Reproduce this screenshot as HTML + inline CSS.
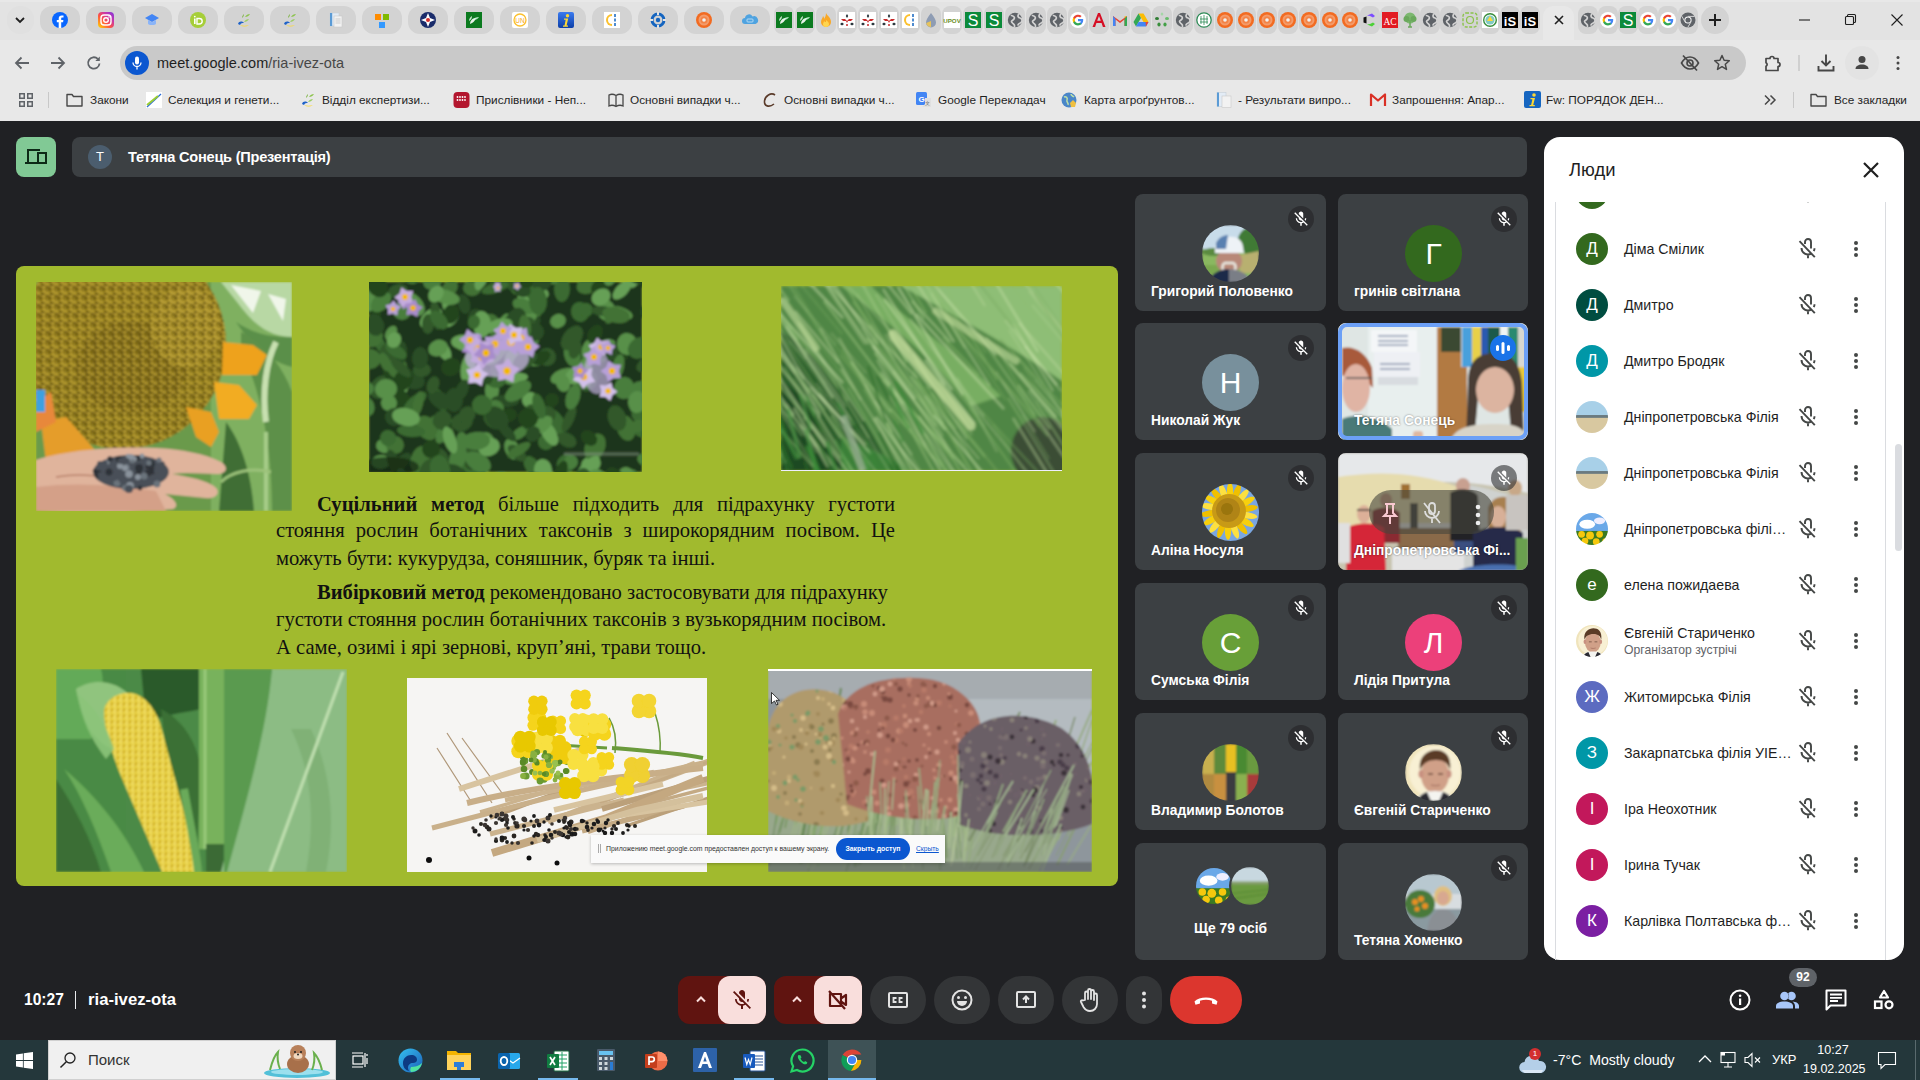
<!DOCTYPE html><html><head><meta charset="utf-8"><title>Meet</title><style>
*{margin:0;padding:0;box-sizing:border-box}
html,body{width:1920px;height:1080px;overflow:hidden;background:#202124;font-family:"Liberation Sans",sans-serif;position:relative}
.a{position:absolute}
svg{position:absolute;overflow:visible}
.pill{position:absolute;top:6px;height:28px;width:40px;border-radius:12px;background:#d3d3d3}
.np{position:absolute;top:6px;height:28px;width:20px;border-radius:8px;background:#d3d3d3}
.bm{position:absolute;top:90px;font-size:11.8px;color:#1f1f1f;white-space:nowrap;line-height:20px}
.tile{position:absolute;width:191px;height:117px;border-radius:8px;background:#3c4043;overflow:hidden}
.tname{position:absolute;left:16px;top:89.8px;font-size:13.8px;font-weight:bold;color:#fff;white-space:nowrap}
.av{position:absolute;left:67px;top:31px;width:57px;height:57px;border-radius:50%;color:#fff;font-size:30px;text-align:center;line-height:57px;overflow:hidden}
.mute{position:absolute;left:153px;top:12px;width:26px;height:26px;border-radius:50%;background:#2d2e31}
.row{position:absolute;left:1576px;width:320px;height:40px}
.pav{position:absolute;left:0;top:4px;width:32px;height:32px;border-radius:50%;color:#fff;font-size:16px;text-align:center;line-height:32px;overflow:hidden}
.pname{position:absolute;left:48px;top:11px;font-size:14.5px;color:#1f1f1f;white-space:nowrap;line-height:18px}
.cbtn{position:absolute;top:976px;height:48px;width:56px;border-radius:24px;background:#333537}
</style></head><body>
<div class="a" style="left:0;top:0;width:1920px;height:40px;background:#e3e3e3"></div>
<div class="a" style="left:0;top:0;width:1920px;height:2px;background:#e8e8e8"></div>
<div class="a" style="left:0;top:40px;width:1920px;height:81px;background:#e8e8e8"></div>
<div class="a" style="left:7px;top:6px;width:27px;height:28px;border-radius:13px;background:#e0e0e0"></div>
<svg style="left:14px;top:15px" width="12" height="10" viewBox="0 0 12 10"><path d="M2 3l4 4 4-4" stroke="#1f1f1f" stroke-width="1.8" fill="none"/></svg>
<div class="pill" style="left:40px"></div>
<svg style="left:52.0px;top:12.0px" width="16" height="16" viewBox="0 0 16 16"><circle cx="8" cy="8" r="8" fill="#0866ff"/><path d="M9.2 16V10.2h1.9l.3-2.3H9.2V6.6c0-.6.2-1.1 1.1-1.1h1.2V3.5c-.3 0-1-.1-1.8-.1-1.8 0-3 1.1-3 3.1v1.5H4.8v2.3h1.9V16z" fill="#fff"/></svg>
<div class="pill" style="left:86px"></div>
<svg style="left:98.0px;top:12.0px" width="16" height="16" viewBox="0 0 16 16"><defs><linearGradient id="igg" x1="0" y1="1" x2="1" y2="0"><stop offset="0" stop-color="#fd0"/><stop offset=".4" stop-color="#ff543e"/><stop offset=".7" stop-color="#c837ab"/><stop offset="1" stop-color="#7a34e0"/></linearGradient></defs><rect width="16" height="16" rx="4" fill="url(#igg)"/><rect x="3" y="3" width="10" height="10" rx="3" fill="none" stroke="#fff" stroke-width="1.4"/><circle cx="8" cy="8" r="2.3" fill="none" stroke="#fff" stroke-width="1.4"/><circle cx="11" cy="5" r=".8" fill="#fff"/></svg>
<div class="pill" style="left:132px"></div>
<svg style="left:144.0px;top:12.0px" width="16" height="16" viewBox="0 0 16 16"><path d="M8 2l7 4-7 4-7-4z" fill="#4285f4"/><path d="M4 8v3.5c0 2 8 2 8 0V8l-4 2.3z" fill="#8ab4f8"/></svg>
<div class="pill" style="left:178px"></div>
<svg style="left:190.0px;top:12.0px" width="16" height="16" viewBox="0 0 16 16"><circle cx="8" cy="8" r="8" fill="#a6ce39"/><rect x="4" y="6.5" width="1.6" height="5.5" fill="#fff"/><circle cx="4.8" cy="4.6" r=".9" fill="#fff"/><path d="M7 6.5h2.2c2 0 3 1.2 3 2.75S11.2 12 9.2 12H7z" fill="none" stroke="#fff" stroke-width="1.4"/></svg>
<div class="pill" style="left:224px"></div>
<svg style="left:236.0px;top:12.0px" width="16" height="16" viewBox="0 0 16 16"><path d="M9 5c1-2 3-3 5-3-1 2-3 3-5 3z" fill="#8bc34a"/><path d="M8 10c1-2 3-3 5-3-1 2-3 3-5 3z" fill="#9ccc65"/><path d="M6 6c0-2 1-3 2-4 0 2-1 3-2 4z" fill="#7cb342"/><path d="M2 12c1-3 4-3 6-1-2 0-3 0-4 2z" fill="#1e62c8"/><path d="M4 13c3 1 6 1 9 0-3 2-6 2-9 0z" fill="#fdd835"/></svg>
<div class="pill" style="left:270px"></div>
<svg style="left:282.0px;top:12.0px" width="16" height="16" viewBox="0 0 16 16"><path d="M9 5c1-2 3-3 5-3-1 2-3 3-5 3z" fill="#8bc34a"/><path d="M8 10c1-2 3-3 5-3-1 2-3 3-5 3z" fill="#9ccc65"/><path d="M6 6c0-2 1-3 2-4 0 2-1 3-2 4z" fill="#7cb342"/><path d="M2 12c1-3 4-3 6-1-2 0-3 0-4 2z" fill="#1e62c8"/><path d="M4 13c3 1 6 1 9 0-3 2-6 2-9 0z" fill="#fdd835"/></svg>
<div class="pill" style="left:316px"></div>
<svg style="left:328.0px;top:12.0px" width="16" height="16" viewBox="0 0 16 16"><rect x="2" y="1" width="9" height="13" fill="#e3ecf6" stroke="#c5cfd8" stroke-width=".6"/><rect x="2" y="1" width="2.2" height="13" fill="#5b9bd5"/><rect x="6" y="4" width="8" height="11" fill="#f2f2f2" stroke="#c8c8c8" stroke-width=".6"/><path d="M7.5 7h5M7.5 9h5M7.5 11h5" stroke="#bbb" stroke-width=".7"/></svg>
<div class="pill" style="left:362px"></div>
<svg style="left:374.0px;top:12.0px" width="16" height="16" viewBox="0 0 16 16"><rect x="1" y="2" width="6" height="6" fill="#ff8c00"/><rect x="9" y="2" width="6" height="6" fill="#7fba00"/><rect x="5" y="10" width="6" height="6" fill="#3399ff"/></svg>
<div class="pill" style="left:408px"></div>
<svg style="left:420.0px;top:12.0px" width="16" height="16" viewBox="0 0 16 16"><circle cx="8" cy="8" r="8" fill="#1a2c6b"/><path d="M8 1l2 5 5 2-5 2-2 5-2-5-5-2 5-2z" fill="#fff"/><circle cx="8" cy="8" r="2" fill="#d32f2f"/></svg>
<div class="pill" style="left:454px"></div>
<svg style="left:466.0px;top:12.0px" width="16" height="16" viewBox="0 0 16 16"><rect width="16" height="16" fill="#0b7a1f"/><path d="M4 12c0-3 2-6 6-6-1 3-3 5-6 6z" fill="#fff" opacity=".9"/><path d="M7 8c1-2 3-3 6-3-1 2-3 3-6 3z" fill="#dfe" opacity=".8"/><path d="M3 9c0-2 1-4 3-5 0 2-1 4-3 5z" fill="#fff" opacity=".8"/></svg>
<div class="pill" style="left:500px"></div>
<svg style="left:512.0px;top:12.0px" width="16" height="16" viewBox="0 0 16 16"><rect width="16" height="16" rx="2" fill="#fff"/><circle cx="8" cy="8" r="6" fill="none" stroke="#fbc02d" stroke-width="1.3"/><text x="8" y="10.5" font-size="6.5" text-anchor="middle" fill="#f9a825" font-family="Liberation Sans">UN</text></svg>
<div class="pill" style="left:546px"></div>
<svg style="left:558.0px;top:12.0px" width="16" height="16" viewBox="0 0 16 16"><defs><linearGradient id="ifg" x1="0" y1="0" x2="0" y2="1"><stop offset="0" stop-color="#3b7bf0"/><stop offset="1" stop-color="#0d3fa8"/></linearGradient></defs><rect width="16" height="16" rx="2" fill="url(#ifg)"/><circle cx="9.5" cy="3.8" r="1.7" fill="#fdd835"/><path d="M6 6.5h4.2l-1.6 7H10v1.2H5v-1.2h1.5l1.2-5.8H6z" fill="#fdd835"/></svg>
<div class="pill" style="left:592px"></div>
<svg style="left:604.0px;top:12.0px" width="16" height="16" viewBox="0 0 16 16"><rect width="16" height="16" fill="#fff"/><path d="M8 2a6 6 0 0 0 0 12z" fill="#fbc02d"/><path d="M8 4a4 4 0 0 0 0 8" fill="#fff"/><path d="M11 2v3M11 6.5v3M11 11v3" stroke="#1565c0" stroke-width="1.5"/></svg>
<div class="pill" style="left:638px"></div>
<svg style="left:650.0px;top:12.0px" width="16" height="16" viewBox="0 0 16 16"><circle cx="8" cy="8" r="6" fill="none" stroke="#1565c0" stroke-width="3"/><circle cx="8" cy="8" r="2.2" fill="#1565c0"/><path d="M8 0v3M8 13v3M0 8h3M13 8h3" stroke="#e3e3e3" stroke-width="2"/></svg>
<div class="pill" style="left:684px"></div>
<svg style="left:696.0px;top:12.0px" width="16" height="16" viewBox="0 0 16 16"><circle cx="8" cy="8" r="8" fill="#f26b21"/><circle cx="8" cy="8" r="5.5" fill="#f49b6a"/><circle cx="8" cy="8" r="3.5" fill="#f26b21" opacity=".5"/><circle cx="8" cy="8" r="1.8" fill="#f1f1f1"/></svg>
<div class="pill" style="left:730px"></div>
<svg style="left:742.0px;top:12.0px" width="16" height="16" viewBox="0 0 16 16"><path d="M3 12a3 3 0 0 1 0-6 4 4 0 0 1 7.5-1.5A3.2 3.2 0 0 1 13.5 12z" fill="#4fa3e0"/><rect x="5" y="7" width="6" height="3" rx=".8" fill="none" stroke="#cfe8fa" stroke-width=".8"/></svg>
<div class="np" style="left:774px;width:20px"></div>
<div class="np" style="left:795px;width:20px"></div>
<div class="np" style="left:816px;width:20px"></div>
<div class="np" style="left:837px;width:20px"></div>
<div class="np" style="left:858px;width:20px"></div>
<div class="np" style="left:879px;width:20px"></div>
<div class="np" style="left:900px;width:20px"></div>
<div class="np" style="left:921px;width:20px"></div>
<div class="np" style="left:942px;width:20px"></div>
<div class="np" style="left:963px;width:20px"></div>
<div class="np" style="left:984px;width:20px"></div>
<div class="np" style="left:1005px;width:20px"></div>
<div class="np" style="left:1026px;width:20px"></div>
<div class="np" style="left:1047px;width:20px"></div>
<div class="np" style="left:1068px;width:20px"></div>
<div class="np" style="left:1089px;width:20px"></div>
<div class="np" style="left:1110px;width:20px"></div>
<div class="np" style="left:1131px;width:20px"></div>
<div class="np" style="left:1152px;width:20px"></div>
<div class="np" style="left:1173px;width:20px"></div>
<div class="np" style="left:1194px;width:20px"></div>
<div class="np" style="left:1215px;width:20px"></div>
<div class="np" style="left:1236px;width:20px"></div>
<div class="np" style="left:1257px;width:20px"></div>
<div class="np" style="left:1278px;width:20px"></div>
<div class="np" style="left:1299px;width:20px"></div>
<div class="np" style="left:1320px;width:20px"></div>
<div class="np" style="left:1340px;width:20px"></div>
<div class="np" style="left:1360px;width:20px"></div>
<div class="np" style="left:1380px;width:20px"></div>
<div class="np" style="left:1400px;width:20px"></div>
<div class="np" style="left:1420px;width:20px"></div>
<div class="np" style="left:1440px;width:20px"></div>
<div class="np" style="left:1460px;width:20px"></div>
<div class="np" style="left:1480px;width:20px"></div>
<div class="np" style="left:1500px;width:20px"></div>
<div class="np" style="left:1520px;width:20px"></div>
<svg style="left:776.0px;top:12.0px" width="16" height="16" viewBox="0 0 16 16"><rect width="16" height="16" fill="#0b7a1f"/><path d="M4 12c0-3 2-6 6-6-1 3-3 5-6 6z" fill="#fff" opacity=".9"/><path d="M7 8c1-2 3-3 6-3-1 2-3 3-6 3z" fill="#dfe" opacity=".8"/><path d="M3 9c0-2 1-4 3-5 0 2-1 4-3 5z" fill="#fff" opacity=".8"/></svg>
<svg style="left:797.0px;top:12.0px" width="16" height="16" viewBox="0 0 16 16"><rect width="16" height="16" fill="#0b7a1f"/><path d="M4 12c0-3 2-6 6-6-1 3-3 5-6 6z" fill="#fff" opacity=".9"/><path d="M7 8c1-2 3-3 6-3-1 2-3 3-6 3z" fill="#dfe" opacity=".8"/><path d="M3 9c0-2 1-4 3-5 0 2-1 4-3 5z" fill="#fff" opacity=".8"/></svg>
<svg style="left:818.0px;top:12.0px" width="16" height="16" viewBox="0 0 16 16"><path d="M8 1c1 3 5 4 5 9a5 5 0 0 1-10 0c0-3 2-4 2-6 1 1 1 2 1 3 1-2 2-3 2-6z" fill="#f9a825"/><path d="M8 8c1 1 3 2 3 4a3 3 0 0 1-6 0c0-1 1-2 1-3 1 1 1 1 2 1z" fill="#ffd54f"/></svg>
<svg style="left:839.0px;top:12.0px" width="16" height="16" viewBox="0 0 16 16"><rect width="16" height="16" fill="#fff"/><path d="M8 2l1.2 2L8 6 6.8 4z" fill="#263238"/><path d="M2 7h4l2 2 2-2h4l-2 2h-3l-1 2-1-2H4z" fill="#c62828"/><path d="M1 12l2-1.5 2 1.5-2 1.5zM11 12l2-1.5 2 1.5-2 1.5z" fill="#263238"/><circle cx="8" cy="13" r="1" fill="#c62828"/></svg>
<svg style="left:860.0px;top:12.0px" width="16" height="16" viewBox="0 0 16 16"><rect width="16" height="16" fill="#fff"/><path d="M8 2l1.2 2L8 6 6.8 4z" fill="#263238"/><path d="M2 7h4l2 2 2-2h4l-2 2h-3l-1 2-1-2H4z" fill="#c62828"/><path d="M1 12l2-1.5 2 1.5-2 1.5zM11 12l2-1.5 2 1.5-2 1.5z" fill="#263238"/><circle cx="8" cy="13" r="1" fill="#c62828"/></svg>
<svg style="left:881.0px;top:12.0px" width="16" height="16" viewBox="0 0 16 16"><rect width="16" height="16" fill="#fff"/><path d="M8 2l1.2 2L8 6 6.8 4z" fill="#263238"/><path d="M2 7h4l2 2 2-2h4l-2 2h-3l-1 2-1-2H4z" fill="#c62828"/><path d="M1 12l2-1.5 2 1.5-2 1.5zM11 12l2-1.5 2 1.5-2 1.5z" fill="#263238"/><circle cx="8" cy="13" r="1" fill="#c62828"/></svg>
<svg style="left:902.0px;top:12.0px" width="16" height="16" viewBox="0 0 16 16"><rect width="16" height="16" fill="#fff"/><path d="M8 2a6 6 0 0 0 0 12z" fill="#fbc02d"/><path d="M8 4a4 4 0 0 0 0 8" fill="#fff"/><path d="M11 2v3M11 6.5v3M11 11v3" stroke="#1565c0" stroke-width="1.5"/></svg>
<svg style="left:923.0px;top:12.0px" width="16" height="16" viewBox="0 0 16 16"><path d="M8 1c3 4 5 7 5 9.5A5 5 0 0 1 3 10.5C3 8 5 5 8 1z" fill="#8e9cb3"/><path d="M3.2 11a5 5 0 0 0 4.8 4V9z" fill="#e6c35c"/></svg>
<svg style="left:944.0px;top:12.0px" width="16" height="16" viewBox="0 0 16 16"><rect width="16" height="16" fill="#fff"/><text x="8" y="10.5" font-size="6.2" font-weight="bold" text-anchor="middle" fill="#6b8e23" font-family="Liberation Sans">UPOV</text></svg>
<svg style="left:965.0px;top:12.0px" width="16" height="16" viewBox="0 0 16 16"><rect width="16" height="16" fill="#0b8a3a"/><text x="8" y="14.2" font-size="16" text-anchor="middle" fill="#fff" font-family="Liberation Sans">S</text></svg>
<svg style="left:986.0px;top:12.0px" width="16" height="16" viewBox="0 0 16 16"><rect width="16" height="16" fill="#0b8a3a"/><text x="8" y="14.2" font-size="16" text-anchor="middle" fill="#fff" font-family="Liberation Sans">S</text></svg>
<svg style="left:1007.0px;top:12.0px" width="16" height="16" viewBox="0 0 16 16"><circle cx="8" cy="8" r="7.2" fill="#5f6368"/><path d="M4.5 3.5c2.5.5 3.5 2 2.5 3.5S3.5 8.5 5 10.5s3 1.5 2.5 4M11.5 2.5c-1 1.5-.5 3 1.5 3.5s2.5 2.5 1.5 4-3 1-3.5 3" stroke="#d3d3d3" stroke-width="1.7" fill="none" stroke-linecap="round"/></svg>
<svg style="left:1028.0px;top:12.0px" width="16" height="16" viewBox="0 0 16 16"><circle cx="8" cy="8" r="7.2" fill="#5f6368"/><path d="M4.5 3.5c2.5.5 3.5 2 2.5 3.5S3.5 8.5 5 10.5s3 1.5 2.5 4M11.5 2.5c-1 1.5-.5 3 1.5 3.5s2.5 2.5 1.5 4-3 1-3.5 3" stroke="#d3d3d3" stroke-width="1.7" fill="none" stroke-linecap="round"/></svg>
<svg style="left:1049.0px;top:12.0px" width="16" height="16" viewBox="0 0 16 16"><circle cx="8" cy="8" r="7.2" fill="#5f6368"/><path d="M4.5 3.5c2.5.5 3.5 2 2.5 3.5S3.5 8.5 5 10.5s3 1.5 2.5 4M11.5 2.5c-1 1.5-.5 3 1.5 3.5s2.5 2.5 1.5 4-3 1-3.5 3" stroke="#d3d3d3" stroke-width="1.7" fill="none" stroke-linecap="round"/></svg>
<svg style="left:1070.0px;top:12.0px" width="16" height="16" viewBox="0 0 16 16"><circle cx="8" cy="8" r="8" fill="#fff"/><path d="M13.2 8.2c0-.4 0-.8-.1-1.2H8v2.2h2.9a2.6 2.6 0 0 1-1.1 1.7v1.4h1.8a5.3 5.3 0 0 0 1.6-4.1z" fill="#4285f4"/><path d="M8 13.4c1.5 0 2.7-.5 3.6-1.3l-1.8-1.4c-.5.3-1.1.5-1.8.5-1.4 0-2.6-.9-3-2.2H3.2v1.4A5.4 5.4 0 0 0 8 13.4z" fill="#34a853"/><path d="M5 9a3.2 3.2 0 0 1 0-2V5.6H3.2a5.4 5.4 0 0 0 0 4.8z" fill="#fbbc05"/><path d="M8 4.7c.8 0 1.5.3 2.1.8l1.5-1.5A5.4 5.4 0 0 0 3.2 5.6L5 7c.4-1.3 1.6-2.3 3-2.3z" fill="#ea4335"/></svg>
<svg style="left:1091.0px;top:12.0px" width="16" height="16" viewBox="0 0 16 16"><path d="M1.5 15L7 1h2l5.5 14h-2.6L10.6 11H5.4l-1.3 4zM6.2 8.8h3.6L8 4z" fill="#d50f25"/></svg>
<svg style="left:1112.0px;top:12.0px" width="16" height="16" viewBox="0 0 16 16"><path d="M1 4v10h2.5V7.5L8 11l4.5-3.5V14H15V4l-7 5z" fill="#ea4335"/><path d="M1 4v10h2.5V7z" fill="#4285f4"/><path d="M12.5 7v7H15V4z" fill="#34a853"/><path d="M15 4l-2.5 2V4.5z" fill="#fbbc04"/></svg>
<svg style="left:1133.0px;top:12.0px" width="16" height="16" viewBox="0 0 16 16"><path d="M5.5 1.5h5L15.5 10h-5z" fill="#fbbc04"/><path d="M5.5 1.5L.5 10 3 14.5 8 6z" fill="#34a853"/><path d="M3 14.5h10l2.5-4.5H5.5z" fill="#4285f4"/><path d="M13 14.5l2.5-4.5h-3z" fill="#ea4335"/></svg>
<svg style="left:1154.0px;top:12.0px" width="16" height="16" viewBox="0 0 16 16"><ellipse cx="3" cy="6.5" rx="2" ry="1.6" fill="#2e7d32"/><ellipse cx="13" cy="6.5" rx="2" ry="1.6" fill="#66bb6a"/><ellipse cx="5" cy="12.5" rx="1.6" ry="2" fill="#388e3c"/><ellipse cx="11" cy="12.5" rx="1.6" ry="2" fill="#43a047"/><ellipse cx="8" cy="2" rx="1.3" ry="1.6" fill="#a5d6a7"/></svg>
<svg style="left:1175.0px;top:12.0px" width="16" height="16" viewBox="0 0 16 16"><circle cx="8" cy="8" r="7.2" fill="#5f6368"/><path d="M4.5 3.5c2.5.5 3.5 2 2.5 3.5S3.5 8.5 5 10.5s3 1.5 2.5 4M11.5 2.5c-1 1.5-.5 3 1.5 3.5s2.5 2.5 1.5 4-3 1-3.5 3" stroke="#d3d3d3" stroke-width="1.7" fill="none" stroke-linecap="round"/></svg>
<svg style="left:1196.0px;top:12.0px" width="16" height="16" viewBox="0 0 16 16"><circle cx="8" cy="8" r="7.2" fill="#fff" stroke="#2e8b57" stroke-width="1.3"/><path d="M5 4v8M8 3v10M11 4v8M4 7h8M4 10h8" stroke="#2e8b57" stroke-width=".8"/></svg>
<svg style="left:1217.0px;top:12.0px" width="16" height="16" viewBox="0 0 16 16"><circle cx="8" cy="8" r="8" fill="#f26b21"/><circle cx="8" cy="8" r="5.5" fill="#f49b6a"/><circle cx="8" cy="8" r="3.5" fill="#f26b21" opacity=".5"/><circle cx="8" cy="8" r="1.8" fill="#f1f1f1"/></svg>
<svg style="left:1238.0px;top:12.0px" width="16" height="16" viewBox="0 0 16 16"><circle cx="8" cy="8" r="8" fill="#f26b21"/><circle cx="8" cy="8" r="5.5" fill="#f49b6a"/><circle cx="8" cy="8" r="3.5" fill="#f26b21" opacity=".5"/><circle cx="8" cy="8" r="1.8" fill="#f1f1f1"/></svg>
<svg style="left:1259.0px;top:12.0px" width="16" height="16" viewBox="0 0 16 16"><circle cx="8" cy="8" r="8" fill="#f26b21"/><circle cx="8" cy="8" r="5.5" fill="#f49b6a"/><circle cx="8" cy="8" r="3.5" fill="#f26b21" opacity=".5"/><circle cx="8" cy="8" r="1.8" fill="#f1f1f1"/></svg>
<svg style="left:1280.0px;top:12.0px" width="16" height="16" viewBox="0 0 16 16"><circle cx="8" cy="8" r="8" fill="#f26b21"/><circle cx="8" cy="8" r="5.5" fill="#f49b6a"/><circle cx="8" cy="8" r="3.5" fill="#f26b21" opacity=".5"/><circle cx="8" cy="8" r="1.8" fill="#f1f1f1"/></svg>
<svg style="left:1301.0px;top:12.0px" width="16" height="16" viewBox="0 0 16 16"><circle cx="8" cy="8" r="8" fill="#f26b21"/><circle cx="8" cy="8" r="5.5" fill="#f49b6a"/><circle cx="8" cy="8" r="3.5" fill="#f26b21" opacity=".5"/><circle cx="8" cy="8" r="1.8" fill="#f1f1f1"/></svg>
<svg style="left:1322.0px;top:12.0px" width="16" height="16" viewBox="0 0 16 16"><circle cx="8" cy="8" r="8" fill="#f26b21"/><circle cx="8" cy="8" r="5.5" fill="#f49b6a"/><circle cx="8" cy="8" r="3.5" fill="#f26b21" opacity=".5"/><circle cx="8" cy="8" r="1.8" fill="#f1f1f1"/></svg>
<svg style="left:1342.0px;top:12.0px" width="16" height="16" viewBox="0 0 16 16"><circle cx="8" cy="8" r="8" fill="#f26b21"/><circle cx="8" cy="8" r="5.5" fill="#f49b6a"/><circle cx="8" cy="8" r="3.5" fill="#f26b21" opacity=".5"/><circle cx="8" cy="8" r="1.8" fill="#f1f1f1"/></svg>
<svg style="left:1362.0px;top:12.0px" width="16" height="16" viewBox="0 0 16 16"><path d="M5 3.5L10 1.5l3 2.5-2 1.5L8 4z" fill="#7c4dff"/><path d="M1.5 5.5L4.5 4.5 4.5 11.5 1.5 10.5z" fill="#111"/><path d="M5 12.5L10 14.5l3-2.5-2-1.5L8 12z" fill="#4cd137"/></svg>
<svg style="left:1382.0px;top:12.0px" width="16" height="16" viewBox="0 0 16 16"><rect width="16" height="16" fill="#e21b22"/><text x="8" y="13" font-size="9.5" text-anchor="middle" fill="#fff" font-family="Liberation Serif">AC</text></svg>
<svg style="left:1402.0px;top:12.0px" width="16" height="16" viewBox="0 0 16 16"><circle cx="8" cy="6" r="5.5" fill="#7cb86f"/><circle cx="4.5" cy="7" r="3" fill="#6aa85c"/><circle cx="11.5" cy="7" r="3" fill="#6aa85c"/><path d="M8 8v7M6 15h4" stroke="#6aa85c" stroke-width="1.5"/></svg>
<svg style="left:1422.0px;top:12.0px" width="16" height="16" viewBox="0 0 16 16"><circle cx="8" cy="8" r="7.2" fill="#5f6368"/><path d="M4.5 3.5c2.5.5 3.5 2 2.5 3.5S3.5 8.5 5 10.5s3 1.5 2.5 4M11.5 2.5c-1 1.5-.5 3 1.5 3.5s2.5 2.5 1.5 4-3 1-3.5 3" stroke="#d3d3d3" stroke-width="1.7" fill="none" stroke-linecap="round"/></svg>
<svg style="left:1442.0px;top:12.0px" width="16" height="16" viewBox="0 0 16 16"><circle cx="8" cy="8" r="7.2" fill="#5f6368"/><path d="M4.5 3.5c2.5.5 3.5 2 2.5 3.5S3.5 8.5 5 10.5s3 1.5 2.5 4M11.5 2.5c-1 1.5-.5 3 1.5 3.5s2.5 2.5 1.5 4-3 1-3.5 3" stroke="#d3d3d3" stroke-width="1.7" fill="none" stroke-linecap="round"/></svg>
<svg style="left:1462.0px;top:12.0px" width="16" height="16" viewBox="0 0 16 16"><rect x="1" y="1" width="14" height="14" rx="3" fill="none" stroke="#8bc34a" stroke-width="1.4" stroke-dasharray="3 1.5"/><circle cx="8" cy="8" r="3.5" fill="none" stroke="#8bc34a" stroke-width="1.2"/></svg>
<svg style="left:1482.0px;top:12.0px" width="16" height="16" viewBox="0 0 16 16"><rect width="16" height="16" fill="#fff"/><circle cx="8" cy="8" r="7" fill="#388e3c"/><circle cx="8" cy="8" r="5.6" fill="#fff"/><circle cx="8" cy="8" r="4.6" fill="#80cbc4"/><path d="M8 4l3 5H5z" fill="#fdd835"/></svg>
<svg style="left:1502.0px;top:12.0px" width="16" height="16" viewBox="0 0 16 16"><rect width="16" height="16" fill="#000"/><text x="8" y="13.5" font-size="13" font-weight="bold" text-anchor="middle" fill="#fff" font-family="Liberation Sans">iS</text></svg>
<svg style="left:1522.0px;top:12.0px" width="16" height="16" viewBox="0 0 16 16"><rect width="16" height="16" fill="#000"/><text x="8" y="13.5" font-size="13" font-weight="bold" text-anchor="middle" fill="#fff" font-family="Liberation Sans">iS</text></svg>
<div class="a" style="left:1543px;top:6px;width:31px;height:34px;border-radius:10px 10px 0 0;background:#e8e8e8"></div>
<svg style="left:1553px;top:14px" width="12" height="12" viewBox="0 0 12 12"><path d="M2 2l8 8M10 2l-8 8" stroke="#1f1f1f" stroke-width="1.6"/></svg>
<div class="np" style="left:1578px"></div>
<div class="np" style="left:1598px"></div>
<div class="np" style="left:1618px"></div>
<div class="np" style="left:1638px"></div>
<div class="np" style="left:1658px"></div>
<div class="np" style="left:1678px"></div>
<svg style="left:1580.0px;top:12.0px" width="16" height="16" viewBox="0 0 16 16"><circle cx="8" cy="8" r="7.2" fill="#5f6368"/><path d="M4.5 3.5c2.5.5 3.5 2 2.5 3.5S3.5 8.5 5 10.5s3 1.5 2.5 4M11.5 2.5c-1 1.5-.5 3 1.5 3.5s2.5 2.5 1.5 4-3 1-3.5 3" stroke="#d3d3d3" stroke-width="1.7" fill="none" stroke-linecap="round"/></svg>
<svg style="left:1600.0px;top:12.0px" width="16" height="16" viewBox="0 0 16 16"><circle cx="8" cy="8" r="8" fill="#fff"/><path d="M13.2 8.2c0-.4 0-.8-.1-1.2H8v2.2h2.9a2.6 2.6 0 0 1-1.1 1.7v1.4h1.8a5.3 5.3 0 0 0 1.6-4.1z" fill="#4285f4"/><path d="M8 13.4c1.5 0 2.7-.5 3.6-1.3l-1.8-1.4c-.5.3-1.1.5-1.8.5-1.4 0-2.6-.9-3-2.2H3.2v1.4A5.4 5.4 0 0 0 8 13.4z" fill="#34a853"/><path d="M5 9a3.2 3.2 0 0 1 0-2V5.6H3.2a5.4 5.4 0 0 0 0 4.8z" fill="#fbbc05"/><path d="M8 4.7c.8 0 1.5.3 2.1.8l1.5-1.5A5.4 5.4 0 0 0 3.2 5.6L5 7c.4-1.3 1.6-2.3 3-2.3z" fill="#ea4335"/></svg>
<svg style="left:1620.0px;top:12.0px" width="16" height="16" viewBox="0 0 16 16"><rect width="16" height="16" fill="#0b8a3a"/><text x="8" y="14.2" font-size="16" text-anchor="middle" fill="#fff" font-family="Liberation Sans">S</text></svg>
<svg style="left:1640.0px;top:12.0px" width="16" height="16" viewBox="0 0 16 16"><circle cx="8" cy="8" r="8" fill="#fff"/><path d="M13.2 8.2c0-.4 0-.8-.1-1.2H8v2.2h2.9a2.6 2.6 0 0 1-1.1 1.7v1.4h1.8a5.3 5.3 0 0 0 1.6-4.1z" fill="#4285f4"/><path d="M8 13.4c1.5 0 2.7-.5 3.6-1.3l-1.8-1.4c-.5.3-1.1.5-1.8.5-1.4 0-2.6-.9-3-2.2H3.2v1.4A5.4 5.4 0 0 0 8 13.4z" fill="#34a853"/><path d="M5 9a3.2 3.2 0 0 1 0-2V5.6H3.2a5.4 5.4 0 0 0 0 4.8z" fill="#fbbc05"/><path d="M8 4.7c.8 0 1.5.3 2.1.8l1.5-1.5A5.4 5.4 0 0 0 3.2 5.6L5 7c.4-1.3 1.6-2.3 3-2.3z" fill="#ea4335"/></svg>
<svg style="left:1660.0px;top:12.0px" width="16" height="16" viewBox="0 0 16 16"><circle cx="8" cy="8" r="8" fill="#fff"/><path d="M13.2 8.2c0-.4 0-.8-.1-1.2H8v2.2h2.9a2.6 2.6 0 0 1-1.1 1.7v1.4h1.8a5.3 5.3 0 0 0 1.6-4.1z" fill="#4285f4"/><path d="M8 13.4c1.5 0 2.7-.5 3.6-1.3l-1.8-1.4c-.5.3-1.1.5-1.8.5-1.4 0-2.6-.9-3-2.2H3.2v1.4A5.4 5.4 0 0 0 8 13.4z" fill="#34a853"/><path d="M5 9a3.2 3.2 0 0 1 0-2V5.6H3.2a5.4 5.4 0 0 0 0 4.8z" fill="#fbbc05"/><path d="M8 4.7c.8 0 1.5.3 2.1.8l1.5-1.5A5.4 5.4 0 0 0 3.2 5.6L5 7c.4-1.3 1.6-2.3 3-2.3z" fill="#ea4335"/></svg>
<svg style="left:1680.0px;top:12.0px" width="16" height="16" viewBox="0 0 16 16"><circle cx="8" cy="8" r="7.5" fill="#5f6368"/><circle cx="8" cy="8" r="3.6" fill="#fff"/><circle cx="8" cy="8" r="2.6" fill="#5f6368"/><path d="M8 4.4h6.6M5 9.8L1.8 4.2M11 9.8l-3.3 5.7" stroke="#d3d3d3" stroke-width="1"/></svg>
<div class="a" style="left:1701px;top:6px;width:28px;height:28px;border-radius:14px;background:#d3d3d3"></div>
<svg style="left:1707px;top:12px" width="16" height="16" viewBox="0 0 16 16"><path d="M8 2v12M2 8h12" stroke="#1f1f1f" stroke-width="2"/></svg>
<svg style="left:1799px;top:14px" width="12" height="12" viewBox="0 0 12 12"><path d="M0 6h11" stroke="#1f1f1f" stroke-width="1.1"/></svg>
<svg style="left:1845px;top:14px" width="12" height="12" viewBox="0 0 12 12"><rect x=".5" y="2.5" width="8" height="8" rx="1" fill="none" stroke="#1f1f1f" stroke-width="1.1"/><path d="M2.5 2.5V1.5c0-.6.4-1 1-1h6c.6 0 1 .4 1 1v6c0 .6-.4 1-1 1h-1" fill="none" stroke="#1f1f1f" stroke-width="1.1"/></svg>
<svg style="left:1891px;top:14px" width="12" height="12" viewBox="0 0 12 12"><path d="M.5 .5l11 11M11.5 .5l-11 11" stroke="#1f1f1f" stroke-width="1.1"/></svg>
<svg style="left:13px;top:54px" width="18" height="18" viewBox="0 0 18 18"><path d="M16 9H3M8.5 3.5L3 9l5.5 5.5" stroke="#5f6368" stroke-width="1.8" fill="none"/></svg>
<svg style="left:49px;top:54px" width="18" height="18" viewBox="0 0 18 18"><path d="M2 9h13M9.5 3.5L15 9l-5.5 5.5" stroke="#5f6368" stroke-width="1.8" fill="none"/></svg>
<svg style="left:85px;top:54px" width="18" height="18" viewBox="0 0 18 18"><path d="M14.5 9.5a5.7 5.7 0 1 1-1.7-4.6" stroke="#5f6368" stroke-width="1.8" fill="none"/><path d="M14.8 2.5v4.5h-4.5z" fill="#5f6368"/></svg>
<div class="a" style="left:120px;top:46px;width:1626px;height:34px;border-radius:17px;background:#c9c9c9"></div>
<div class="a" style="left:125px;top:51px;width:24px;height:24px;border-radius:12px;background:#0b57d0"></div>
<svg style="left:131px;top:56px" width="12" height="14" viewBox="0 0 12 14"><rect x="4" y="0.5" width="4" height="8" rx="2" fill="#fff"/><path d="M2 6.5a4 4 0 0 0 8 0M6 10.5v3" stroke="#fff" stroke-width="1.3" fill="none"/></svg>
<div class="a" style="left:157px;top:53px;font-size:14.5px;line-height:20px;color:#1f1f1f;white-space:nowrap">meet.google.com<span style="color:#474747">/ria-ivez-ota</span></div>
<svg style="left:1680px;top:54px" width="20" height="18" viewBox="0 0 20 18"><path d="M1.5 9C4 4.5 7 3 10 3s6 1.5 8.5 6C16 13.5 13 15 10 15S4 13.5 1.5 9z" fill="none" stroke="#474747" stroke-width="1.6"/><circle cx="10" cy="9" r="3" fill="none" stroke="#474747" stroke-width="1.6"/><path d="M3 1.5l14 15" stroke="#474747" stroke-width="1.7"/></svg>
<svg style="left:1712px;top:53px" width="20" height="20" viewBox="0 0 20 20"><path d="M10 2.5l2.1 4.8 5.2.5-4 3.5 1.2 5.1L10 13.7l-4.5 2.7 1.2-5.1-4-3.5 5.2-.5z" fill="none" stroke="#474747" stroke-width="1.5" stroke-linejoin="round"/></svg>
<svg style="left:1763px;top:53px" width="20" height="20" viewBox="0 0 20 20"><path d="M3 5.5h4a2 2 0 0 1 4 0h4v4a2 2 0 0 1 0 4v4H3v-4.2a2 2 0 0 0 0-3.6z" fill="none" stroke="#474747" stroke-width="1.7" stroke-linejoin="round"/></svg>
<div class="a" style="left:1798px;top:55px;width:2px;height:16px;background:#d0d0d0"></div>
<svg style="left:1816px;top:53px" width="20" height="20" viewBox="0 0 20 20"><path d="M10 1.5v11M5.5 8L10 12.5 14.5 8M2.5 13v4.5h15V13" stroke="#474747" stroke-width="1.9" fill="none"/></svg>
<div class="a" style="left:1845px;top:46px;width:34px;height:34px;border-radius:17px;background:#e3e3e3"></div>
<svg style="left:1852px;top:53px" width="20" height="20" viewBox="0 0 20 20"><circle cx="10" cy="6.5" r="3.5" fill="#474747"/><path d="M3.5 16c0-3 3-4.5 6.5-4.5s6.5 1.5 6.5 4.5z" fill="#474747"/></svg>
<svg style="left:1892px;top:55px" width="12" height="18" viewBox="0 0 12 18"><circle cx="6" cy="2.5" r="1.5" fill="#474747"/><circle cx="6" cy="8" r="1.5" fill="#474747"/><circle cx="6" cy="13.5" r="1.5" fill="#474747"/></svg>
<svg style="left:19px;top:93px" width="14" height="14" viewBox="0 0 14 14"><g fill="none" stroke="#5f6368" stroke-width="1.5"><rect x=".75" y=".75" width="4.5" height="4.5"/><rect x="8.75" y=".75" width="4.5" height="4.5"/><rect x=".75" y="8.75" width="4.5" height="4.5"/><rect x="8.75" y="8.75" width="4.5" height="4.5"/></g></svg>
<div class="a" style="left:48px;top:92px;width:1px;height:16px;background:#c8c8c8"></div>
<svg style="left:66px;top:93px" width="17" height="14" viewBox="0 0 17 14"><path d="M1 1.5h5l1.5 2H16v9.5H1z" fill="none" stroke="#474747" stroke-width="1.4" stroke-linejoin="round"/></svg>
<div class="bm" style="left:90px">Закони</div>
<svg style="left:146px;top:92px" width="16" height="16" viewBox="0 0 16 16"><rect width="16" height="16" fill="#fff"/><path d="M1 15L15 2" stroke="#2b6cd8" stroke-width="1.2"/><path d="M1 13L12 4" stroke="#9acd32" stroke-width="2"/></svg>
<div class="bm" style="left:168px">Селекция и генети...</div>
<svg style="left:300.0px;top:92.0px" width="16" height="16" viewBox="0 0 16 16"><path d="M9 5c1-2 3-3 5-3-1 2-3 3-5 3z" fill="#8bc34a"/><path d="M8 10c1-2 3-3 5-3-1 2-3 3-5 3z" fill="#9ccc65"/><path d="M6 6c0-2 1-3 2-4 0 2-1 3-2 4z" fill="#7cb342"/><path d="M2 12c1-3 4-3 6-1-2 0-3 0-4 2z" fill="#1e62c8"/><path d="M4 13c3 1 6 1 9 0-3 2-6 2-9 0z" fill="#fdd835"/></svg>
<div class="bm" style="left:322px">Відділ експертизи...</div>
<svg style="left:453px;top:92px" width="17" height="16" viewBox="0 0 17 16"><rect x=".5" width="16" height="16" rx="4" fill="#b3162e"/><g fill="#fff"><circle cx="4.5" cy="5" r=".9"/><circle cx="7" cy="5" r=".9"/><circle cx="9.5" cy="5" r=".9"/><circle cx="12" cy="5" r=".9"/><circle cx="4.5" cy="8" r=".9"/><circle cx="7" cy="8" r=".9"/><circle cx="9.5" cy="8" r=".9"/><circle cx="12" cy="8" r=".9"/></g></svg>
<div class="bm" style="left:476px">Прислівники - Неп...</div>
<svg style="left:608px;top:93px" width="16" height="14" viewBox="0 0 16 14"><path d="M1 2c2-1 4.5-1 7 .5C10.5 1 13 1 15 2v11c-2-1-4.5-1-7 .5C5.5 12 3 12 1 13z M8 2.5v11" fill="none" stroke="#474747" stroke-width="1.3"/></svg>
<div class="bm" style="left:630px">Основні випадки ч...</div>
<svg style="left:762px;top:92px" width="16" height="16" viewBox="0 0 16 16"><path d="M13 3C9 0 3 4 2.5 9S7 16 12 12" fill="none" stroke="#5a3b2a" stroke-width="1.6"/></svg>
<div class="bm" style="left:784px">Основні випадки ч...</div>
<svg style="left:916px;top:92px" width="16" height="16" viewBox="0 0 16 16"><rect x="0" y="0" width="11" height="13" rx="1.5" fill="#4285f4"/><text x="5.5" y="10" font-size="8" font-weight="bold" text-anchor="middle" fill="#fff" font-family="Liberation Sans">G</text><path d="M9 6h6v9H6l3-3z" fill="#e0e0e0"/><text x="11.5" y="13" font-size="5" text-anchor="middle" fill="#555" font-family="Liberation Sans">文</text></svg>
<div class="bm" style="left:938px">Google Перекладач</div>
<svg style="left:1061px;top:92px" width="17" height="17" viewBox="0 0 17 17"><circle cx="8" cy="8" r="7.5" fill="#4a86c8"/><path d="M3 5c2-1 4 1 3 3s2 3 1 5M10 2c0 2 2 2 3 3" stroke="#bde0a8" stroke-width="1.5" fill="none"/><path d="M9 11l3-3 3 3-1 4h-4z" fill="#f0c040"/></svg>
<div class="bm" style="left:1084px">Карта агроґрунтов...</div>
<svg style="left:1216px;top:92px" width="16" height="16" viewBox="0 0 16 16"><rect x="1" y="0.5" width="9" height="14" fill="#e3ecf6" stroke="#c5cfd8" stroke-width=".6"/><rect x="1" y=".5" width="2" height="14" fill="#5b9bd5"/><rect x="6" y="4" width="9" height="11.5" fill="#f2f2f2" stroke="#c8c8c8" stroke-width=".6"/></svg>
<div class="bm" style="left:1238px">- Результати випро...</div>
<svg style="left:1370px;top:93px" width="16" height="14" viewBox="0 0 16 14"><path d="M1 13V1.5l7 6 7-6V13" fill="none" stroke="#d93025" stroke-width="2.2" stroke-linejoin="round"/></svg>
<div class="bm" style="left:1392px">Запрошення: Апар...</div>
<svg style="left:1524px;top:91px" width="17" height="17" viewBox="0 0 17 17"><rect width="17" height="17" rx="2" fill="#1565c0"/><circle cx="10" cy="4" r="1.8" fill="#fdd835"/><path d="M6.5 7h4.5l-1.8 7h1.6v1.3H5.5V14h1.6l1.3-5.7H6.5z" fill="#fdd835"/></svg>
<div class="bm" style="left:1546px">Fw: ПОРЯДОК ДЕН...</div>
<svg style="left:1763px;top:94px" width="14" height="12" viewBox="0 0 14 12"><path d="M2 1.5L6.5 6 2 10.5M7.5 1.5L12 6l-4.5 4.5" stroke="#474747" stroke-width="1.5" fill="none"/></svg>
<div class="a" style="left:1793px;top:92px;width:1px;height:16px;background:#c8c8c8"></div>
<svg style="left:1810px;top:93px" width="17" height="14" viewBox="0 0 17 14"><path d="M1 1.5h5l1.5 2H16v9.5H1z" fill="none" stroke="#474747" stroke-width="1.4" stroke-linejoin="round"/></svg>
<div class="bm" style="left:1834px">Все закладки</div>
<div class="a" style="left:16px;top:137px;width:40px;height:40px;border-radius:8px;background:#81c995"></div>
<svg style="left:24px;top:147px" width="24" height="20" viewBox="0 0 24 20"><path d="M3 3h13" stroke="#0d2a17" stroke-width="2"/><path d="M4 3v12M1 16h14" stroke="#0d2a17" stroke-width="2"/><rect x="14" y="6" width="8" height="10" fill="none" stroke="#0d2a17" stroke-width="2"/></svg>
<div class="a" style="left:72px;top:137px;width:1455px;height:40px;border-radius:8px;background:#3c4043"></div>
<div class="a" style="left:88px;top:145px;width:24px;height:24px;border-radius:12px;background:#4b5d6e;color:#fff;font-size:13px;line-height:24px;text-align:center">T</div>
<div class="a" style="left:128px;top:147px;font-size:14.6px;letter-spacing:-0.25px;line-height:20px;color:#fff;font-weight:bold;white-space:nowrap">Тетяна Сонець (Презентація)</div>
<div class="a" style="left:16px;top:266px;width:1102px;height:620px;background:#a1ba2e;border-radius:8px"></div>
<svg style="left:36px;top:282px" width="256" height="229" viewBox="0 0 256 229"><defs><filter id="b36" x="-10%" y="-10%" width="120%" height="120%"><feGaussianBlur stdDeviation="1.0"/></filter><clipPath id="c36"><rect width="256" height="229"/></clipPath></defs><g clip-path="url(#c36)"><g filter="url(#b36)"><defs><pattern id="sfd" width="9" height="9" patternUnits="userSpaceOnUse"><circle cx="2.1" cy="4.9" r="1.1" fill="#5a4a10" opacity="1.0"/><circle cx="4.3" cy="5.2" r="1.2" fill="#c8ac40" opacity="1.0"/><circle cx="2.3" cy="2.1" r="1.5" fill="#c8ac40" opacity="1.0"/><circle cx="4.9" cy="4.9" r="1.1" fill="#b89a30" opacity="1.0"/><circle cx="2.1" cy="1.4" r="1.4" fill="#c8ac40" opacity="1.0"/><circle cx="6.7" cy="6.0" r="0.8" fill="#5a4a10" opacity="1.0"/><circle cx="0.4" cy="7.0" r="1.4" fill="#7e6a18" opacity="1.0"/><circle cx="4.3" cy="6.5" r="1.4" fill="#9c8424" opacity="1.0"/><circle cx="7.1" cy="3.8" r="1.3" fill="#5a4a10" opacity="1.0"/><circle cx="4.0" cy="8.4" r="1.4" fill="#6a5812" opacity="1.0"/><circle cx="0.3" cy="4.5" r="1.0" fill="#9c8424" opacity="1.0"/><circle cx="3.9" cy="5.6" r="1.0" fill="#5a4a10" opacity="1.0"/><circle cx="7.5" cy="5.2" r="1.2" fill="#c8ac40" opacity="1.0"/><circle cx="5.3" cy="8.1" r="1.3" fill="#6a5812" opacity="1.0"/><circle cx="7.7" cy="8.9" r="1.3" fill="#b89a30" opacity="1.0"/><circle cx="6.3" cy="2.9" r="1.2" fill="#5a4a10" opacity="1.0"/><circle cx="5.1" cy="6.4" r="0.9" fill="#5a4a10" opacity="1.0"/><circle cx="2.4" cy="1.1" r="1.1" fill="#9c8424" opacity="1.0"/><circle cx="8.9" cy="0.8" r="1.4" fill="#c8ac40" opacity="1.0"/><circle cx="8.1" cy="0.2" r="1.1" fill="#c8ac40" opacity="1.0"/></pattern></defs><rect width="256" height="229" fill="#6a9a4c"/><rect x="175" y="0" width="81" height="229" fill="#7fb060"/><path d="M185 0h71v55c-25 0-40-15-55-35z" fill="#b8d8a4"/><path d="M195 3l30 6-8 22zM232 12l18 5-3 22z" fill="#f0f6ea"/><path d="M200 40c15 10 30 15 56 15v30c-20-5-40-20-56-45z" fill="#5a8f48"/><path d="M205 50c20 10 40 30 51 60V229h-20c0-60-10-120-31-160z" fill="#5d9048"/><path d="M240 60c-10 20-14 50-10 80" stroke="#c8e0b0" stroke-width="6" fill="none"/><path d="M190 140c15 20 25 50 28 89h-35z" fill="#3f6e35"/><path d="M230 150l0 79" stroke="#a6cc88" stroke-width="4"/><path d="M185 200c10-10 30-15 50-10" stroke="#9cc27a" stroke-width="3" fill="none"/><ellipse cx="86" cy="62" rx="104" ry="105" fill="#94801e"/><ellipse cx="60" cy="40" rx="60" ry="55" fill="#98821e"/><ellipse cx="95" cy="85" rx="55" ry="45" fill="#7e6a16"/><ellipse cx="150" cy="45" rx="35" ry="40" fill="#ac942c"/><ellipse cx="86" cy="62" rx="104" ry="105" fill="url(#sfd)" opacity=".85"/><path d="M187 60l30 3 14 10-10 20-35 0z" fill="#eea21c"/><path d="M178 100l25 3 18 20-8 14-30 0z" fill="#f2ac22"/><path d="M150 125l25 5 8 20-8 15-15-10z" fill="#e9a020"/><path d="M5 140l25-5 35 40-55 5z" fill="#e59d2c"/><path d="M0 120l15-10 5 30-20 10z" fill="#e8883a"/><path d="M0 178c30-10 80-14 120-12 25 1 50 6 65 14 8 5 6 12-4 12-15 0-30-2-45 0 20 3 40 8 45 15 3 6-3 10-12 9l-40-4c10 5 15 12 8 15-40 4-90 4-137 2z" fill="#e0b49c"/><path d="M0 205c40-5 80-2 120 4l10 20H0z" fill="#d4a088"/><path d="M20 195c30-5 60 0 90 10" stroke="#b8806a" stroke-width="1.5" fill="none"/><ellipse cx="95" cy="190" rx="38" ry="17" fill="#4a5058"/><circle cx="83" cy="177" r="3.3" fill="#2e3338"/><circle cx="104" cy="206" r="2.4" fill="#2e3338"/><circle cx="92" cy="174" r="2.2" fill="#8a939c"/><circle cx="62" cy="192" r="3.9" fill="#2e3338"/><circle cx="103" cy="186" r="4.0" fill="#2e3338"/><circle cx="102" cy="176" r="2.8" fill="#2e3338"/><circle cx="103" cy="192" r="3.4" fill="#2e3338"/><circle cx="104" cy="195" r="2.7" fill="#2e3338"/><circle cx="102" cy="195" r="3.0" fill="#8a939c"/><circle cx="119" cy="189" r="3.8" fill="#4a5058"/><circle cx="81" cy="201" r="3.4" fill="#6a737c"/><circle cx="64" cy="182" r="3.0" fill="#4a5058"/><circle cx="115" cy="182" r="4.0" fill="#2e3338"/><circle cx="98" cy="177" r="2.7" fill="#8a939c"/><circle cx="91" cy="208" r="2.2" fill="#4a5058"/><circle cx="84" cy="184" r="3.0" fill="#8a939c"/><circle cx="79" cy="197" r="2.1" fill="#4a5058"/><circle cx="123" cy="182" r="2.8" fill="#4a5058"/><circle cx="59" cy="189" r="2.3" fill="#2e3338"/><circle cx="96" cy="179" r="2.6" fill="#6a737c"/><circle cx="89" cy="206" r="3.0" fill="#6a737c"/><circle cx="93" cy="192" r="3.8" fill="#8a939c"/><circle cx="126" cy="182" r="2.8" fill="#4a5058"/><circle cx="112" cy="185" r="2.5" fill="#2e3338"/><circle cx="71" cy="180" r="2.5" fill="#8a939c"/><circle cx="123" cy="178" r="2.6" fill="#6a737c"/><circle cx="91" cy="185" r="3.1" fill="#6a737c"/><circle cx="112" cy="191" r="3.2" fill="#2e3338"/><circle cx="94" cy="204" r="3.9" fill="#8a939c"/><circle cx="89" cy="186" r="3.0" fill="#8a939c"/><circle cx="74" cy="177" r="2.7" fill="#2e3338"/><circle cx="65" cy="193" r="3.1" fill="#4a5058"/><circle cx="106" cy="174" r="2.4" fill="#8a939c"/><circle cx="69" cy="181" r="2.7" fill="#4a5058"/><circle cx="95" cy="175" r="3.0" fill="#8a939c"/><circle cx="95" cy="183" r="2.3" fill="#4a5058"/><circle cx="116" cy="189" r="3.4" fill="#2e3338"/><circle cx="86" cy="197" r="3.8" fill="#4a5058"/><circle cx="113" cy="181" r="2.7" fill="#6a737c"/><circle cx="85" cy="179" r="3.1" fill="#4a5058"/><circle cx="108" cy="194" r="3.6" fill="#6a737c"/><circle cx="121" cy="202" r="3.5" fill="#6a737c"/><circle cx="73" cy="190" r="3.5" fill="#2e3338"/><circle cx="120" cy="189" r="2.4" fill="#4a5058"/><circle cx="93" cy="207" r="4.0" fill="#4a5058"/><rect x="0" y="108" width="9" height="22" fill="#3da0e0"/></g></g></svg>
<svg style="left:369px;top:282px" width="273" height="190" viewBox="0 0 273 190"><defs><filter id="b369" x="-10%" y="-10%" width="120%" height="120%"><feGaussianBlur stdDeviation="1.0"/></filter><clipPath id="c369"><rect width="273" height="190"/></clipPath></defs><g clip-path="url(#c369)"><g filter="url(#b369)"><rect width="273" height="190" fill="#1f361c"/><ellipse cx="123" cy="108" rx="14" ry="7" transform="rotate(91 123 108)" fill="#58904a"/><ellipse cx="44" cy="98" rx="12" ry="9" transform="rotate(17 44 98)" fill="#2a4e25"/><ellipse cx="32" cy="103" rx="14" ry="8" transform="rotate(107 32 103)" fill="#66a056"/><ellipse cx="273" cy="127" rx="12" ry="6" transform="rotate(3 273 127)" fill="#4a7e3e"/><ellipse cx="7" cy="30" rx="9" ry="5" transform="rotate(84 7 30)" fill="#24441f"/><ellipse cx="163" cy="31" rx="9" ry="6" transform="rotate(1 163 31)" fill="#4a7e3e"/><ellipse cx="124" cy="48" rx="15" ry="10" transform="rotate(151 124 48)" fill="#2a4e25"/><ellipse cx="82" cy="38" rx="9" ry="5" transform="rotate(138 82 38)" fill="#66a056"/><ellipse cx="22" cy="51" rx="8" ry="5" transform="rotate(123 22 51)" fill="#58904a"/><ellipse cx="51" cy="181" rx="11" ry="10" transform="rotate(72 51 181)" fill="#4a7e3e"/><ellipse cx="156" cy="32" rx="12" ry="7" transform="rotate(56 156 32)" fill="#3a6a30"/><ellipse cx="272" cy="149" rx="8" ry="6" transform="rotate(18 272 149)" fill="#3a6a30"/><ellipse cx="126" cy="92" rx="12" ry="6" transform="rotate(92 126 92)" fill="#30582b"/><ellipse cx="113" cy="71" rx="10" ry="10" transform="rotate(0 113 71)" fill="#2a4e25"/><ellipse cx="282" cy="-6" rx="8" ry="10" transform="rotate(108 282 -6)" fill="#4a7e3e"/><ellipse cx="2" cy="21" rx="11" ry="5" transform="rotate(110 2 21)" fill="#2a4e25"/><ellipse cx="103" cy="6" rx="9" ry="8" transform="rotate(3 103 6)" fill="#427236"/><ellipse cx="99" cy="85" rx="15" ry="7" transform="rotate(103 99 85)" fill="#66a056"/><ellipse cx="44" cy="22" rx="14" ry="9" transform="rotate(45 44 22)" fill="#58904a"/><ellipse cx="36" cy="122" rx="11" ry="8" transform="rotate(70 36 122)" fill="#24441f"/><ellipse cx="167" cy="79" rx="8" ry="5" transform="rotate(173 167 79)" fill="#58904a"/><ellipse cx="207" cy="72" rx="10" ry="10" transform="rotate(88 207 72)" fill="#30582b"/><ellipse cx="262" cy="195" rx="8" ry="7" transform="rotate(118 262 195)" fill="#4a7e3e"/><ellipse cx="72" cy="183" rx="9" ry="5" transform="rotate(48 72 183)" fill="#24441f"/><ellipse cx="63" cy="-0" rx="9" ry="8" transform="rotate(175 63 -0)" fill="#4a7e3e"/><ellipse cx="96" cy="177" rx="15" ry="8" transform="rotate(124 96 177)" fill="#30582b"/><ellipse cx="163" cy="184" rx="11" ry="7" transform="rotate(56 163 184)" fill="#3a6a30"/><ellipse cx="-4" cy="124" rx="11" ry="9" transform="rotate(57 -4 124)" fill="#4a7e3e"/><ellipse cx="12" cy="105" rx="13" ry="10" transform="rotate(133 12 105)" fill="#30582b"/><ellipse cx="222" cy="182" rx="10" ry="8" transform="rotate(162 222 182)" fill="#66a056"/><ellipse cx="267" cy="-4" rx="11" ry="5" transform="rotate(119 267 -4)" fill="#66a056"/><ellipse cx="161" cy="118" rx="8" ry="8" transform="rotate(179 161 118)" fill="#66a056"/><ellipse cx="203" cy="72" rx="13" ry="8" transform="rotate(79 203 72)" fill="#4a7e3e"/><ellipse cx="142" cy="98" rx="9" ry="5" transform="rotate(4 142 98)" fill="#4a7e3e"/><ellipse cx="136" cy="119" rx="14" ry="6" transform="rotate(2 136 119)" fill="#2a4e25"/><ellipse cx="32" cy="118" rx="11" ry="9" transform="rotate(62 32 118)" fill="#24441f"/><ellipse cx="136" cy="41" rx="10" ry="6" transform="rotate(114 136 41)" fill="#58904a"/><ellipse cx="248" cy="71" rx="12" ry="7" transform="rotate(25 248 71)" fill="#24441f"/><ellipse cx="93" cy="178" rx="7" ry="5" transform="rotate(176 93 178)" fill="#30582b"/><ellipse cx="23" cy="89" rx="14" ry="9" transform="rotate(69 23 89)" fill="#24441f"/><ellipse cx="187" cy="140" rx="14" ry="8" transform="rotate(58 187 140)" fill="#3a6a30"/><ellipse cx="71" cy="118" rx="12" ry="6" transform="rotate(64 71 118)" fill="#3a6a30"/><ellipse cx="178" cy="75" rx="9" ry="9" transform="rotate(48 178 75)" fill="#30582b"/><ellipse cx="223" cy="197" rx="8" ry="6" transform="rotate(96 223 197)" fill="#427236"/><ellipse cx="271" cy="134" rx="9" ry="7" transform="rotate(32 271 134)" fill="#3a6a30"/><ellipse cx="211" cy="102" rx="7" ry="6" transform="rotate(140 211 102)" fill="#30582b"/><ellipse cx="105" cy="156" rx="14" ry="5" transform="rotate(168 105 156)" fill="#66a056"/><ellipse cx="28" cy="85" rx="12" ry="10" transform="rotate(68 28 85)" fill="#427236"/><ellipse cx="126" cy="127" rx="9" ry="9" transform="rotate(147 126 127)" fill="#4a7e3e"/><ellipse cx="52" cy="179" rx="15" ry="10" transform="rotate(97 52 179)" fill="#427236"/><ellipse cx="67" cy="141" rx="7" ry="8" transform="rotate(7 67 141)" fill="#427236"/><ellipse cx="151" cy="151" rx="11" ry="5" transform="rotate(146 151 151)" fill="#4a7e3e"/><ellipse cx="116" cy="-3" rx="11" ry="8" transform="rotate(165 116 -3)" fill="#24441f"/><ellipse cx="34" cy="98" rx="13" ry="9" transform="rotate(124 34 98)" fill="#24441f"/><ellipse cx="160" cy="135" rx="13" ry="7" transform="rotate(101 160 135)" fill="#30582b"/><ellipse cx="143" cy="167" rx="11" ry="7" transform="rotate(69 143 167)" fill="#58904a"/><ellipse cx="79" cy="20" rx="11" ry="6" transform="rotate(90 79 20)" fill="#66a056"/><ellipse cx="147" cy="96" rx="12" ry="5" transform="rotate(174 147 96)" fill="#66a056"/><ellipse cx="149" cy="198" rx="8" ry="5" transform="rotate(30 149 198)" fill="#24441f"/><ellipse cx="111" cy="191" rx="14" ry="6" transform="rotate(85 111 191)" fill="#30582b"/><ellipse cx="90" cy="179" rx="14" ry="10" transform="rotate(94 90 179)" fill="#4a7e3e"/><ellipse cx="46" cy="120" rx="14" ry="6" transform="rotate(140 46 120)" fill="#3a6a30"/><ellipse cx="0" cy="23" rx="7" ry="6" transform="rotate(130 0 23)" fill="#58904a"/><ellipse cx="172" cy="12" rx="13" ry="6" transform="rotate(92 172 12)" fill="#2a4e25"/><ellipse cx="200" cy="137" rx="14" ry="5" transform="rotate(114 200 137)" fill="#30582b"/><ellipse cx="148" cy="171" rx="11" ry="6" transform="rotate(39 148 171)" fill="#30582b"/><ellipse cx="58" cy="146" rx="13" ry="10" transform="rotate(57 58 146)" fill="#427236"/><ellipse cx="251" cy="31" rx="13" ry="6" transform="rotate(17 251 31)" fill="#58904a"/><ellipse cx="29" cy="9" rx="10" ry="7" transform="rotate(169 29 9)" fill="#30582b"/><ellipse cx="49" cy="122" rx="13" ry="5" transform="rotate(103 49 122)" fill="#427236"/><ellipse cx="257" cy="193" rx="8" ry="8" transform="rotate(136 257 193)" fill="#58904a"/><ellipse cx="225" cy="91" rx="7" ry="9" transform="rotate(110 225 91)" fill="#24441f"/><ellipse cx="33" cy="29" rx="9" ry="9" transform="rotate(178 33 29)" fill="#4a7e3e"/><ellipse cx="160" cy="18" rx="12" ry="5" transform="rotate(17 160 18)" fill="#66a056"/><ellipse cx="127" cy="98" rx="10" ry="8" transform="rotate(2 127 98)" fill="#3a6a30"/><ellipse cx="237" cy="28" rx="11" ry="9" transform="rotate(73 237 28)" fill="#58904a"/><ellipse cx="167" cy="10" rx="13" ry="7" transform="rotate(15 167 10)" fill="#66a056"/><ellipse cx="157" cy="30" rx="12" ry="7" transform="rotate(137 157 30)" fill="#2a4e25"/><ellipse cx="257" cy="146" rx="13" ry="9" transform="rotate(73 257 146)" fill="#427236"/><ellipse cx="248" cy="136" rx="13" ry="9" transform="rotate(73 248 136)" fill="#30582b"/><ellipse cx="11" cy="62" rx="11" ry="5" transform="rotate(64 11 62)" fill="#3a6a30"/><ellipse cx="58" cy="188" rx="12" ry="7" transform="rotate(119 58 188)" fill="#30582b"/><ellipse cx="146" cy="72" rx="15" ry="8" transform="rotate(126 146 72)" fill="#66a056"/><ellipse cx="277" cy="-5" rx="12" ry="9" transform="rotate(46 277 -5)" fill="#66a056"/><ellipse cx="138" cy="150" rx="12" ry="5" transform="rotate(47 138 150)" fill="#2a4e25"/><ellipse cx="255" cy="106" rx="11" ry="10" transform="rotate(102 255 106)" fill="#4a7e3e"/><ellipse cx="177" cy="160" rx="8" ry="8" transform="rotate(137 177 160)" fill="#3a6a30"/><ellipse cx="103" cy="187" rx="10" ry="10" transform="rotate(154 103 187)" fill="#3a6a30"/><ellipse cx="116" cy="94" rx="9" ry="7" transform="rotate(56 116 94)" fill="#2a4e25"/><ellipse cx="132" cy="47" rx="14" ry="8" transform="rotate(135 132 47)" fill="#3a6a30"/><ellipse cx="-6" cy="41" rx="7" ry="6" transform="rotate(136 -6 41)" fill="#66a056"/><ellipse cx="5" cy="56" rx="10" ry="8" transform="rotate(130 5 56)" fill="#427236"/><ellipse cx="12" cy="180" rx="10" ry="7" transform="rotate(175 12 180)" fill="#58904a"/><ellipse cx="3" cy="11" rx="13" ry="10" transform="rotate(26 3 11)" fill="#58904a"/><ellipse cx="167" cy="14" rx="12" ry="7" transform="rotate(37 167 14)" fill="#3a6a30"/><ellipse cx="95" cy="22" rx="10" ry="6" transform="rotate(75 95 22)" fill="#2a4e25"/><ellipse cx="177" cy="133" rx="10" ry="9" transform="rotate(147 177 133)" fill="#30582b"/><ellipse cx="269" cy="144" rx="9" ry="6" transform="rotate(161 269 144)" fill="#427236"/><ellipse cx="71" cy="118" rx="13" ry="8" transform="rotate(34 71 118)" fill="#2a4e25"/><ellipse cx="211" cy="30" rx="9" ry="10" transform="rotate(165 211 30)" fill="#3a6a30"/><ellipse cx="174" cy="-8" rx="9" ry="5" transform="rotate(7 174 -8)" fill="#58904a"/><ellipse cx="149" cy="5" rx="8" ry="8" transform="rotate(99 149 5)" fill="#427236"/><ellipse cx="132" cy="64" rx="10" ry="7" transform="rotate(24 132 64)" fill="#4a7e3e"/><ellipse cx="225" cy="84" rx="14" ry="9" transform="rotate(138 225 84)" fill="#24441f"/><ellipse cx="114" cy="44" rx="13" ry="7" transform="rotate(118 114 44)" fill="#427236"/><ellipse cx="75" cy="149" rx="14" ry="6" transform="rotate(118 75 149)" fill="#4a7e3e"/><ellipse cx="125" cy="58" rx="11" ry="7" transform="rotate(102 125 58)" fill="#24441f"/><ellipse cx="78" cy="153" rx="8" ry="6" transform="rotate(119 78 153)" fill="#4a7e3e"/><ellipse cx="194" cy="94" rx="13" ry="7" transform="rotate(159 194 94)" fill="#58904a"/><ellipse cx="95" cy="142" rx="10" ry="6" transform="rotate(128 95 142)" fill="#2a4e25"/><ellipse cx="118" cy="159" rx="9" ry="7" transform="rotate(72 118 159)" fill="#58904a"/><ellipse cx="15" cy="164" rx="7" ry="8" transform="rotate(105 15 164)" fill="#58904a"/><ellipse cx="206" cy="67" rx="10" ry="6" transform="rotate(106 206 67)" fill="#30582b"/><ellipse cx="42" cy="149" rx="14" ry="6" transform="rotate(4 42 149)" fill="#3a6a30"/><ellipse cx="149" cy="109" rx="15" ry="8" transform="rotate(145 149 109)" fill="#4a7e3e"/><ellipse cx="161" cy="54" rx="11" ry="7" transform="rotate(49 161 54)" fill="#4a7e3e"/><ellipse cx="253" cy="8" rx="12" ry="6" transform="rotate(134 253 8)" fill="#66a056"/><ellipse cx="62" cy="36" rx="13" ry="8" transform="rotate(138 62 36)" fill="#66a056"/><ellipse cx="93" cy="160" rx="10" ry="6" transform="rotate(88 93 160)" fill="#4a7e3e"/><ellipse cx="197" cy="182" rx="10" ry="9" transform="rotate(120 197 182)" fill="#3a6a30"/><ellipse cx="226" cy="165" rx="14" ry="10" transform="rotate(115 226 165)" fill="#427236"/><ellipse cx="198" cy="158" rx="10" ry="7" transform="rotate(26 198 158)" fill="#30582b"/><ellipse cx="280" cy="69" rx="8" ry="6" transform="rotate(76 280 69)" fill="#2a4e25"/><ellipse cx="70" cy="176" rx="11" ry="9" transform="rotate(55 70 176)" fill="#30582b"/><ellipse cx="217" cy="28" rx="7" ry="7" transform="rotate(105 217 28)" fill="#3a6a30"/><ellipse cx="82" cy="32" rx="10" ry="8" transform="rotate(108 82 32)" fill="#24441f"/><ellipse cx="164" cy="37" rx="8" ry="6" transform="rotate(31 164 37)" fill="#2a4e25"/><ellipse cx="174" cy="188" rx="11" ry="9" transform="rotate(87 174 188)" fill="#66a056"/><ellipse cx="258" cy="62" rx="11" ry="10" transform="rotate(87 258 62)" fill="#58904a"/><ellipse cx="107" cy="36" rx="8" ry="9" transform="rotate(176 107 36)" fill="#2a4e25"/><ellipse cx="221" cy="2" rx="14" ry="9" transform="rotate(157 221 2)" fill="#427236"/><ellipse cx="122" cy="42" rx="10" ry="9" transform="rotate(75 122 42)" fill="#427236"/><ellipse cx="32" cy="181" rx="13" ry="6" transform="rotate(134 32 181)" fill="#2a4e25"/><ellipse cx="141" cy="1" rx="12" ry="6" transform="rotate(37 141 1)" fill="#30582b"/><ellipse cx="231" cy="7" rx="9" ry="9" transform="rotate(17 231 7)" fill="#24441f"/><ellipse cx="193" cy="7" rx="13" ry="8" transform="rotate(91 193 7)" fill="#3a6a30"/><ellipse cx="221" cy="78" rx="14" ry="5" transform="rotate(149 221 78)" fill="#58904a"/><ellipse cx="1" cy="77" rx="11" ry="10" transform="rotate(174 1 77)" fill="#427236"/><ellipse cx="81" cy="6" rx="9" ry="7" transform="rotate(129 81 6)" fill="#427236"/><ellipse cx="12" cy="20" rx="12" ry="8" transform="rotate(134 12 20)" fill="#4a7e3e"/><ellipse cx="182" cy="-7" rx="10" ry="9" transform="rotate(43 182 -7)" fill="#4a7e3e"/><ellipse cx="124" cy="-8" rx="15" ry="9" transform="rotate(37 124 -8)" fill="#30582b"/><ellipse cx="75" cy="69" rx="11" ry="6" transform="rotate(61 75 69)" fill="#66a056"/><ellipse cx="153" cy="8" rx="9" ry="7" transform="rotate(20 153 8)" fill="#2a4e25"/><ellipse cx="267" cy="108" rx="13" ry="7" transform="rotate(149 267 108)" fill="#4a7e3e"/><ellipse cx="20" cy="121" rx="8" ry="8" transform="rotate(32 20 121)" fill="#58904a"/><ellipse cx="108" cy="166" rx="12" ry="5" transform="rotate(41 108 166)" fill="#30582b"/><ellipse cx="279" cy="81" rx="13" ry="7" transform="rotate(148 279 81)" fill="#30582b"/><ellipse cx="180" cy="151" rx="14" ry="7" transform="rotate(60 180 151)" fill="#66a056"/><ellipse cx="173" cy="143" rx="12" ry="7" transform="rotate(142 173 143)" fill="#58904a"/><ellipse cx="183" cy="118" rx="7" ry="7" transform="rotate(62 183 118)" fill="#24441f"/><ellipse cx="21" cy="69" rx="11" ry="9" transform="rotate(149 21 69)" fill="#30582b"/><ellipse cx="64" cy="103" rx="9" ry="6" transform="rotate(110 64 103)" fill="#30582b"/><ellipse cx="158" cy="32" rx="14" ry="10" transform="rotate(127 158 32)" fill="#58904a"/><ellipse cx="156" cy="-4" rx="12" ry="9" transform="rotate(25 156 -4)" fill="#24441f"/><ellipse cx="159" cy="136" rx="10" ry="10" transform="rotate(65 159 136)" fill="#24441f"/><ellipse cx="249" cy="85" rx="13" ry="6" transform="rotate(102 249 85)" fill="#4a7e3e"/><ellipse cx="154" cy="46" rx="14" ry="10" transform="rotate(147 154 46)" fill="#30582b"/><ellipse cx="26" cy="163" rx="9" ry="9" transform="rotate(43 26 163)" fill="#427236"/><ellipse cx="233" cy="29" rx="11" ry="5" transform="rotate(6 233 29)" fill="#30582b"/><ellipse cx="219" cy="185" rx="15" ry="6" transform="rotate(136 219 185)" fill="#66a056"/><ellipse cx="170" cy="124" rx="13" ry="6" transform="rotate(74 170 124)" fill="#3a6a30"/><ellipse cx="32" cy="71" rx="12" ry="6" transform="rotate(94 32 71)" fill="#2a4e25"/><ellipse cx="62" cy="186" rx="7" ry="9" transform="rotate(130 62 186)" fill="#30582b"/><ellipse cx="108" cy="94" rx="8" ry="7" transform="rotate(161 108 94)" fill="#66a056"/><ellipse cx="210" cy="92" rx="15" ry="9" transform="rotate(154 210 92)" fill="#66a056"/><ellipse cx="232" cy="15" rx="8" ry="10" transform="rotate(59 232 15)" fill="#66a056"/><ellipse cx="113" cy="-5" rx="14" ry="6" transform="rotate(111 113 -5)" fill="#66a056"/><ellipse cx="204" cy="115" rx="13" ry="7" transform="rotate(107 204 115)" fill="#4a7e3e"/><ellipse cx="62" cy="167" rx="9" ry="9" transform="rotate(175 62 167)" fill="#24441f"/><ellipse cx="194" cy="101" rx="9" ry="7" transform="rotate(71 194 101)" fill="#58904a"/><ellipse cx="248" cy="200" rx="13" ry="9" transform="rotate(66 248 200)" fill="#66a056"/><ellipse cx="155" cy="24" rx="12" ry="7" transform="rotate(22 155 24)" fill="#4a7e3e"/><ellipse cx="19" cy="156" rx="8" ry="8" transform="rotate(171 19 156)" fill="#3a6a30"/><ellipse cx="77" cy="143" rx="7" ry="6" transform="rotate(79 77 143)" fill="#24441f"/><ellipse cx="229" cy="73" rx="10" ry="8" transform="rotate(8 229 73)" fill="#3a6a30"/><ellipse cx="123" cy="56" rx="10" ry="6" transform="rotate(140 123 56)" fill="#24441f"/><ellipse cx="247" cy="33" rx="14" ry="8" transform="rotate(11 247 33)" fill="#427236"/><ellipse cx="236" cy="64" rx="11" ry="6" transform="rotate(158 236 64)" fill="#58904a"/><ellipse cx="146" cy="40" rx="15" ry="10" transform="rotate(117 146 40)" fill="#2a4e25"/><ellipse cx="203" cy="56" rx="14" ry="9" transform="rotate(128 203 56)" fill="#30582b"/><ellipse cx="88" cy="191" rx="13" ry="7" transform="rotate(30 88 191)" fill="#2a4e25"/><ellipse cx="25" cy="135" rx="9" ry="9" transform="rotate(90 25 135)" fill="#2a4e25"/><ellipse cx="222" cy="68" rx="12" ry="9" transform="rotate(106 222 68)" fill="#58904a"/><ellipse cx="276" cy="178" rx="8" ry="6" transform="rotate(24 276 178)" fill="#4a7e3e"/><ellipse cx="126" cy="6" rx="14" ry="5" transform="rotate(163 126 6)" fill="#3a6a30"/><ellipse cx="166" cy="50" rx="9" ry="9" transform="rotate(16 166 50)" fill="#2a4e25"/><ellipse cx="280" cy="30" rx="8" ry="9" transform="rotate(5 280 30)" fill="#30582b"/><ellipse cx="279" cy="-3" rx="11" ry="9" transform="rotate(69 279 -3)" fill="#24441f"/><ellipse cx="8" cy="3" rx="13" ry="10" transform="rotate(58 8 3)" fill="#24441f"/><ellipse cx="219" cy="99" rx="11" ry="9" transform="rotate(123 219 99)" fill="#30582b"/><ellipse cx="164" cy="152" rx="8" ry="7" transform="rotate(120 164 152)" fill="#2a4e25"/><ellipse cx="220" cy="156" rx="9" ry="7" transform="rotate(40 220 156)" fill="#24441f"/><ellipse cx="67" cy="33" rx="15" ry="5" transform="rotate(81 67 33)" fill="#30582b"/><ellipse cx="85" cy="118" rx="12" ry="9" transform="rotate(91 85 118)" fill="#2a4e25"/><ellipse cx="241" cy="-4" rx="8" ry="6" transform="rotate(115 241 -4)" fill="#58904a"/><ellipse cx="173" cy="1" rx="10" ry="8" transform="rotate(148 173 1)" fill="#2a4e25"/><ellipse cx="214" cy="95" rx="12" ry="8" transform="rotate(68 214 95)" fill="#58904a"/><ellipse cx="37" cy="135" rx="14" ry="9" transform="rotate(11 37 135)" fill="#66a056"/><ellipse cx="127" cy="137" rx="13" ry="10" transform="rotate(23 127 137)" fill="#30582b"/><ellipse cx="32" cy="86" rx="13" ry="5" transform="rotate(43 32 86)" fill="#30582b"/><ellipse cx="17" cy="107" rx="11" ry="10" transform="rotate(175 17 107)" fill="#58904a"/><ellipse cx="77" cy="15" rx="14" ry="7" transform="rotate(15 77 15)" fill="#58904a"/><ellipse cx="97" cy="61" rx="15" ry="8" transform="rotate(7 97 61)" fill="#66a056"/><ellipse cx="161" cy="199" rx="13" ry="8" transform="rotate(164 161 199)" fill="#30582b"/><ellipse cx="126" cy="73" rx="14" ry="7" transform="rotate(141 126 73)" fill="#58904a"/><ellipse cx="113" cy="42" rx="13" ry="9" transform="rotate(86 113 42)" fill="#66a056"/><ellipse cx="53" cy="88" rx="9" ry="7" transform="rotate(179 53 88)" fill="#30582b"/><ellipse cx="243" cy="33" rx="10" ry="5" transform="rotate(124 243 33)" fill="#427236"/><ellipse cx="268" cy="120" rx="11" ry="9" transform="rotate(92 268 120)" fill="#58904a"/><ellipse cx="69" cy="66" rx="8" ry="10" transform="rotate(65 69 66)" fill="#58904a"/><ellipse cx="202" cy="180" rx="7" ry="7" transform="rotate(69 202 180)" fill="#4a7e3e"/><ellipse cx="240" cy="70" rx="9" ry="9" transform="rotate(120 240 70)" fill="#2a4e25"/><ellipse cx="105" cy="40" rx="7" ry="6" transform="rotate(107 105 40)" fill="#3a6a30"/><ellipse cx="51" cy="76" rx="11" ry="8" transform="rotate(93 51 76)" fill="#2a4e25"/><ellipse cx="82" cy="85" rx="10" ry="9" transform="rotate(150 82 85)" fill="#24441f"/><ellipse cx="109" cy="71" rx="14" ry="6" transform="rotate(53 109 71)" fill="#427236"/><ellipse cx="169" cy="19" rx="14" ry="9" transform="rotate(87 169 19)" fill="#3a6a30"/><ellipse cx="227" cy="195" rx="9" ry="8" transform="rotate(165 227 195)" fill="#58904a"/><ellipse cx="154" cy="64" rx="8" ry="9" transform="rotate(67 154 64)" fill="#2a4e25"/><ellipse cx="16" cy="80" rx="10" ry="5" transform="rotate(69 16 80)" fill="#427236"/><ellipse cx="73" cy="138" rx="9" ry="10" transform="rotate(36 73 138)" fill="#30582b"/><ellipse cx="93" cy="140" rx="11" ry="9" transform="rotate(163 93 140)" fill="#30582b"/><ellipse cx="130" cy="44" rx="14" ry="7" transform="rotate(165 130 44)" fill="#66a056"/><ellipse cx="25" cy="181" rx="14" ry="6" transform="rotate(68 25 181)" fill="#2a4e25"/><ellipse cx="127" cy="58" rx="9" ry="5" transform="rotate(62 127 58)" fill="#427236"/><ellipse cx="156" cy="45" rx="12" ry="6" transform="rotate(84 156 45)" fill="#427236"/><ellipse cx="270" cy="66" rx="12" ry="10" transform="rotate(139 270 66)" fill="#3a6a30"/><ellipse cx="172" cy="76" rx="10" ry="6" transform="rotate(149 172 76)" fill="#24441f"/><ellipse cx="102" cy="181" rx="7" ry="6" transform="rotate(91 102 181)" fill="#2a4e25"/><ellipse cx="135" cy="89" rx="7" ry="8" transform="rotate(49 135 89)" fill="#2a4e25"/><ellipse cx="189" cy="39" rx="7" ry="8" transform="rotate(71 189 39)" fill="#58904a"/><ellipse cx="150" cy="168" rx="13" ry="5" transform="rotate(148 150 168)" fill="#427236"/><ellipse cx="67" cy="12" rx="7" ry="9" transform="rotate(37 67 12)" fill="#66a056"/><ellipse cx="191" cy="192" rx="14" ry="6" transform="rotate(112 191 192)" fill="#24441f"/><ellipse cx="226" cy="52" rx="10" ry="7" transform="rotate(120 226 52)" fill="#24441f"/><ellipse cx="59" cy="42" rx="10" ry="6" transform="rotate(92 59 42)" fill="#30582b"/><ellipse cx="247" cy="198" rx="14" ry="9" transform="rotate(56 247 198)" fill="#24441f"/><ellipse cx="140" cy="133" rx="7" ry="8" transform="rotate(74 140 133)" fill="#24441f"/><ellipse cx="6" cy="43" rx="11" ry="9" transform="rotate(71 6 43)" fill="#2a4e25"/><ellipse cx="98" cy="133" rx="8" ry="9" transform="rotate(37 98 133)" fill="#30582b"/><ellipse cx="156" cy="78" rx="13" ry="8" transform="rotate(150 156 78)" fill="#30582b"/><ellipse cx="27" cy="69" rx="12" ry="6" transform="rotate(33 27 69)" fill="#3a6a30"/><ellipse cx="128" cy="136" rx="13" ry="10" transform="rotate(48 128 136)" fill="#2a4e25"/><ellipse cx="113" cy="123" rx="10" ry="10" transform="rotate(178 113 123)" fill="#3a6a30"/><ellipse cx="36" cy="199" rx="14" ry="6" transform="rotate(64 36 199)" fill="#4a7e3e"/><ellipse cx="109" cy="180" rx="14" ry="9" transform="rotate(31 109 180)" fill="#4a7e3e"/><ellipse cx="81" cy="158" rx="14" ry="6" transform="rotate(71 81 158)" fill="#66a056"/><ellipse cx="214" cy="196" rx="10" ry="8" transform="rotate(98 214 196)" fill="#30582b"/><ellipse cx="120" cy="165" rx="11" ry="9" transform="rotate(158 120 165)" fill="#66a056"/><ellipse cx="25" cy="58" rx="7" ry="8" transform="rotate(26 25 58)" fill="#66a056"/><ellipse cx="70" cy="38" rx="11" ry="7" transform="rotate(47 70 38)" fill="#3a6a30"/><ellipse cx="34" cy="-9" rx="13" ry="8" transform="rotate(1 34 -9)" fill="#427236"/><ellipse cx="132" cy="199" rx="9" ry="9" transform="rotate(87 132 199)" fill="#66a056"/><ellipse cx="93" cy="108" rx="11" ry="6" transform="rotate(111 93 108)" fill="#2a4e25"/><ellipse cx="71" cy="187" rx="14" ry="10" transform="rotate(80 71 187)" fill="#3a6a30"/><ellipse cx="42" cy="-4" rx="8" ry="6" transform="rotate(13 42 -4)" fill="#427236"/><ellipse cx="-3" cy="107" rx="8" ry="7" transform="rotate(160 -3 107)" fill="#4a7e3e"/><ellipse cx="271" cy="-8" rx="11" ry="9" transform="rotate(143 271 -8)" fill="#24441f"/><ellipse cx="107" cy="159" rx="14" ry="9" transform="rotate(177 107 159)" fill="#4a7e3e"/><ellipse cx="20" cy="185" rx="30" ry="10" fill="#142814" opacity=".7"/><ellipse cx="128" cy="76" rx="32" ry="19" fill="#c4b0e0" opacity=".75"/><polygon points="144.3,100.5 136.9,97.2 128.9,98.8 129.8,90.7 125.8,83.6 133.8,81.9 139.3,76.0 143.4,83.0 150.7,86.4 145.3,92.4" fill="#c4acde"/><circle cx="138" cy="89" r="3.7" fill="#f4b800"/><polygon points="160.2,63.9 154.6,66.9 151.8,72.5 147.3,68.1 141.1,67.2 143.8,61.6 142.8,55.3 149.0,56.2 154.6,53.3 155.7,59.5" fill="#b8a0d8"/><circle cx="150" cy="62" r="2.9" fill="#f4b800"/><polygon points="137.7,62.5 131.6,66.9 129.1,74.0 123.1,69.5 115.6,69.3 118.0,62.2 115.8,55.0 123.3,55.1 129.5,50.8 131.7,58.0" fill="#b8a0d8"/><circle cx="126" cy="62" r="3.4" fill="#f4b800"/><polygon points="118.7,66.8 111.1,70.3 106.9,77.7 101.2,71.5 92.9,69.8 97.0,62.4 96.1,54.0 104.4,55.7 112.1,52.2 113.0,60.6" fill="#a88ccc"/><circle cx="105" cy="64" r="3.8" fill="#f4b800"/><polygon points="164.1,58.6 157.2,62.0 153.6,68.8 148.2,63.3 140.6,62.1 144.1,55.2 143.0,47.6 150.6,48.8 157.5,45.4 158.7,53.0" fill="#b8a0d8"/><circle cx="152" cy="56" r="3.5" fill="#f4b800"/><polygon points="110.0,65.0 103.1,64.7 97.3,68.5 95.4,61.8 90.0,57.4 95.8,53.6 98.3,47.1 103.7,51.5 110.7,51.8 108.2,58.3" fill="#b8a0d8"/><circle cx="101" cy="58" r="3.2" fill="#f4b800"/><polygon points="147.0,73.0 139.9,68.3 131.4,68.6 133.7,60.4 130.8,52.4 139.3,52.1 145.9,46.8 148.9,54.8 156.0,59.5 149.3,64.8" fill="#b8a0d8"/><circle cx="142" cy="60" r="3.9" fill="#f4b800"/><polygon points="163.9,75.7 157.9,72.0 150.8,72.6 152.4,65.7 149.7,59.2 156.8,58.6 162.1,54.0 164.9,60.5 170.9,64.2 165.6,68.8" fill="#b8a0d8"/><circle cx="159" cy="65" r="3.2" fill="#f4b800"/><polygon points="118.8,76.0 110.7,75.0 103.5,79.0 101.9,70.9 95.9,65.3 103.1,61.3 106.6,53.9 112.6,59.5 120.7,60.5 117.3,67.9" fill="#c4acde"/><circle cx="109" cy="67" r="3.7" fill="#f4b800"/><polygon points="154.0,59.1 147.0,59.2 141.3,63.5 139.0,56.9 133.2,52.8 138.8,48.5 140.8,41.8 146.6,45.8 153.7,45.6 151.7,52.4" fill="#d2c0ea"/><circle cx="145" cy="53" r="3.2" fill="#f4b800"/><polygon points="125.4,79.0 117.9,81.5 113.2,87.8 108.5,81.4 101.0,78.9 105.7,72.5 105.8,64.6 113.3,67.0 120.9,64.7 120.8,72.6" fill="#c4acde"/><circle cx="113" cy="75" r="3.6" fill="#f4b800"/><polygon points="127.5,76.2 120.1,77.5 114.8,82.9 111.3,76.2 104.6,72.9 109.8,67.5 111.0,60.0 117.7,63.4 125.1,62.1 124.1,69.6" fill="#a88ccc"/><circle cx="117" cy="71" r="3.4" fill="#f4b800"/><polygon points="141.5,56.7 135.3,55.7 129.7,58.6 128.7,52.4 124.2,47.9 129.8,45.0 132.7,39.4 137.1,43.9 143.4,44.9 140.5,50.5" fill="#b8a0d8"/><circle cx="134" cy="49" r="2.9" fill="#f4b800"/><polygon points="112.8,103.9 106.4,100.5 99.1,101.4 100.4,94.2 97.3,87.6 104.5,86.6 109.8,81.6 113.0,88.2 119.4,91.7 114.2,96.7" fill="#d2c0ea"/><circle cx="108" cy="93" r="3.3" fill="#f4b800"/><ellipse cx="228" cy="90" rx="13" ry="22" fill="#bcaad8" opacity=".7"/><polygon points="248.5,109.8 243.4,113.2 241.2,118.9 236.4,115.1 230.3,114.8 232.4,109.0 230.8,103.1 236.9,103.4 242.1,100.0 243.7,105.9" fill="#d2c0ea"/><circle cx="239" cy="109" r="2.8" fill="#f4b800"/><polygon points="226.2,99.8 219.0,101.5 214.2,107.0 210.4,100.7 203.7,97.9 208.5,92.3 209.1,85.0 215.9,87.9 223.0,86.2 222.4,93.5" fill="#d2c0ea"/><circle cx="215" cy="95" r="3.3" fill="#f4b800"/><polygon points="214.4,97.3 209.7,94.7 204.3,95.3 205.4,89.9 203.1,85.0 208.5,84.4 212.6,80.7 214.8,85.7 219.5,88.3 215.5,92.0" fill="#a88ccc"/><circle cx="211" cy="89" r="2.5" fill="#f4b800"/><polygon points="236.3,73.2 230.1,72.0 224.3,74.6 223.6,68.3 219.4,63.6 225.1,60.9 228.3,55.5 232.6,60.1 238.8,61.4 235.6,66.9" fill="#d2c0ea"/><circle cx="229" cy="66" r="2.9" fill="#f4b800"/><polygon points="240.7,69.5 234.8,70.6 230.6,74.9 227.8,69.6 222.4,67.0 226.6,62.6 227.4,56.7 232.8,59.3 238.7,58.3 237.9,64.3" fill="#c4acde"/><circle cx="232" cy="65" r="2.7" fill="#f4b800"/><polygon points="231.6,83.4 225.2,81.7 219.0,84.1 218.5,77.5 214.3,72.3 220.5,69.9 224.1,64.3 228.4,69.4 234.8,71.1 231.2,76.7" fill="#b8a0d8"/><circle cx="225" cy="75" r="3.0" fill="#f4b800"/><polygon points="242.8,72.9 238.2,70.9 233.2,72.0 233.7,66.9 231.2,62.6 236.1,61.5 239.5,57.7 242.0,62.1 246.7,64.1 243.3,67.9" fill="#b8a0d8"/><circle cx="239" cy="66" r="2.3" fill="#f4b800"/><polygon points="251.9,96.0 244.9,95.9 239.2,99.9 237.1,93.2 231.5,89.0 237.2,85.0 239.6,78.4 245.1,82.6 252.1,82.7 249.9,89.3" fill="#b8a0d8"/><circle cx="243" cy="89" r="3.2" fill="#f4b800"/><polygon points="28.4,33.5 23.6,31.6 18.7,32.8 19.1,27.7 16.4,23.4 21.4,22.1 24.7,18.3 27.4,22.6 32.1,24.6 28.8,28.5" fill="#b8a0d8"/><circle cx="24" cy="27" r="2.3" fill="#f4b800"/><polygon points="43.0,24.2 38.0,24.5 34.2,27.6 32.3,23.0 28.1,20.3 32.0,17.1 33.3,12.3 37.5,15.0 42.5,14.7 41.2,19.5" fill="#a88ccc"/><circle cx="36" cy="20" r="2.3" fill="#f4b800"/><polygon points="44.4,21.2 38.0,21.4 32.8,25.3 30.6,19.2 25.3,15.4 30.5,11.5 32.4,5.3 37.7,9.0 44.2,8.9 42.3,15.1" fill="#c4acde"/><circle cx="36" cy="15" r="2.9" fill="#f4b800"/><polygon points="48.3,35.1 43.2,32.2 37.3,33.0 38.4,27.2 35.9,21.8 41.8,21.1 46.1,17.0 48.6,22.4 53.8,25.3 49.5,29.3" fill="#a88ccc"/><circle cx="44" cy="26" r="2.7" fill="#f4b800"/><polygon points="132.4,5.5 129.8,6.0 128.0,8.0 126.7,5.7 124.3,4.6 126.1,2.6 126.4,0.0 128.8,1.1 131.4,0.6 131.1,3.2" fill="#c4acde"/><circle cx="129" cy="4" r="1.2" fill="#f4b800"/><polygon points="131.4,9.7 128.6,8.9 125.9,9.9 125.8,7.0 124.1,4.7 126.8,3.8 128.4,1.4 130.2,3.7 132.9,4.5 131.3,6.9" fill="#c4acde"/><circle cx="129" cy="6" r="1.3" fill="#f4b800"/><polygon points="152.3,4.8 150.0,6.1 148.8,8.5 146.9,6.6 144.2,6.3 145.4,3.9 144.9,1.2 147.6,1.6 150.0,0.3 150.4,3.0" fill="#c4acde"/><circle cx="148" cy="4" r="1.2" fill="#f4b800"/><path d="M195 172h75" stroke="#8a9a8a" stroke-width="3" opacity=".5"/></g></g></svg>
<svg style="left:781px;top:286px" width="281" height="185" viewBox="0 0 281 185"><defs><filter id="b781" x="-10%" y="-10%" width="120%" height="120%"><feGaussianBlur stdDeviation="1.4"/></filter><clipPath id="c781"><rect width="281" height="185"/></clipPath></defs><g clip-path="url(#c781)"><g filter="url(#b781)"><rect width="281" height="185" fill="#4f8644"/><path d="M0 45c40 25 80 75 110 140H0z" fill="#2c5e2c"/><path d="M0 95c30 20 55 55 70 90H0z" fill="#1f4a22"/><path d="M60 150c20 10 50 20 70 35H60z" fill="#3a8038"/><ellipse cx="262" cy="165" rx="32" ry="34" fill="#3a4d34"/><path d="M120 0h161v95C230 60 175 30 120 0z" fill="#8ebe76"/><path d="M60 0c40 30 90 70 130 120l30-10C180 70 120 30 90 0z" fill="#78ae62"/><path d="M-7 84l52 77" stroke="#c0dca0" stroke-width="1.6" opacity="0.7"/><path d="M92 133l64 73" stroke="#a8d08a" stroke-width="0.7" opacity="0.7"/><path d="M238 37l78 88" stroke="#c0dca0" stroke-width="1.3" opacity="0.7"/><path d="M80 139l45 74" stroke="#d0e8b0" stroke-width="0.7" opacity="0.7"/><path d="M45 50l91 101" stroke="#8cbc70" stroke-width="0.7" opacity="0.7"/><path d="M177 -24l27 44" stroke="#c0dca0" stroke-width="1.2" opacity="0.7"/><path d="M50 47l35 40" stroke="#c0dca0" stroke-width="0.8" opacity="0.7"/><path d="M3 81l57 93" stroke="#7aaa62" stroke-width="1.6" opacity="0.7"/><path d="M-37 61l49 70" stroke="#8cbc70" stroke-width="1.5" opacity="0.7"/><path d="M224 34l56 71" stroke="#d0e8b0" stroke-width="1.0" opacity="0.7"/><path d="M95 8l33 55" stroke="#d0e8b0" stroke-width="0.7" opacity="0.7"/><path d="M-38 68l59 82" stroke="#8cbc70" stroke-width="1.2" opacity="0.7"/><path d="M139 -7l54 61" stroke="#8cbc70" stroke-width="1.0" opacity="0.7"/><path d="M131 15l38 41" stroke="#c0dca0" stroke-width="1.4" opacity="0.7"/><path d="M60 83l72 110" stroke="#c0dca0" stroke-width="1.1" opacity="0.7"/><path d="M257 133l73 107" stroke="#d0e8b0" stroke-width="1.2" opacity="0.7"/><path d="M153 129l65 77" stroke="#d0e8b0" stroke-width="1.4" opacity="0.7"/><path d="M188 47l28 47" stroke="#8cbc70" stroke-width="1.3" opacity="0.7"/><path d="M-49 5l78 102" stroke="#c0dca0" stroke-width="1.6" opacity="0.7"/><path d="M179 46l88 104" stroke="#7aaa62" stroke-width="1.5" opacity="0.7"/><path d="M93 132l41 72" stroke="#c0dca0" stroke-width="1.5" opacity="0.7"/><path d="M132 37l72 104" stroke="#8cbc70" stroke-width="0.8" opacity="0.7"/><path d="M128 -15l45 71" stroke="#c0dca0" stroke-width="1.6" opacity="0.7"/><path d="M-52 67l70 105" stroke="#7aaa62" stroke-width="1.1" opacity="0.7"/><path d="M159 95l32 54" stroke="#c0dca0" stroke-width="0.8" opacity="0.7"/><path d="M-30 -35l38 50" stroke="#a8d08a" stroke-width="1.3" opacity="0.7"/><path d="M-20 57l59 74" stroke="#c0dca0" stroke-width="1.3" opacity="0.7"/><path d="M-2 114l76 89" stroke="#a8d08a" stroke-width="1.2" opacity="0.7"/><path d="M102 94l91 98" stroke="#d0e8b0" stroke-width="1.1" opacity="0.7"/><path d="M-40 98l75 86" stroke="#8cbc70" stroke-width="1.6" opacity="0.7"/><path d="M134 94l41 49" stroke="#8cbc70" stroke-width="1.4" opacity="0.7"/><path d="M197 48l57 81" stroke="#a8d08a" stroke-width="1.2" opacity="0.7"/><path d="M175 134l71 88" stroke="#7aaa62" stroke-width="1.4" opacity="0.7"/><path d="M1 71l43 53" stroke="#a8d08a" stroke-width="1.0" opacity="0.7"/><path d="M258 -21l38 42" stroke="#d0e8b0" stroke-width="1.2" opacity="0.7"/><path d="M243 82l50 78" stroke="#7aaa62" stroke-width="1.1" opacity="0.7"/><path d="M68 1l61 65" stroke="#c0dca0" stroke-width="0.9" opacity="0.7"/><path d="M129 33l74 97" stroke="#d0e8b0" stroke-width="1.0" opacity="0.7"/><path d="M96 74l28 51" stroke="#d0e8b0" stroke-width="0.9" opacity="0.7"/><path d="M59 69l59 69" stroke="#7aaa62" stroke-width="1.3" opacity="0.7"/><path d="M215 86l39 60" stroke="#d0e8b0" stroke-width="1.0" opacity="0.7"/><path d="M137 108l67 122" stroke="#a8d08a" stroke-width="0.8" opacity="0.7"/><path d="M5 118l31 49" stroke="#c0dca0" stroke-width="0.8" opacity="0.7"/><path d="M37 130l49 78" stroke="#a8d08a" stroke-width="1.6" opacity="0.7"/><path d="M-7 38l46 70" stroke="#7aaa62" stroke-width="1.3" opacity="0.7"/><path d="M23 131l46 57" stroke="#c0dca0" stroke-width="1.5" opacity="0.7"/><path d="M102 3l62 96" stroke="#c0dca0" stroke-width="1.5" opacity="0.7"/><path d="M89 39l42 62" stroke="#c0dca0" stroke-width="1.3" opacity="0.7"/><path d="M139 -22l33 61" stroke="#8cbc70" stroke-width="1.4" opacity="0.7"/><path d="M239 87l66 69" stroke="#a8d08a" stroke-width="1.1" opacity="0.7"/><path d="M81 41l64 119" stroke="#c0dca0" stroke-width="0.8" opacity="0.7"/><path d="M39 42l41 72" stroke="#c0dca0" stroke-width="1.2" opacity="0.7"/><path d="M232 38l40 67" stroke="#d0e8b0" stroke-width="1.1" opacity="0.7"/><path d="M117 1l65 108" stroke="#d0e8b0" stroke-width="1.5" opacity="0.7"/><path d="M-54 65l89 96" stroke="#c0dca0" stroke-width="0.8" opacity="0.7"/><path d="M99 55l55 77" stroke="#8cbc70" stroke-width="0.8" opacity="0.7"/><path d="M-11 12l28 42" stroke="#a8d08a" stroke-width="1.3" opacity="0.7"/><path d="M-0 -22l42 71" stroke="#8cbc70" stroke-width="0.8" opacity="0.7"/><path d="M-48 49l59 91" stroke="#c0dca0" stroke-width="0.7" opacity="0.7"/><path d="M14 25l44 52" stroke="#c0dca0" stroke-width="1.4" opacity="0.7"/><path d="M108 -26l35 59" stroke="#a8d08a" stroke-width="1.4" opacity="0.7"/><path d="M134 74l29 43" stroke="#8cbc70" stroke-width="1.1" opacity="0.7"/><path d="M-8 113l68 113" stroke="#a8d08a" stroke-width="0.9" opacity="0.7"/><path d="M189 122l76 107" stroke="#8cbc70" stroke-width="1.1" opacity="0.7"/><path d="M241 129l27 44" stroke="#8cbc70" stroke-width="0.9" opacity="0.7"/><path d="M25 -35l72 93" stroke="#c0dca0" stroke-width="1.5" opacity="0.7"/><path d="M112 119l91 106" stroke="#7aaa62" stroke-width="1.0" opacity="0.7"/><path d="M84 98l63 116" stroke="#c0dca0" stroke-width="1.1" opacity="0.7"/><path d="M-3 57l42 71" stroke="#c0dca0" stroke-width="1.6" opacity="0.7"/><path d="M232 132l73 118" stroke="#c0dca0" stroke-width="1.4" opacity="0.7"/><path d="M8 56l86 110" stroke="#8cbc70" stroke-width="0.8" opacity="0.7"/><path d="M17 36l66 99" stroke="#c0dca0" stroke-width="1.3" opacity="0.7"/><path d="M21 37l58 74" stroke="#8cbc70" stroke-width="0.7" opacity="0.7"/><path d="M215 -3l42 69" stroke="#d0e8b0" stroke-width="1.4" opacity="0.7"/><path d="M176 92l40 74" stroke="#d0e8b0" stroke-width="0.7" opacity="0.7"/><path d="M189 116l79 97" stroke="#d0e8b0" stroke-width="0.9" opacity="0.7"/><path d="M13 92l48 80" stroke="#a8d08a" stroke-width="0.7" opacity="0.7"/><path d="M233 -16l51 64" stroke="#7aaa62" stroke-width="1.3" opacity="0.7"/><path d="M132 85l59 102" stroke="#8cbc70" stroke-width="1.3" opacity="0.7"/><path d="M175 43l87 97" stroke="#7aaa62" stroke-width="1.5" opacity="0.7"/><path d="M225 -26l67 83" stroke="#c0dca0" stroke-width="1.4" opacity="0.7"/><path d="M239 -21l61 90" stroke="#7aaa62" stroke-width="0.9" opacity="0.7"/><path d="M99 88l73 85" stroke="#8cbc70" stroke-width="1.5" opacity="0.7"/><path d="M107 -38l38 65" stroke="#8cbc70" stroke-width="1.3" opacity="0.7"/><path d="M72 -18l54 94" stroke="#a8d08a" stroke-width="1.6" opacity="0.7"/><path d="M14 87l58 79" stroke="#7aaa62" stroke-width="1.0" opacity="0.7"/><path d="M144 74l50 64" stroke="#d0e8b0" stroke-width="1.3" opacity="0.7"/><path d="M86 52l78 92" stroke="#a8d08a" stroke-width="1.5" opacity="0.7"/><path d="M227 112l69 112" stroke="#a8d08a" stroke-width="1.0" opacity="0.7"/><path d="M-11 -38l72 86" stroke="#8cbc70" stroke-width="0.9" opacity="0.7"/><path d="M-45 -6l70 79" stroke="#c0dca0" stroke-width="0.9" opacity="0.7"/><path d="M-24 56l58 64" stroke="#a8d08a" stroke-width="0.9" opacity="0.7"/><path d="M164 57l49 53" stroke="#7aaa62" stroke-width="1.2" opacity="0.7"/><path d="M18 38l70 114" stroke="#a8d08a" stroke-width="1.1" opacity="0.7"/><path d="M247 105l71 109" stroke="#d0e8b0" stroke-width="0.7" opacity="0.7"/><path d="M99 120l54 87" stroke="#c0dca0" stroke-width="0.7" opacity="0.7"/><path d="M145 100l59 71" stroke="#8cbc70" stroke-width="1.2" opacity="0.7"/><path d="M-8 21l60 91" stroke="#d0e8b0" stroke-width="1.5" opacity="0.7"/><path d="M34 -19l53 77" stroke="#c0dca0" stroke-width="1.4" opacity="0.7"/><path d="M-12 16l74 81" stroke="#d0e8b0" stroke-width="1.5" opacity="0.7"/><path d="M-44 94l49 83" stroke="#a8d08a" stroke-width="1.3" opacity="0.7"/><path d="M92 60l42 53" stroke="#d0e8b0" stroke-width="1.3" opacity="0.7"/><path d="M135 38l27 44" stroke="#7aaa62" stroke-width="0.9" opacity="0.7"/><path d="M-50 -1l40 69" stroke="#c0dca0" stroke-width="1.5" opacity="0.7"/><path d="M248 5l78 99" stroke="#c0dca0" stroke-width="1.0" opacity="0.7"/><path d="M130 110l51 78" stroke="#8cbc70" stroke-width="1.0" opacity="0.7"/><path d="M229 77l75 91" stroke="#a8d08a" stroke-width="1.5" opacity="0.7"/><path d="M19 139l53 66" stroke="#c0dca0" stroke-width="1.3" opacity="0.7"/><path d="M-51 64l34 60" stroke="#7aaa62" stroke-width="1.4" opacity="0.7"/><path d="M14 -18l48 50" stroke="#d0e8b0" stroke-width="1.6" opacity="0.7"/><path d="M100 86l80 111" stroke="#d0e8b0" stroke-width="1.0" opacity="0.7"/><path d="M237 99l32 44" stroke="#a8d08a" stroke-width="1.4" opacity="0.7"/><path d="M-7 -20l34 46" stroke="#8cbc70" stroke-width="0.8" opacity="0.7"/><path d="M103 13l68 91" stroke="#d0e8b0" stroke-width="1.4" opacity="0.7"/><path d="M244 60l32 39" stroke="#d0e8b0" stroke-width="1.5" opacity="0.7"/><path d="M253 6l44 65" stroke="#8cbc70" stroke-width="1.5" opacity="0.7"/><path d="M-17 22l40 71" stroke="#c0dca0" stroke-width="1.4" opacity="0.7"/><path d="M29 101l56 58" stroke="#c0dca0" stroke-width="1.4" opacity="0.7"/><path d="M162 51l36 38" stroke="#8cbc70" stroke-width="1.2" opacity="0.7"/><path d="M117 113l54 91" stroke="#c0dca0" stroke-width="1.2" opacity="0.7"/><path d="M4 -9l47 74" stroke="#8cbc70" stroke-width="0.9" opacity="0.7"/><path d="M67 102l59 101" stroke="#a8d08a" stroke-width="0.9" opacity="0.7"/><path d="M43 15l78 103" stroke="#a8d08a" stroke-width="1.3" opacity="0.7"/><path d="M228 44l72 113" stroke="#c0dca0" stroke-width="0.9" opacity="0.7"/><path d="M137 137l66 114" stroke="#a8d08a" stroke-width="1.5" opacity="0.7"/><path d="M118 123l60 108" stroke="#a8d08a" stroke-width="1.3" opacity="0.7"/><path d="M-57 98l46 85" stroke="#a8d08a" stroke-width="1.3" opacity="0.7"/><path d="M-40 131l43 79" stroke="#7aaa62" stroke-width="1.1" opacity="0.7"/><path d="M255 115l49 80" stroke="#8cbc70" stroke-width="0.9" opacity="0.7"/><path d="M35 97l36 43" stroke="#c0dca0" stroke-width="0.8" opacity="0.7"/><path d="M72 16l52 63" stroke="#7aaa62" stroke-width="1.4" opacity="0.7"/><path d="M58 52l53 94" stroke="#c0dca0" stroke-width="1.1" opacity="0.7"/><path d="M91 53l64 76" stroke="#8cbc70" stroke-width="1.4" opacity="0.7"/><path d="M159 17l66 97" stroke="#7aaa62" stroke-width="1.1" opacity="0.7"/><path d="M13 122l34 59" stroke="#c0dca0" stroke-width="1.6" opacity="0.7"/><path d="M109 123l78 85" stroke="#8cbc70" stroke-width="1.4" opacity="0.7"/><path d="M94 67l61 73" stroke="#a8d08a" stroke-width="1.5" opacity="0.7"/><path d="M146 73l51 57" stroke="#a8d08a" stroke-width="0.9" opacity="0.7"/><path d="M112 85l58 81" stroke="#c0dca0" stroke-width="1.3" opacity="0.7"/><path d="M164 139l43 74" stroke="#7aaa62" stroke-width="1.3" opacity="0.7"/><path d="M78 -37l53 65" stroke="#c0dca0" stroke-width="1.5" opacity="0.7"/><path d="M150 7l59 93" stroke="#d0e8b0" stroke-width="1.1" opacity="0.7"/><path d="M128 121l56 60" stroke="#8cbc70" stroke-width="1.6" opacity="0.7"/><path d="M109 52l41 50" stroke="#c0dca0" stroke-width="1.5" opacity="0.7"/><path d="M-27 78l32 57" stroke="#7aaa62" stroke-width="0.9" opacity="0.7"/><path d="M130 90l32 48" stroke="#a8d08a" stroke-width="1.5" opacity="0.7"/><path d="M94 115l37 54" stroke="#d0e8b0" stroke-width="1.0" opacity="0.7"/><path d="M37 101l30 56" stroke="#7aaa62" stroke-width="1.0" opacity="0.7"/><path d="M140 -10l44 72" stroke="#a8d08a" stroke-width="1.3" opacity="0.7"/><path d="M5 53l40 45" stroke="#8cbc70" stroke-width="0.7" opacity="0.7"/><path d="M249 104l54 67" stroke="#d0e8b0" stroke-width="0.9" opacity="0.7"/><path d="M200 125l81 87" stroke="#7aaa62" stroke-width="1.2" opacity="0.7"/><path d="M-13 53l85 93" stroke="#d0e8b0" stroke-width="1.1" opacity="0.7"/><path d="M150 107l68 110" stroke="#a8d08a" stroke-width="1.1" opacity="0.7"/><path d="M146 -30l59 97" stroke="#8cbc70" stroke-width="0.9" opacity="0.7"/><path d="M24 63l41 58" stroke="#d0e8b0" stroke-width="1.0" opacity="0.7"/><path d="M50 130l33 58" stroke="#8cbc70" stroke-width="1.5" opacity="0.7"/><path d="M31 108l29 44" stroke="#a8d08a" stroke-width="1.6" opacity="0.7"/><path d="M-38 -19l64 88" stroke="#8cbc70" stroke-width="1.4" opacity="0.7"/><path d="M251 19l48 56" stroke="#c0dca0" stroke-width="0.9" opacity="0.7"/><path d="M180 -26l53 68" stroke="#7aaa62" stroke-width="1.6" opacity="0.7"/><path d="M104 48l58 102" stroke="#c0dca0" stroke-width="0.8" opacity="0.7"/><path d="M138 130l72 113" stroke="#c0dca0" stroke-width="1.1" opacity="0.7"/><path d="M13 10l42 49" stroke="#c0dca0" stroke-width="0.7" opacity="0.7"/><path d="M132 68l54 85" stroke="#d0e8b0" stroke-width="1.0" opacity="0.7"/><path d="M-30 65l89 107" stroke="#a8d08a" stroke-width="1.3" opacity="0.7"/><path d="M207 4l50 68" stroke="#8cbc70" stroke-width="0.8" opacity="0.7"/><path d="M254 94l33 40" stroke="#c0dca0" stroke-width="0.7" opacity="0.7"/><path d="M95 131l83 107" stroke="#d0e8b0" stroke-width="1.3" opacity="0.7"/><path d="M231 65l68 82" stroke="#a8d08a" stroke-width="0.9" opacity="0.7"/><path d="M42 -7l94 99" stroke="#c0dca0" stroke-width="1.2" opacity="0.7"/><path d="M205 52l70 79" stroke="#c0dca0" stroke-width="1.4" opacity="0.7"/><path d="M253 7l65 101" stroke="#7aaa62" stroke-width="1.0" opacity="0.7"/><path d="M92 101l60 72" stroke="#8cbc70" stroke-width="0.9" opacity="0.7"/><path d="M153 -1l62 70" stroke="#d0e8b0" stroke-width="1.6" opacity="0.7"/><path d="M-7 55l43 59" stroke="#a8d08a" stroke-width="0.8" opacity="0.7"/><path d="M23 -33l61 91" stroke="#c0dca0" stroke-width="1.1" opacity="0.7"/><path d="M144 110l54 63" stroke="#d0e8b0" stroke-width="1.0" opacity="0.7"/><path d="M217 -17l55 69" stroke="#8cbc70" stroke-width="1.0" opacity="0.7"/><path d="M63 -3l34 57" stroke="#8cbc70" stroke-width="1.5" opacity="0.7"/><path d="M-49 101l47 56" stroke="#7aaa62" stroke-width="1.2" opacity="0.7"/><path d="M70 76l40 50" stroke="#a8d08a" stroke-width="1.4" opacity="0.7"/><path d="M-45 -33l56 76" stroke="#d0e8b0" stroke-width="1.1" opacity="0.7"/><path d="M108 110l52 72" stroke="#c0dca0" stroke-width="0.8" opacity="0.7"/><path d="M219 53l64 68" stroke="#7aaa62" stroke-width="1.6" opacity="0.7"/><path d="M76 8l37 66" stroke="#a8d08a" stroke-width="0.9" opacity="0.7"/><path d="M38 108l52 60" stroke="#d0e8b0" stroke-width="1.4" opacity="0.7"/><path d="M50 -8l48 75" stroke="#d0e8b0" stroke-width="0.9" opacity="0.7"/><path d="M149 -6l41 59" stroke="#7aaa62" stroke-width="1.1" opacity="0.7"/><path d="M135 28l88 95" stroke="#d0e8b0" stroke-width="1.4" opacity="0.7"/><path d="M215 59l44 82" stroke="#8cbc70" stroke-width="0.8" opacity="0.7"/><path d="M61 63l50 83" stroke="#8cbc70" stroke-width="1.0" opacity="0.7"/><path d="M157 103l29 43" stroke="#a8d08a" stroke-width="1.0" opacity="0.7"/><path d="M83 103l57 96" stroke="#a8d08a" stroke-width="0.7" opacity="0.7"/><path d="M16 81l83 110" stroke="#d0e8b0" stroke-width="0.8" opacity="0.7"/><path d="M5 40l69 99" stroke="#d0e8b0" stroke-width="1.1" opacity="0.7"/><path d="M-49 47l62 82" stroke="#c0dca0" stroke-width="1.4" opacity="0.7"/><path d="M212 139l62 89" stroke="#8cbc70" stroke-width="0.8" opacity="0.7"/><path d="M3 100l58 103" stroke="#7aaa62" stroke-width="0.8" opacity="0.7"/><path d="M-3 24l70 91" stroke="#8cbc70" stroke-width="1.4" opacity="0.7"/><path d="M114 95l28 53" stroke="#3a8a38" stroke-width="3.3" opacity="0.7"/><path d="M84 172l6 22" stroke="#4f9a48" stroke-width="3.9" opacity="0.7"/><path d="M25 143l11 46" stroke="#4f9a48" stroke-width="3.3" opacity="0.7"/><path d="M-13 173l10 31" stroke="#3a8a38" stroke-width="2.0" opacity="0.7"/><path d="M-4 136l17 57" stroke="#2a6a28" stroke-width="1.7" opacity="0.7"/><path d="M26 115l15 32" stroke="#2a6a28" stroke-width="2.8" opacity="0.7"/><path d="M19 108l11 36" stroke="#4f9a48" stroke-width="2.8" opacity="0.7"/><path d="M-15 177l14 38" stroke="#4f9a48" stroke-width="2.5" opacity="0.7"/><path d="M109 99l12 34" stroke="#3a8a38" stroke-width="2.2" opacity="0.7"/><path d="M63 137l17 44" stroke="#2a6a28" stroke-width="2.6" opacity="0.7"/><path d="M-7 127l23 46" stroke="#3a8a38" stroke-width="3.8" opacity="0.7"/><path d="M113 134l9 22" stroke="#3a8a38" stroke-width="1.9" opacity="0.7"/><path d="M57 117l13 32" stroke="#3a8a38" stroke-width="2.6" opacity="0.7"/><path d="M-11 94l13 48" stroke="#2a6a28" stroke-width="3.2" opacity="0.7"/><path d="M-13 123l14 55" stroke="#4f9a48" stroke-width="1.6" opacity="0.7"/><path d="M-3 154l14 28" stroke="#2a6a28" stroke-width="3.4" opacity="0.7"/><path d="M46 156l10 33" stroke="#3a8a38" stroke-width="3.5" opacity="0.7"/><path d="M65 179l19 35" stroke="#2a6a28" stroke-width="1.7" opacity="0.7"/><path d="M-6 146l15 46" stroke="#3a8a38" stroke-width="1.6" opacity="0.7"/><path d="M115 117l13 26" stroke="#4f9a48" stroke-width="2.7" opacity="0.7"/><path d="M-10 82l12 42" stroke="#2a6a28" stroke-width="2.0" opacity="0.7"/><path d="M28 157l12 52" stroke="#3a8a38" stroke-width="2.1" opacity="0.7"/><path d="M98 146l21 46" stroke="#2a6a28" stroke-width="2.5" opacity="0.7"/><path d="M85 155l11 28" stroke="#3a8a38" stroke-width="1.8" opacity="0.7"/><path d="M109 178l9 26" stroke="#2a6a28" stroke-width="2.3" opacity="0.7"/><path d="M-16 97l22 49" stroke="#2a6a28" stroke-width="1.6" opacity="0.7"/><path d="M87 80l18 57" stroke="#2a6a28" stroke-width="2.1" opacity="0.7"/><path d="M55 95l21 50" stroke="#2a6a28" stroke-width="1.5" opacity="0.7"/><path d="M33 147l22 47" stroke="#2a6a28" stroke-width="2.9" opacity="0.7"/><path d="M31 169l9 26" stroke="#4f9a48" stroke-width="2.8" opacity="0.7"/><path d="M29 163l14 38" stroke="#3a8a38" stroke-width="3.9" opacity="0.7"/><path d="M7 123l12 49" stroke="#4f9a48" stroke-width="3.2" opacity="0.7"/><path d="M54 154l25 51" stroke="#4f9a48" stroke-width="2.1" opacity="0.7"/><path d="M52 182l18 38" stroke="#2a6a28" stroke-width="1.5" opacity="0.7"/><path d="M25 160l18 36" stroke="#3a8a38" stroke-width="3.5" opacity="0.7"/><path d="M96 90l12 24" stroke="#2a6a28" stroke-width="2.3" opacity="0.7"/><path d="M24 176l13 39" stroke="#2a6a28" stroke-width="2.3" opacity="0.7"/><path d="M116 179l16 54" stroke="#2a6a28" stroke-width="3.1" opacity="0.7"/><path d="M25 110l9 20" stroke="#4f9a48" stroke-width="2.2" opacity="0.7"/><path d="M-17 113l17 34" stroke="#4f9a48" stroke-width="3.8" opacity="0.7"/><path d="M112 48L190 140" stroke="#d4e8a8" stroke-width="9" stroke-linecap="round" opacity=".7"/><path d="M155 25L235 75" stroke="#c8e0a0" stroke-width="7" stroke-linecap="round" opacity=".6"/><path d="M2 15L35 62" stroke="#c8e0a0" stroke-width="7" stroke-linecap="round" opacity=".6"/><path d="M62 130l20 55" stroke="#a8b8a0" stroke-width="7" opacity=".7"/></g></g><rect x="0" y="184" width="281" height="1" fill="#eef"/></svg>
<svg style="left:56px;top:669px" width="291" height="203" viewBox="0 0 291 203"><defs><filter id="b56" x="-10%" y="-10%" width="120%" height="120%"><feGaussianBlur stdDeviation="1.3"/></filter><clipPath id="c56"><rect width="291" height="203"/></clipPath></defs><g clip-path="url(#c56)"><g filter="url(#b56)"><defs><pattern id="ck" width="6" height="6" patternUnits="userSpaceOnUse"><circle cx="1.4" cy="0.6" r="1.3" fill="#f2dc58" opacity="1.0"/><circle cx="0.5" cy="0.1" r="1.4" fill="#d0b028" opacity="1.0"/><circle cx="4.8" cy="4.6" r="1.2" fill="#f8e878" opacity="1.0"/><circle cx="2.2" cy="4.7" r="1.6" fill="#d0b028" opacity="1.0"/><circle cx="1.3" cy="5.6" r="1.6" fill="#d0b028" opacity="1.0"/><circle cx="4.8" cy="1.2" r="1.3" fill="#f8e878" opacity="1.0"/></pattern></defs><rect width="291" height="203" fill="#4c8a46"/><rect x="0" y="0" width="70" height="203" fill="#4a8a44"/><path d="M0 0h45c5 20 0 50-10 70H0z" fill="#64aa58"/><path d="M85 0h60v40c-20 5-40 5-55 15z" fill="#2c5a2a"/><path d="M105 40c20 10 35 30 40 60l-5 103h-15z" fill="#3a7034"/><path d="M0 110c20 30 35 60 45 93H0z" fill="#3a6e36"/><rect x="143" y="0" width="25" height="180" fill="#78b25c"/><path d="M149 0v180" stroke="#98ca7a" stroke-width="3"/><path d="M150 175h20v28h-20z" fill="#3a6a34"/><path d="M216 0h75v203H165c15-60 40-140 51-203z" fill="#8cbc84"/><path d="M235 60c20 40 25 90 15 143h20c10-50 5-100-15-143z" fill="#7aac70" opacity=".7"/><path d="M287 3L214 203" stroke="#c0e0b0" stroke-width="3"/><path d="M168 0h48c-5 60-25 130-45 203h-3z" fill="#5a9a50"/><path d="M20 20c18-12 42-8 55 8l-6 55c-26-2-42-25-49-63z" fill="#90c47e"/><path d="M48 42C50 28 68 20 82 26c12 6 18 18 22 28l40 149H106L62 100C56 82 48 60 48 42z" fill="#e6cf42"/><path d="M48 42C50 28 68 20 82 26c12 6 18 18 22 28l40 149H106L62 100C56 82 48 60 48 42z" fill="url(#ck)" opacity=".75"/><path d="M22 25c15 10 28 30 36 55l-8 10C35 70 25 50 22 25z" fill="#8cc47a" opacity=".9"/><path d="M8 100c30 25 60 60 80 103H55C40 160 25 125 8 100z" fill="#6aac5a"/><path d="M128 120c5 30 12 60 14 83" stroke="#6aaa5a" stroke-width="8" fill="none"/></g></g></svg>
<svg style="left:407px;top:678px" width="300" height="194" viewBox="0 0 300 194"><defs><filter id="b407" x="-10%" y="-10%" width="120%" height="120%"><feGaussianBlur stdDeviation="0.7"/></filter><clipPath id="c407"><rect width="300" height="194"/></clipPath></defs><g clip-path="url(#c407)"><g filter="url(#b407)"><rect width="300" height="194" fill="#f6f5f3"/><path d="M40 55l45 70M30 70l35 55M55 60l40 55" stroke="#b0987a" stroke-width="1.2"/><path d="M52 111l131 -42" stroke="#d8c4a0" stroke-width="5.9" opacity="1.0"/><path d="M141 144l147 -59" stroke="#cbb38e" stroke-width="5.0" opacity="1.0"/><path d="M73 134l114 -34" stroke="#cbb38e" stroke-width="3.4" opacity="1.0"/><path d="M181 154l99 -33" stroke="#c4aa84" stroke-width="4.1" opacity="1.0"/><path d="M212 117l123 -46" stroke="#cbb38e" stroke-width="5.9" opacity="1.0"/><path d="M193 125l139 -53" stroke="#c4aa84" stroke-width="3.1" opacity="1.0"/><path d="M175 153l102 -25" stroke="#c4aa84" stroke-width="5.2" opacity="1.0"/><path d="M83 140l87 -33" stroke="#bba07a" stroke-width="3.9" opacity="1.0"/><path d="M147 132l109 -26" stroke="#d8c4a0" stroke-width="5.9" opacity="1.0"/><path d="M219 148l97 -33" stroke="#bba07a" stroke-width="3.3" opacity="1.0"/><path d="M83 156l134 -34" stroke="#cbb38e" stroke-width="5.0" opacity="1.0"/><path d="M98 122l149 -28" stroke="#cbb38e" stroke-width="4.4" opacity="1.0"/><path d="M186 129l127 -26" stroke="#cbb38e" stroke-width="3.8" opacity="1.0"/><path d="M198 140l103 -16" stroke="#d8c4a0" stroke-width="5.1" opacity="1.0"/><path d="M195 131l140 -40" stroke="#bba07a" stroke-width="5.6" opacity="1.0"/><path d="M217 132l145 -38" stroke="#c4aa84" stroke-width="3.4" opacity="1.0"/><path d="M25 150L140 120 296 85" stroke="#c9b08a" stroke-width="5" fill="none"/><path d="M85 175L200 140 296 100" stroke="#c4a880" stroke-width="8" fill="none"/><path d="M130 162L230 132 296 118" stroke="#d4c09c" stroke-width="6" fill="none"/><path d="M60 125C120 110 200 100 296 90" stroke="#c8ae88" stroke-width="6" fill="none"/><circle cx="107" cy="141" r="1.8" fill="#2a2622"/><circle cx="129" cy="156" r="2.2" fill="#2a2622"/><circle cx="159" cy="159" r="1.6" fill="#1a1a1a"/><circle cx="138" cy="162" r="2.0" fill="#1a1a1a"/><circle cx="100" cy="142" r="2.3" fill="#3a3530"/><circle cx="158" cy="140" r="2.3" fill="#3a3530"/><circle cx="117" cy="152" r="1.6" fill="#1a1a1a"/><circle cx="165" cy="156" r="2.6" fill="#1a1a1a"/><circle cx="94" cy="141" r="1.6" fill="#3a3530"/><circle cx="158" cy="143" r="1.7" fill="#3a3530"/><circle cx="137" cy="162" r="1.8" fill="#1a1a1a"/><circle cx="80" cy="149" r="2.3" fill="#2a2622"/><circle cx="124" cy="143" r="1.6" fill="#1a1a1a"/><circle cx="137" cy="144" r="1.7" fill="#1a1a1a"/><circle cx="144" cy="157" r="2.3" fill="#1a1a1a"/><circle cx="163" cy="147" r="2.3" fill="#1a1a1a"/><circle cx="132" cy="147" r="2.4" fill="#1a1a1a"/><circle cx="89" cy="145" r="2.1" fill="#3a3530"/><circle cx="110" cy="148" r="2.6" fill="#2a2622"/><circle cx="125" cy="165" r="1.8" fill="#2a2622"/><circle cx="164" cy="144" r="2.5" fill="#2a2622"/><circle cx="152" cy="143" r="2.0" fill="#1a1a1a"/><circle cx="89" cy="139" r="1.6" fill="#1a1a1a"/><circle cx="117" cy="141" r="2.6" fill="#3a3530"/><circle cx="127" cy="138" r="1.9" fill="#1a1a1a"/><circle cx="107" cy="158" r="2.4" fill="#2a2622"/><circle cx="131" cy="157" r="2.2" fill="#2a2622"/><circle cx="108" cy="145" r="1.9" fill="#2a2622"/><circle cx="68" cy="153" r="2.5" fill="#3a3530"/><circle cx="82" cy="151" r="2.5" fill="#2a2622"/><circle cx="145" cy="160" r="1.7" fill="#3a3530"/><circle cx="138" cy="157" r="1.8" fill="#2a2622"/><circle cx="99" cy="138" r="2.5" fill="#3a3530"/><circle cx="90" cy="137" r="2.3" fill="#3a3530"/><circle cx="130" cy="143" r="2.4" fill="#3a3530"/><circle cx="117" cy="148" r="2.1" fill="#2a2622"/><circle cx="97" cy="141" r="2.1" fill="#3a3530"/><circle cx="156" cy="157" r="2.3" fill="#1a1a1a"/><circle cx="148" cy="154" r="2.0" fill="#2a2622"/><circle cx="100" cy="145" r="1.8" fill="#1a1a1a"/><circle cx="89" cy="163" r="2.1" fill="#1a1a1a"/><circle cx="68" cy="153" r="2.0" fill="#1a1a1a"/><circle cx="156" cy="142" r="1.6" fill="#3a3530"/><circle cx="145" cy="146" r="1.8" fill="#3a3530"/><circle cx="101" cy="150" r="1.8" fill="#1a1a1a"/><circle cx="127" cy="158" r="1.8" fill="#1a1a1a"/><circle cx="95" cy="136" r="2.3" fill="#2a2622"/><circle cx="98" cy="160" r="2.1" fill="#2a2622"/><circle cx="139" cy="159" r="2.0" fill="#1a1a1a"/><circle cx="74" cy="146" r="2.0" fill="#2a2622"/><circle cx="84" cy="138" r="1.7" fill="#1a1a1a"/><circle cx="100" cy="164" r="1.9" fill="#1a1a1a"/><circle cx="141" cy="163" r="2.5" fill="#3a3530"/><circle cx="95" cy="162" r="2.4" fill="#2a2622"/><circle cx="161" cy="159" r="2.4" fill="#2a2622"/><circle cx="118" cy="142" r="2.3" fill="#3a3530"/><circle cx="142" cy="152" r="1.8" fill="#1a1a1a"/><circle cx="157" cy="144" r="1.9" fill="#2a2622"/><circle cx="95" cy="136" r="2.4" fill="#3a3530"/><circle cx="99" cy="147" r="2.1" fill="#3a3530"/><circle cx="111" cy="165" r="2.1" fill="#3a3530"/><circle cx="89" cy="161" r="1.7" fill="#3a3530"/><circle cx="106" cy="139" r="2.0" fill="#1a1a1a"/><circle cx="121" cy="152" r="2.1" fill="#3a3530"/><circle cx="78" cy="147" r="2.3" fill="#3a3530"/><circle cx="154" cy="156" r="2.4" fill="#3a3530"/><circle cx="127" cy="148" r="2.0" fill="#2a2622"/><circle cx="152" cy="155" r="2.5" fill="#3a3530"/><circle cx="110" cy="145" r="1.8" fill="#3a3530"/><circle cx="164" cy="151" r="2.1" fill="#3a3530"/><circle cx="141" cy="140" r="2.5" fill="#3a3530"/><circle cx="95" cy="142" r="2.1" fill="#1a1a1a"/><circle cx="92" cy="141" r="1.6" fill="#3a3530"/><circle cx="95" cy="160" r="2.4" fill="#1a1a1a"/><circle cx="79" cy="142" r="1.8" fill="#3a3530"/><circle cx="66" cy="150" r="1.7" fill="#3a3530"/><circle cx="143" cy="137" r="2.0" fill="#1a1a1a"/><circle cx="105" cy="165" r="1.7" fill="#2a2622"/><circle cx="72" cy="157" r="1.8" fill="#1a1a1a"/><circle cx="93" cy="140" r="1.7" fill="#3a3530"/><circle cx="201" cy="142" r="1.7" fill="#1a1a1a"/><circle cx="209" cy="151" r="2.0" fill="#1a1a1a"/><circle cx="190" cy="142" r="1.7" fill="#2a2622"/><circle cx="168" cy="151" r="2.2" fill="#1a1a1a"/><circle cx="211" cy="145" r="1.9" fill="#2a2622"/><circle cx="177" cy="143" r="1.6" fill="#2a2622"/><circle cx="198" cy="155" r="2.2" fill="#1a1a1a"/><circle cx="228" cy="148" r="2.0" fill="#2a2622"/><circle cx="196" cy="153" r="1.5" fill="#1a1a1a"/><circle cx="180" cy="149" r="2.3" fill="#1a1a1a"/><circle cx="180" cy="145" r="1.7" fill="#1a1a1a"/><circle cx="199" cy="145" r="2.2" fill="#1a1a1a"/><circle cx="187" cy="146" r="2.3" fill="#1a1a1a"/><circle cx="205" cy="155" r="2.2" fill="#1a1a1a"/><circle cx="216" cy="155" r="1.9" fill="#1a1a1a"/><circle cx="220" cy="147" r="2.1" fill="#2a2622"/><circle cx="221" cy="152" r="1.6" fill="#1a1a1a"/><circle cx="170" cy="151" r="1.7" fill="#2a2622"/><circle cx="222" cy="148" r="1.7" fill="#1a1a1a"/><circle cx="191" cy="143" r="1.5" fill="#1a1a1a"/><circle cx="162" cy="145" r="2.1" fill="#1a1a1a"/><circle cx="181" cy="152" r="1.9" fill="#2a2622"/><circle cx="205" cy="151" r="1.7" fill="#2a2622"/><circle cx="159" cy="149" r="1.9" fill="#2a2622"/><circle cx="191" cy="144" r="2.1" fill="#1a1a1a"/><circle cx="162" cy="154" r="2.0" fill="#1a1a1a"/><circle cx="198" cy="150" r="1.6" fill="#2a2622"/><circle cx="175" cy="143" r="2.3" fill="#1a1a1a"/><circle cx="157" cy="150" r="1.6" fill="#1a1a1a"/><circle cx="160" cy="150" r="2.0" fill="#2a2622"/><circle cx="192" cy="152" r="2.4" fill="#1a1a1a"/><circle cx="207" cy="148" r="2.1" fill="#2a2622"/><circle cx="185" cy="150" r="1.6" fill="#1a1a1a"/><circle cx="194" cy="151" r="1.5" fill="#1a1a1a"/><circle cx="168" cy="156" r="2.3" fill="#1a1a1a"/><circle cx="22" cy="182" r="3" fill="#111"/><circle cx="150" cy="185" r="2.5" fill="#111"/><circle cx="122" cy="180" r="2.5" fill="#111"/><path d="M205 70C230 72 270 75 296 80" stroke="#6a9a3a" stroke-width="4" fill="none"/><path d="M202 40c6 10 8 20 6 35M248 35c4 12 6 25 5 40" stroke="#6a9a3a" stroke-width="1.5" fill="none"/><path d="M120 65l80 5" stroke="#6a9a3a" stroke-width="3"/><circle cx="118" cy="83" r="3.3" fill="#6a9a30"/><circle cx="135" cy="84" r="2.0" fill="#98c050"/><circle cx="142" cy="89" r="3.9" fill="#98c050"/><circle cx="132" cy="66" r="2.2" fill="#6a9a30"/><circle cx="131" cy="68" r="3.0" fill="#98c050"/><circle cx="117" cy="79" r="4.0" fill="#5a8a28"/><circle cx="142" cy="79" r="2.1" fill="#6a9a30"/><circle cx="119" cy="75" r="2.2" fill="#6a9a30"/><circle cx="147" cy="90" r="2.1" fill="#98c050"/><circle cx="154" cy="100" r="2.7" fill="#98c050"/><circle cx="119" cy="98" r="3.6" fill="#6a9a30"/><circle cx="159" cy="75" r="3.5" fill="#6a9a30"/><circle cx="164" cy="86" r="2.2" fill="#98c050"/><circle cx="160" cy="93" r="2.7" fill="#98c050"/><circle cx="144" cy="67" r="2.3" fill="#6a9a30"/><circle cx="159" cy="93" r="3.1" fill="#5a8a28"/><circle cx="116" cy="85" r="2.9" fill="#6a9a30"/><circle cx="154" cy="97" r="2.3" fill="#6a9a30"/><circle cx="160" cy="78" r="3.4" fill="#98c050"/><circle cx="125" cy="94" r="2.9" fill="#5a8a28"/><circle cx="158" cy="79" r="3.4" fill="#6a9a30"/><circle cx="150" cy="98" r="3.3" fill="#88b040"/><circle cx="148" cy="87" r="2.5" fill="#98c050"/><circle cx="161" cy="77" r="2.7" fill="#88b040"/><circle cx="140" cy="95" r="2.4" fill="#6a9a30"/><circle cx="148" cy="102" r="2.4" fill="#88b040"/><circle cx="156" cy="80" r="2.1" fill="#6a9a30"/><circle cx="160" cy="84" r="3.0" fill="#6a9a30"/><circle cx="142" cy="75" r="2.3" fill="#98c050"/><circle cx="149" cy="69" r="3.2" fill="#88b040"/><circle cx="131" cy="68" r="2.4" fill="#6a9a30"/><circle cx="128" cy="74" r="2.3" fill="#88b040"/><circle cx="149" cy="72" r="2.1" fill="#5a8a28"/><circle cx="137" cy="101" r="3.7" fill="#6a9a30"/><circle cx="137" cy="78" r="2.6" fill="#6a9a30"/><circle cx="151" cy="83" r="3.3" fill="#5a8a28"/><circle cx="142" cy="82" r="3.4" fill="#98c050"/><circle cx="152" cy="83" r="3.1" fill="#98c050"/><circle cx="151" cy="85" r="3.2" fill="#88b040"/><circle cx="144" cy="92" r="3.5" fill="#88b040"/><circle cx="144" cy="65" r="2.2" fill="#6a9a30"/><circle cx="144" cy="93" r="3.0" fill="#5a8a28"/><circle cx="133" cy="67" r="2.9" fill="#5a8a28"/><circle cx="138" cy="69" r="2.6" fill="#5a8a28"/><circle cx="130" cy="95" r="3.4" fill="#98c050"/><circle cx="157.7" cy="79.5" r="6.8" fill="#f0cc10"/><circle cx="148.1" cy="79.5" r="6.8" fill="#f0cc10"/><circle cx="148.1" cy="69.8" r="6.8" fill="#f0cc10"/><circle cx="157.7" cy="69.8" r="6.8" fill="#f0cc10"/><circle cx="153.7" cy="50.7" r="5.4" fill="#f5d41c"/><circle cx="146.0" cy="50.7" r="5.4" fill="#f5d41c"/><circle cx="146.0" cy="43.0" r="5.4" fill="#f5d41c"/><circle cx="153.7" cy="43.0" r="5.4" fill="#f5d41c"/><circle cx="186.8" cy="52.8" r="6.3" fill="#e8c800"/><circle cx="177.8" cy="52.8" r="6.3" fill="#e8c800"/><circle cx="177.8" cy="43.8" r="6.3" fill="#e8c800"/><circle cx="186.8" cy="43.8" r="6.3" fill="#e8c800"/><circle cx="194.5" cy="92.8" r="5.7" fill="#f8e040"/><circle cx="186.4" cy="92.8" r="5.7" fill="#f8e040"/><circle cx="186.4" cy="84.6" r="5.7" fill="#f8e040"/><circle cx="194.5" cy="84.6" r="5.7" fill="#f8e040"/><circle cx="202.0" cy="86.6" r="5.2" fill="#f5d41c"/><circle cx="194.7" cy="86.6" r="5.2" fill="#f5d41c"/><circle cx="194.7" cy="79.2" r="5.2" fill="#f5d41c"/><circle cx="202.0" cy="79.2" r="5.2" fill="#f5d41c"/><circle cx="175.8" cy="48.7" r="5.6" fill="#f8e040"/><circle cx="167.8" cy="48.7" r="5.6" fill="#f8e040"/><circle cx="167.8" cy="40.7" r="5.6" fill="#f8e040"/><circle cx="175.8" cy="40.7" r="5.6" fill="#f8e040"/><circle cx="133.7" cy="47.3" r="5.5" fill="#f5d41c"/><circle cx="125.9" cy="47.3" r="5.5" fill="#f5d41c"/><circle cx="125.9" cy="39.5" r="5.5" fill="#f5d41c"/><circle cx="133.7" cy="39.5" r="5.5" fill="#f5d41c"/><circle cx="186.0" cy="97.7" r="6.6" fill="#f8e040"/><circle cx="176.7" cy="97.7" r="6.6" fill="#f8e040"/><circle cx="176.7" cy="88.4" r="6.6" fill="#f8e040"/><circle cx="186.0" cy="88.4" r="6.6" fill="#f8e040"/><circle cx="153.0" cy="71.0" r="5.9" fill="#f0cc10"/><circle cx="144.6" cy="71.0" r="5.9" fill="#f0cc10"/><circle cx="144.6" cy="62.6" r="5.9" fill="#f0cc10"/><circle cx="153.0" cy="62.6" r="5.9" fill="#f0cc10"/><circle cx="139.2" cy="69.8" r="6.7" fill="#f8e040"/><circle cx="129.8" cy="69.8" r="6.7" fill="#f8e040"/><circle cx="129.8" cy="60.4" r="6.7" fill="#f8e040"/><circle cx="139.2" cy="60.4" r="6.7" fill="#f8e040"/><circle cx="191.0" cy="49.1" r="5.0" fill="#f5d41c"/><circle cx="183.9" cy="49.1" r="5.0" fill="#f5d41c"/><circle cx="183.9" cy="42.1" r="5.0" fill="#f5d41c"/><circle cx="191.0" cy="42.1" r="5.0" fill="#f5d41c"/><circle cx="175.3" cy="85.8" r="6.2" fill="#f8e040"/><circle cx="166.5" cy="85.8" r="6.2" fill="#f8e040"/><circle cx="166.5" cy="77.1" r="6.2" fill="#f8e040"/><circle cx="175.3" cy="77.1" r="6.2" fill="#f8e040"/><circle cx="134.9" cy="31.3" r="5.7" fill="#f0cc10"/><circle cx="126.9" cy="31.3" r="5.7" fill="#f0cc10"/><circle cx="126.9" cy="23.2" r="5.7" fill="#f0cc10"/><circle cx="134.9" cy="23.2" r="5.7" fill="#f0cc10"/><circle cx="177.9" cy="25.7" r="5.9" fill="#f5d41c"/><circle cx="169.5" cy="25.7" r="5.9" fill="#f5d41c"/><circle cx="169.5" cy="17.3" r="5.9" fill="#f5d41c"/><circle cx="177.9" cy="17.3" r="5.9" fill="#f5d41c"/><circle cx="184.7" cy="70.9" r="5.3" fill="#f5d41c"/><circle cx="177.2" cy="70.9" r="5.3" fill="#f5d41c"/><circle cx="177.2" cy="63.4" r="5.3" fill="#f5d41c"/><circle cx="184.7" cy="63.4" r="5.3" fill="#f5d41c"/><circle cx="179.6" cy="51.8" r="6.4" fill="#f8e040"/><circle cx="170.6" cy="51.8" r="6.4" fill="#f8e040"/><circle cx="170.6" cy="42.8" r="6.4" fill="#f8e040"/><circle cx="179.6" cy="42.8" r="6.4" fill="#f8e040"/><circle cx="121.6" cy="66.7" r="5.3" fill="#f0cc10"/><circle cx="114.0" cy="66.7" r="5.3" fill="#f0cc10"/><circle cx="114.0" cy="59.1" r="5.3" fill="#f0cc10"/><circle cx="121.6" cy="59.1" r="5.3" fill="#f0cc10"/><circle cx="121.4" cy="73.2" r="7.1" fill="#f5d41c"/><circle cx="111.4" cy="73.2" r="7.1" fill="#f5d41c"/><circle cx="111.4" cy="63.1" r="7.1" fill="#f5d41c"/><circle cx="121.4" cy="63.1" r="7.1" fill="#f5d41c"/><circle cx="197.5" cy="56.0" r="6.7" fill="#f5d41c"/><circle cx="188.0" cy="56.0" r="6.7" fill="#f5d41c"/><circle cx="188.0" cy="46.5" r="6.7" fill="#f5d41c"/><circle cx="197.5" cy="46.5" r="6.7" fill="#f5d41c"/><circle cx="144.0" cy="52.1" r="5.8" fill="#e8c800"/><circle cx="135.7" cy="52.1" r="5.8" fill="#e8c800"/><circle cx="135.7" cy="43.9" r="5.8" fill="#e8c800"/><circle cx="144.0" cy="43.9" r="5.8" fill="#e8c800"/><circle cx="122.3" cy="68.1" r="6.4" fill="#e8c800"/><circle cx="113.3" cy="68.1" r="6.4" fill="#e8c800"/><circle cx="113.3" cy="59.1" r="6.4" fill="#e8c800"/><circle cx="122.3" cy="59.1" r="6.4" fill="#e8c800"/><circle cx="195.3" cy="50.0" r="6.1" fill="#f8e040"/><circle cx="186.6" cy="50.0" r="6.1" fill="#f8e040"/><circle cx="186.6" cy="41.3" r="6.1" fill="#f8e040"/><circle cx="195.3" cy="41.3" r="6.1" fill="#f8e040"/><circle cx="139.9" cy="96.5" r="6.2" fill="#f5d41c"/><circle cx="131.2" cy="96.5" r="6.2" fill="#f5d41c"/><circle cx="131.2" cy="87.8" r="6.2" fill="#f5d41c"/><circle cx="139.9" cy="87.8" r="6.2" fill="#f5d41c"/><circle cx="167.5" cy="114.6" r="6.5" fill="#e8c800"/><circle cx="158.4" cy="114.6" r="6.5" fill="#e8c800"/><circle cx="158.4" cy="105.5" r="6.5" fill="#e8c800"/><circle cx="167.5" cy="105.5" r="6.5" fill="#e8c800"/><circle cx="242.1" cy="33.1" r="7.2" fill="#f3d530"/><circle cx="231.9" cy="33.1" r="7.2" fill="#f3d530"/><circle cx="231.9" cy="22.9" r="7.2" fill="#f3d530"/><circle cx="242.1" cy="22.9" r="7.2" fill="#f3d530"/><circle cx="235.4" cy="97.4" r="7.7" fill="#f0d030"/><circle cx="224.6" cy="97.4" r="7.7" fill="#f0d030"/><circle cx="224.6" cy="86.6" r="7.7" fill="#f0d030"/><circle cx="235.4" cy="86.6" r="7.7" fill="#f0d030"/><circle cx="221.9" cy="111.9" r="5.5" fill="#f2d428"/><circle cx="214.1" cy="111.9" r="5.5" fill="#f2d428"/><circle cx="214.1" cy="104.1" r="5.5" fill="#f2d428"/><circle cx="221.9" cy="104.1" r="5.5" fill="#f2d428"/><circle cx="149" cy="85" r="2.9" fill="#88b040"/><circle cx="138" cy="77" r="2.8" fill="#6a9a30"/><circle cx="138" cy="74" r="2.0" fill="#5a8a28"/><circle cx="133" cy="103" r="3.4" fill="#6a9a30"/><circle cx="128" cy="95" r="2.5" fill="#98c050"/><circle cx="130" cy="74" r="3.1" fill="#6a9a30"/><circle cx="129" cy="83" r="2.7" fill="#5a8a28"/><circle cx="117" cy="91" r="3.3" fill="#5a8a28"/><circle cx="130" cy="85" r="2.6" fill="#5a8a28"/><circle cx="144" cy="79" r="2.2" fill="#88b040"/><circle cx="141" cy="82" r="3.1" fill="#6a9a30"/><circle cx="126" cy="78" r="2.8" fill="#88b040"/><circle cx="142" cy="78" r="2.6" fill="#5a8a28"/><circle cx="141" cy="78" r="2.5" fill="#6a9a30"/><circle cx="133" cy="95" r="2.3" fill="#88b040"/><circle cx="126" cy="75" r="2.6" fill="#88b040"/><circle cx="116" cy="84" r="3.2" fill="#5a8a28"/><circle cx="142" cy="87" r="3.1" fill="#88b040"/><circle cx="145" cy="93" r="2.6" fill="#98c050"/><circle cx="153" cy="84" r="2.5" fill="#5a8a28"/><circle cx="127" cy="82" r="2.8" fill="#88b040"/><circle cx="148" cy="85" r="3.1" fill="#98c050"/><circle cx="151" cy="95" r="2.5" fill="#98c050"/><circle cx="134" cy="102" r="2.0" fill="#6a9a30"/><circle cx="116" cy="98" r="2.9" fill="#88b040"/><circle cx="139" cy="96" r="3.1" fill="#6a9a30"/><circle cx="137" cy="96" r="2.2" fill="#5a8a28"/><circle cx="139" cy="79" r="2.5" fill="#88b040"/><circle cx="127" cy="77" r="3.4" fill="#88b040"/><circle cx="124" cy="82" r="2.4" fill="#5a8a28"/></g></g></svg>
<svg style="left:768px;top:669px" width="324" height="203" viewBox="0 0 324 203"><defs><filter id="b768" x="-10%" y="-10%" width="120%" height="120%"><feGaussianBlur stdDeviation="0.8"/></filter><clipPath id="c768"><rect width="324" height="203"/></clipPath></defs><g clip-path="url(#c768)"><g filter="url(#b768)"><defs><clipPath id="sg1"><path d="M0 60C5 30 30 15 60 22c25 6 40 30 45 60l-5 70c-30 10-70 5-100-10z"/></clipPath><clipPath id="sg2"><path d="M70 45C80 15 120 5 160 10c30 5 50 25 52 45l-15 90c-30 10-80 5-118-10z"/></clipPath><clipPath id="sg3"><path d="M190 75c20-30 60-35 95-20 25 10 39 40 39 60v40c-40 15-95 15-134 0z"/></clipPath></defs><rect width="324" height="203" fill="#8e969c"/><path d="M150 0h174v150c-40-40-100-90-174-120z" fill="#b4bbc0"/><rect x="0" y="0" width="324" height="30" fill="#a6acb0"/><path d="M0 120h110l10 83H0zM110 130h90v73h-90zM200 150c30 0 60 10 90 20l-20 33h-70z" fill="#98a88c"/><path d="M27 157l10 -89" stroke="#8aaa72" stroke-width="2.0" opacity="1.0"/><path d="M28 191l15 -66" stroke="#6a8a58" stroke-width="1.7" opacity="1.0"/><path d="M40 203l18 -97" stroke="#7d9a68" stroke-width="1.0" opacity="1.0"/><path d="M28 154l15 -48" stroke="#6a8a58" stroke-width="1.4" opacity="1.0"/><path d="M86 196l14 -50" stroke="#7d9a68" stroke-width="1.5" opacity="1.0"/><path d="M92 154l31 -94" stroke="#7d9a68" stroke-width="1.2" opacity="1.0"/><path d="M108 153l5 -66" stroke="#a0b488" stroke-width="2.1" opacity="1.0"/><path d="M108 144l20 -96" stroke="#8aaa72" stroke-width="1.7" opacity="1.0"/><path d="M109 156l14 -65" stroke="#7d9a68" stroke-width="2.2" opacity="1.0"/><path d="M91 183l33 -90" stroke="#7d9a68" stroke-width="1.6" opacity="1.0"/><path d="M90 196l27 -86" stroke="#7d9a68" stroke-width="1.4" opacity="1.0"/><path d="M58 192l20 -61" stroke="#6a8a58" stroke-width="1.3" opacity="1.0"/><path d="M80 165l13 -98" stroke="#7d9a68" stroke-width="1.4" opacity="1.0"/><path d="M34 172l10 -51" stroke="#6a8a58" stroke-width="2.1" opacity="1.0"/><path d="M32 155l9 -78" stroke="#a0b488" stroke-width="2.1" opacity="1.0"/><path d="M20 138l26 -80" stroke="#8aaa72" stroke-width="1.8" opacity="1.0"/><path d="M80 162l20 -95" stroke="#6a8a58" stroke-width="1.7" opacity="1.0"/><path d="M65 151l12 -62" stroke="#6a8a58" stroke-width="1.2" opacity="1.0"/><path d="M75 201l17 -93" stroke="#a0b488" stroke-width="1.4" opacity="1.0"/><path d="M44 202l20 -56" stroke="#a0b488" stroke-width="1.5" opacity="1.0"/><path d="M82 140l10 -39" stroke="#8aaa72" stroke-width="1.5" opacity="1.0"/><path d="M104 185l9 -63" stroke="#6a8a58" stroke-width="2.0" opacity="1.0"/><path d="M58 113l15 -94" stroke="#6a8a58" stroke-width="2.1" opacity="1.0"/><path d="M8 155l19 -85" stroke="#8aaa72" stroke-width="1.4" opacity="1.0"/><path d="M100 117l14 -69" stroke="#7d9a68" stroke-width="1.3" opacity="1.0"/><path d="M85 127l27 -90" stroke="#7d9a68" stroke-width="1.7" opacity="1.0"/><path d="M68 181l10 -91" stroke="#a0b488" stroke-width="1.8" opacity="1.0"/><path d="M17 159l10 -51" stroke="#7d9a68" stroke-width="2.0" opacity="1.0"/><path d="M50 117l16 -44" stroke="#7d9a68" stroke-width="1.7" opacity="1.0"/><path d="M94 171l17 -69" stroke="#a0b488" stroke-width="1.4" opacity="1.0"/><path d="M87 198l9 -44" stroke="#7d9a68" stroke-width="1.6" opacity="1.0"/><path d="M60 126l13 -72" stroke="#7d9a68" stroke-width="1.2" opacity="1.0"/><path d="M90 119l18 -87" stroke="#7d9a68" stroke-width="1.0" opacity="1.0"/><path d="M2 187l7 -44" stroke="#6a8a58" stroke-width="1.1" opacity="1.0"/><path d="M1 115l16 -57" stroke="#7d9a68" stroke-width="1.9" opacity="1.0"/><path d="M75 162l7 -41" stroke="#a0b488" stroke-width="1.4" opacity="1.0"/><path d="M65 151l5 -58" stroke="#6a8a58" stroke-width="1.1" opacity="1.0"/><path d="M59 151l8 -51" stroke="#6a8a58" stroke-width="1.6" opacity="1.0"/><path d="M11 164l19 -67" stroke="#6a8a58" stroke-width="2.0" opacity="1.0"/><path d="M75 112l13 -69" stroke="#8aaa72" stroke-width="1.2" opacity="1.0"/><path d="M53 185l7 -78" stroke="#a0b488" stroke-width="1.4" opacity="1.0"/><path d="M67 157l13 -45" stroke="#8aaa72" stroke-width="1.5" opacity="1.0"/><path d="M34 152l9 -58" stroke="#a0b488" stroke-width="1.8" opacity="1.0"/><path d="M6 119l22 -62" stroke="#7d9a68" stroke-width="2.0" opacity="1.0"/><path d="M103 178l10 -81" stroke="#6a8a58" stroke-width="2.0" opacity="1.0"/><path d="M109 173l8 -65" stroke="#a0b488" stroke-width="1.8" opacity="1.0"/><path d="M86 168l9 -56" stroke="#7d9a68" stroke-width="1.3" opacity="1.0"/><path d="M19 180l14 -43" stroke="#a0b488" stroke-width="1.3" opacity="1.0"/><path d="M51 167l15 -43" stroke="#8aaa72" stroke-width="2.0" opacity="1.0"/><path d="M30 148l11 -79" stroke="#8aaa72" stroke-width="1.0" opacity="1.0"/><path d="M78 203l13 -41" stroke="#7d9a68" stroke-width="1.3" opacity="1.0"/><path d="M80 135l7 -91" stroke="#8aaa72" stroke-width="1.3" opacity="1.0"/><path d="M28 194l13 -89" stroke="#a0b488" stroke-width="1.8" opacity="1.0"/><path d="M37 154l22 -72" stroke="#8aaa72" stroke-width="1.8" opacity="1.0"/><path d="M24 130l13 -55" stroke="#8aaa72" stroke-width="1.8" opacity="1.0"/><path d="M34 194l14 -40" stroke="#7d9a68" stroke-width="2.0" opacity="1.0"/><path d="M68 182l16 -59" stroke="#6a8a58" stroke-width="1.5" opacity="1.0"/><path d="M30 131l28 -84" stroke="#a0b488" stroke-width="1.4" opacity="1.0"/><path d="M93 142l14 -52" stroke="#7d9a68" stroke-width="1.7" opacity="1.0"/><path d="M27 112l23 -82" stroke="#6a8a58" stroke-width="1.4" opacity="1.0"/><path d="M46 121l6 -54" stroke="#6a8a58" stroke-width="1.6" opacity="1.0"/><path d="M94 121l9 -71" stroke="#a0b488" stroke-width="2.1" opacity="1.0"/><path d="M96 128l9 -54" stroke="#8aaa72" stroke-width="1.4" opacity="1.0"/><path d="M90 152l7 -45" stroke="#7d9a68" stroke-width="1.9" opacity="1.0"/><path d="M103 161l9 -64" stroke="#a0b488" stroke-width="2.1" opacity="1.0"/><path d="M92 195l27 -83" stroke="#7d9a68" stroke-width="1.7" opacity="1.0"/><path d="M33 146l6 -47" stroke="#6a8a58" stroke-width="1.0" opacity="1.0"/><path d="M51 135l13 -77" stroke="#6a8a58" stroke-width="1.5" opacity="1.0"/><path d="M89 112l20 -86" stroke="#a0b488" stroke-width="1.2" opacity="1.0"/><path d="M102 166l15 -52" stroke="#7d9a68" stroke-width="1.9" opacity="1.0"/><path d="M39 132l6 -72" stroke="#6a8a58" stroke-width="1.6" opacity="1.0"/><path d="M50 198l6 -75" stroke="#8aaa72" stroke-width="1.3" opacity="1.0"/><path d="M63 155l7 -64" stroke="#7d9a68" stroke-width="1.3" opacity="1.0"/><path d="M84 132l15 -87" stroke="#a0b488" stroke-width="1.3" opacity="1.0"/><path d="M32 195l14 -56" stroke="#7d9a68" stroke-width="1.8" opacity="1.0"/><path d="M1 197l23 -81" stroke="#7d9a68" stroke-width="1.3" opacity="1.0"/><path d="M92 167l18 -76" stroke="#6a8a58" stroke-width="1.1" opacity="1.0"/><path d="M92 151l25 -79" stroke="#a0b488" stroke-width="1.5" opacity="1.0"/><path d="M31 118l8 -84" stroke="#7d9a68" stroke-width="1.5" opacity="1.0"/><path d="M109 188l23 -71" stroke="#8aaa72" stroke-width="2.0" opacity="1.0"/><path d="M13 115l16 -54" stroke="#a0b488" stroke-width="1.4" opacity="1.0"/><path d="M93 146l14 -97" stroke="#8aaa72" stroke-width="1.8" opacity="1.0"/><path d="M36 191l14 -90" stroke="#7d9a68" stroke-width="2.1" opacity="1.0"/><path d="M92 113l8 -75" stroke="#a0b488" stroke-width="1.1" opacity="1.0"/><path d="M85 117l12 -93" stroke="#6a8a58" stroke-width="1.5" opacity="1.0"/><path d="M21 188l15 -55" stroke="#a0b488" stroke-width="1.3" opacity="1.0"/><path d="M84 125l12 -78" stroke="#a0b488" stroke-width="1.4" opacity="1.0"/><path d="M40 199l8 -86" stroke="#a0b488" stroke-width="2.1" opacity="1.0"/><path d="M14 152l7 -40" stroke="#8aaa72" stroke-width="1.0" opacity="1.0"/><path d="M39 184l28 -80" stroke="#8aaa72" stroke-width="2.0" opacity="1.0"/><path d="M198 125l7 -69" stroke="#7f9a6a" stroke-width="1.5" opacity="1.0"/><path d="M192 133l11 -64" stroke="#a0b888" stroke-width="2.2" opacity="1.0"/><path d="M144 120l3 -66" stroke="#a0b888" stroke-width="1.1" opacity="1.0"/><path d="M117 139l-2 -87" stroke="#b0c098" stroke-width="1.1" opacity="1.0"/><path d="M103 171l0 -45" stroke="#b0c098" stroke-width="1.8" opacity="1.0"/><path d="M188 165l-5 -71" stroke="#a0b888" stroke-width="1.3" opacity="1.0"/><path d="M132 185l1 -74" stroke="#b0c098" stroke-width="1.7" opacity="1.0"/><path d="M120 137l7 -69" stroke="#a0b888" stroke-width="1.2" opacity="1.0"/><path d="M112 135l-5 -76" stroke="#7f9a6a" stroke-width="1.2" opacity="1.0"/><path d="M157 126l-5 -83" stroke="#a0b888" stroke-width="1.2" opacity="1.0"/><path d="M196 191l8 -67" stroke="#a0b888" stroke-width="2.0" opacity="1.0"/><path d="M124 177l11 -84" stroke="#b0c098" stroke-width="1.6" opacity="1.0"/><path d="M167 126l4 -49" stroke="#92aa7a" stroke-width="1.4" opacity="1.0"/><path d="M107 124l2 -49" stroke="#b0c098" stroke-width="1.6" opacity="1.0"/><path d="M167 133l1 -43" stroke="#a0b888" stroke-width="2.0" opacity="1.0"/><path d="M115 177l10 -59" stroke="#a0b888" stroke-width="1.4" opacity="1.0"/><path d="M119 131l10 -96" stroke="#92aa7a" stroke-width="1.9" opacity="1.0"/><path d="M189 190l-4 -73" stroke="#7f9a6a" stroke-width="1.4" opacity="1.0"/><path d="M137 121l5 -55" stroke="#b0c098" stroke-width="1.3" opacity="1.0"/><path d="M170 147l-5 -96" stroke="#7f9a6a" stroke-width="1.4" opacity="1.0"/><path d="M143 176l1 -40" stroke="#b0c098" stroke-width="1.3" opacity="1.0"/><path d="M166 162l7 -46" stroke="#b0c098" stroke-width="1.3" opacity="1.0"/><path d="M188 179l-3 -95" stroke="#92aa7a" stroke-width="1.3" opacity="1.0"/><path d="M185 190l-2 -41" stroke="#a0b888" stroke-width="1.3" opacity="1.0"/><path d="M165 158l-2 -61" stroke="#a0b888" stroke-width="1.1" opacity="1.0"/><path d="M153 186l6 -56" stroke="#7f9a6a" stroke-width="1.6" opacity="1.0"/><path d="M200 196l8 -47" stroke="#92aa7a" stroke-width="1.4" opacity="1.0"/><path d="M176 136l-1 -98" stroke="#a0b888" stroke-width="1.0" opacity="1.0"/><path d="M112 180l1 -49" stroke="#b0c098" stroke-width="1.4" opacity="1.0"/><path d="M108 154l1 -79" stroke="#92aa7a" stroke-width="1.8" opacity="1.0"/><path d="M183 197l13 -80" stroke="#b0c098" stroke-width="2.0" opacity="1.0"/><path d="M165 129l10 -57" stroke="#7f9a6a" stroke-width="1.8" opacity="1.0"/><path d="M186 130l9 -59" stroke="#b0c098" stroke-width="1.9" opacity="1.0"/><path d="M165 143l5 -70" stroke="#7f9a6a" stroke-width="1.9" opacity="1.0"/><path d="M100 157l13 -97" stroke="#b0c098" stroke-width="1.2" opacity="1.0"/><path d="M120 190l6 -77" stroke="#7f9a6a" stroke-width="1.6" opacity="1.0"/><path d="M112 194l1 -42" stroke="#a0b888" stroke-width="1.5" opacity="1.0"/><path d="M113 157l6 -81" stroke="#92aa7a" stroke-width="1.4" opacity="1.0"/><path d="M193 121l-4 -52" stroke="#b0c098" stroke-width="1.2" opacity="1.0"/><path d="M104 192l-4 -75" stroke="#a0b888" stroke-width="2.0" opacity="1.0"/><path d="M198 169l-6 -74" stroke="#92aa7a" stroke-width="1.2" opacity="1.0"/><path d="M141 162l5 -50" stroke="#a0b888" stroke-width="1.9" opacity="1.0"/><path d="M138 163l-6 -87" stroke="#7f9a6a" stroke-width="2.1" opacity="1.0"/><path d="M168 199l3 -58" stroke="#92aa7a" stroke-width="1.1" opacity="1.0"/><path d="M134 165l2 -57" stroke="#b0c098" stroke-width="1.4" opacity="1.0"/><path d="M179 189l-5 -45" stroke="#7f9a6a" stroke-width="2.1" opacity="1.0"/><path d="M163 148l10 -94" stroke="#92aa7a" stroke-width="1.2" opacity="1.0"/><path d="M138 181l0 -47" stroke="#a0b888" stroke-width="1.2" opacity="1.0"/><path d="M116 124l1 -56" stroke="#b0c098" stroke-width="2.2" opacity="1.0"/><path d="M137 196l7 -88" stroke="#92aa7a" stroke-width="1.8" opacity="1.0"/><path d="M198 181l-9 -85" stroke="#92aa7a" stroke-width="1.8" opacity="1.0"/><path d="M103 121l-5 -47" stroke="#92aa7a" stroke-width="2.0" opacity="1.0"/><path d="M196 188l1 -40" stroke="#a0b888" stroke-width="1.1" opacity="1.0"/><path d="M125 157l12 -83" stroke="#92aa7a" stroke-width="1.5" opacity="1.0"/><path d="M155 200l-1 -60" stroke="#7f9a6a" stroke-width="1.1" opacity="1.0"/><path d="M108 133l2 -62" stroke="#7f9a6a" stroke-width="1.7" opacity="1.0"/><path d="M120 188l-3 -80" stroke="#a0b888" stroke-width="1.0" opacity="1.0"/><path d="M129 138l2 -61" stroke="#7f9a6a" stroke-width="1.3" opacity="1.0"/><path d="M193 189l-5 -54" stroke="#7f9a6a" stroke-width="1.5" opacity="1.0"/><path d="M180 174l8 -90" stroke="#a0b888" stroke-width="1.8" opacity="1.0"/><path d="M172 201l2 -56" stroke="#7f9a6a" stroke-width="1.6" opacity="1.0"/><path d="M119 183l12 -68" stroke="#7f9a6a" stroke-width="2.1" opacity="1.0"/><path d="M175 145l5 -96" stroke="#a0b888" stroke-width="1.6" opacity="1.0"/><path d="M125 141l0 -88" stroke="#b0c098" stroke-width="1.8" opacity="1.0"/><path d="M191 127l-1 -63" stroke="#92aa7a" stroke-width="1.2" opacity="1.0"/><path d="M154 174l7 -63" stroke="#92aa7a" stroke-width="1.2" opacity="1.0"/><path d="M142 189l5 -47" stroke="#7f9a6a" stroke-width="1.4" opacity="1.0"/><path d="M192 182l5 -92" stroke="#92aa7a" stroke-width="1.2" opacity="1.0"/><path d="M103 159l12 -99" stroke="#a0b888" stroke-width="2.0" opacity="1.0"/><path d="M163 137l6 -52" stroke="#92aa7a" stroke-width="2.0" opacity="1.0"/><path d="M138 144l2 -45" stroke="#b0c098" stroke-width="1.8" opacity="1.0"/><path d="M110 179l11 -96" stroke="#b0c098" stroke-width="1.1" opacity="1.0"/><path d="M163 143l-3 -80" stroke="#7f9a6a" stroke-width="2.2" opacity="1.0"/><path d="M134 158l5 -87" stroke="#a0b888" stroke-width="2.1" opacity="1.0"/><path d="M193 158l13 -83" stroke="#92aa7a" stroke-width="1.6" opacity="1.0"/><path d="M193 155l1 -88" stroke="#92aa7a" stroke-width="1.1" opacity="1.0"/><path d="M105 174l4 -45" stroke="#92aa7a" stroke-width="1.7" opacity="1.0"/><path d="M152 131l14 -86" stroke="#a0b888" stroke-width="1.4" opacity="1.0"/><path d="M129 156l14 -95" stroke="#a0b888" stroke-width="1.5" opacity="1.0"/><path d="M159 179l7 -40" stroke="#92aa7a" stroke-width="1.8" opacity="1.0"/><path d="M109 183l12 -92" stroke="#7f9a6a" stroke-width="1.2" opacity="1.0"/><path d="M152 140l-8 -88" stroke="#92aa7a" stroke-width="2.0" opacity="1.0"/><path d="M140 143l6 -70" stroke="#92aa7a" stroke-width="1.1" opacity="1.0"/><path d="M169 162l9 -58" stroke="#b0c098" stroke-width="1.7" opacity="1.0"/><path d="M103 133l3 -76" stroke="#7f9a6a" stroke-width="1.6" opacity="1.0"/><path d="M186 168l1 -93" stroke="#a0b888" stroke-width="2.0" opacity="1.0"/><path d="M188 150l7 -71" stroke="#a0b888" stroke-width="1.6" opacity="1.0"/><path d="M125 176l7 -98" stroke="#7f9a6a" stroke-width="2.1" opacity="1.0"/><path d="M177 194l-3 -58" stroke="#92aa7a" stroke-width="1.0" opacity="1.0"/><path d="M158 170l1 -59" stroke="#7f9a6a" stroke-width="1.3" opacity="1.0"/><path d="M258 194l34 -75" stroke="#7a8c68" stroke-width="1.6" opacity="1.0"/><path d="M271 180l22 -36" stroke="#8a9c78" stroke-width="2.2" opacity="1.0"/><path d="M228 131l22 -37" stroke="#8a9c78" stroke-width="1.4" opacity="1.0"/><path d="M239 139l23 -67" stroke="#7a8c68" stroke-width="2.0" opacity="1.0"/><path d="M246 153l32 -51" stroke="#8a9c78" stroke-width="1.1" opacity="1.0"/><path d="M265 154l22 -50" stroke="#8a9c78" stroke-width="1.9" opacity="1.0"/><path d="M239 188l21 -57" stroke="#8a9c78" stroke-width="2.1" opacity="1.0"/><path d="M199 182l30 -91" stroke="#98ac84" stroke-width="2.1" opacity="1.0"/><path d="M250 141l20 -62" stroke="#8a9c78" stroke-width="1.2" opacity="1.0"/><path d="M249 173l32 -61" stroke="#7a8c68" stroke-width="1.6" opacity="1.0"/><path d="M229 160l21 -41" stroke="#7a8c68" stroke-width="1.5" opacity="1.0"/><path d="M233 126l26 -75" stroke="#8a9c78" stroke-width="2.0" opacity="1.0"/><path d="M256 197l30 -80" stroke="#7a8c68" stroke-width="1.6" opacity="1.0"/><path d="M237 135l21 -56" stroke="#8a9c78" stroke-width="1.3" opacity="1.0"/><path d="M238 182l50 -83" stroke="#8a9c78" stroke-width="1.3" opacity="1.0"/><path d="M252 180l27 -56" stroke="#98ac84" stroke-width="1.2" opacity="1.0"/><path d="M277 167l37 -81" stroke="#7a8c68" stroke-width="1.4" opacity="1.0"/><path d="M297 135l37 -76" stroke="#8a9c78" stroke-width="1.1" opacity="1.0"/><path d="M249 156l43 -73" stroke="#98ac84" stroke-width="2.1" opacity="1.0"/><path d="M241 132l30 -57" stroke="#8a9c78" stroke-width="1.7" opacity="1.0"/><path d="M230 141l34 -78" stroke="#7a8c68" stroke-width="1.7" opacity="1.0"/><path d="M225 148l20 -60" stroke="#7a8c68" stroke-width="1.7" opacity="1.0"/><path d="M261 123l19 -61" stroke="#7a8c68" stroke-width="1.8" opacity="1.0"/><path d="M263 159l26 -56" stroke="#8a9c78" stroke-width="1.5" opacity="1.0"/><path d="M235 187l39 -64" stroke="#8a9c78" stroke-width="1.5" opacity="1.0"/><path d="M291 138l40 -78" stroke="#98ac84" stroke-width="1.3" opacity="1.0"/><path d="M211 183l21 -48" stroke="#8a9c78" stroke-width="1.7" opacity="1.0"/><path d="M216 154l24 -76" stroke="#7a8c68" stroke-width="1.5" opacity="1.0"/><path d="M204 154l23 -57" stroke="#7a8c68" stroke-width="1.9" opacity="1.0"/><path d="M240 155l34 -68" stroke="#98ac84" stroke-width="1.2" opacity="1.0"/><path d="M201 162l28 -45" stroke="#8a9c78" stroke-width="1.8" opacity="1.0"/><path d="M226 148l41 -83" stroke="#98ac84" stroke-width="2.1" opacity="1.0"/><path d="M198 128l44 -76" stroke="#7a8c68" stroke-width="1.1" opacity="1.0"/><path d="M248 150l23 -54" stroke="#7a8c68" stroke-width="1.2" opacity="1.0"/><path d="M212 130l42 -81" stroke="#98ac84" stroke-width="1.7" opacity="1.0"/><path d="M209 187l46 -75" stroke="#8a9c78" stroke-width="2.1" opacity="1.0"/><path d="M261 129l31 -49" stroke="#7a8c68" stroke-width="2.0" opacity="1.0"/><path d="M281 123l18 -52" stroke="#8a9c78" stroke-width="1.5" opacity="1.0"/><path d="M239 197l43 -85" stroke="#7a8c68" stroke-width="2.1" opacity="1.0"/><path d="M233 175l20 -59" stroke="#8a9c78" stroke-width="1.1" opacity="1.0"/><path d="M294 140l44 -69" stroke="#98ac84" stroke-width="2.1" opacity="1.0"/><path d="M208 149l43 -81" stroke="#8a9c78" stroke-width="1.6" opacity="1.0"/><path d="M209 148l25 -56" stroke="#98ac84" stroke-width="1.2" opacity="1.0"/><path d="M216 133l28 -83" stroke="#8a9c78" stroke-width="2.2" opacity="1.0"/><path d="M289 196l39 -82" stroke="#8a9c78" stroke-width="2.2" opacity="1.0"/><path d="M202 148l31 -76" stroke="#8a9c78" stroke-width="1.3" opacity="1.0"/><path d="M288 187l26 -52" stroke="#8a9c78" stroke-width="1.0" opacity="1.0"/><path d="M231 171l25 -57" stroke="#7a8c68" stroke-width="1.2" opacity="1.0"/><path d="M282 183l32 -68" stroke="#8a9c78" stroke-width="1.8" opacity="1.0"/><path d="M219 158l36 -63" stroke="#7a8c68" stroke-width="1.9" opacity="1.0"/><path d="M207 128l45 -85" stroke="#7a8c68" stroke-width="2.0" opacity="1.0"/><path d="M299 134l18 -45" stroke="#8a9c78" stroke-width="1.8" opacity="1.0"/><path d="M235 154l22 -38" stroke="#98ac84" stroke-width="2.1" opacity="1.0"/><path d="M297 131l30 -89" stroke="#98ac84" stroke-width="1.5" opacity="1.0"/><path d="M250 170l15 -40" stroke="#7a8c68" stroke-width="1.5" opacity="1.0"/><path d="M230 201l42 -86" stroke="#8a9c78" stroke-width="1.7" opacity="1.0"/><path d="M210 149l48 -83" stroke="#7a8c68" stroke-width="1.5" opacity="1.0"/><path d="M268 148l30 -61" stroke="#8a9c78" stroke-width="1.7" opacity="1.0"/><path d="M277 193l20 -37" stroke="#98ac84" stroke-width="1.5" opacity="1.0"/><path d="M261 200l36 -66" stroke="#8a9c78" stroke-width="1.6" opacity="1.0"/><path d="M242 147l25 -81" stroke="#7a8c68" stroke-width="1.6" opacity="1.0"/><path d="M200 134l28 -77" stroke="#8a9c78" stroke-width="2.1" opacity="1.0"/><path d="M257 183l47 -85" stroke="#7a8c68" stroke-width="1.6" opacity="1.0"/><path d="M274 186l24 -43" stroke="#8a9c78" stroke-width="2.2" opacity="1.0"/><path d="M276 175l18 -58" stroke="#8a9c78" stroke-width="1.8" opacity="1.0"/><path d="M260 131l28 -80" stroke="#98ac84" stroke-width="2.2" opacity="1.0"/><path d="M285 130l40 -91" stroke="#98ac84" stroke-width="1.9" opacity="1.0"/><path d="M218 136l19 -51" stroke="#8a9c78" stroke-width="1.1" opacity="1.0"/><path d="M230 173l37 -60" stroke="#98ac84" stroke-width="1.1" opacity="1.0"/><path d="M211 173l33 -70" stroke="#98ac84" stroke-width="1.9" opacity="1.0"/><path d="M209 126l17 -46" stroke="#98ac84" stroke-width="1.0" opacity="1.0"/><path d="M252 190l29 -52" stroke="#8a9c78" stroke-width="1.7" opacity="1.0"/><path d="M224 189l34 -82" stroke="#8a9c78" stroke-width="1.4" opacity="1.0"/><path d="M300 167l31 -80" stroke="#98ac84" stroke-width="1.0" opacity="1.0"/><path d="M219 135l34 -64" stroke="#7a8c68" stroke-width="1.1" opacity="1.0"/><path d="M290 171l26 -86" stroke="#98ac84" stroke-width="2.2" opacity="1.0"/><path d="M199 171l48 -76" stroke="#8a9c78" stroke-width="1.1" opacity="1.0"/><path d="M278 143l29 -95" stroke="#7a8c68" stroke-width="1.4" opacity="1.0"/><path d="M265 161l23 -47" stroke="#8a9c78" stroke-width="1.3" opacity="1.0"/><path d="M296 134l17 -40" stroke="#8a9c78" stroke-width="1.6" opacity="1.0"/><path d="M273 164l22 -68" stroke="#98ac84" stroke-width="1.2" opacity="1.0"/><path d="M207 201l25 -45" stroke="#8a9c78" stroke-width="1.3" opacity="1.0"/><path d="M294 124l18 -37" stroke="#7a8c68" stroke-width="1.1" opacity="1.0"/><path d="M299 196l32 -53" stroke="#98ac84" stroke-width="1.4" opacity="1.0"/><path d="M201 172l48 -84" stroke="#7a8c68" stroke-width="2.1" opacity="1.0"/><path d="M243 121l36 -63" stroke="#7a8c68" stroke-width="2.0" opacity="1.0"/><path d="M200 145l29 -84" stroke="#8a9c78" stroke-width="2.2" opacity="1.0"/><path d="M232 163l16 -41" stroke="#7a8c68" stroke-width="1.8" opacity="1.0"/><path d="M191 138l17 -49" stroke="#7a8c68" stroke-width="1.5" opacity="1.0"/><path d="M214 153l24 -42" stroke="#8a9c78" stroke-width="1.8" opacity="1.0"/><path d="M0 60C5 30 30 15 60 22c25 6 40 30 45 60l-5 70c-30 10-70 5-100-10z" fill="#b09a6c"/><g clip-path="url(#sg1)"><circle cx="101" cy="36" r="2.3" fill="#8a7a50"/><circle cx="98" cy="91" r="1.8" fill="#d4bc88"/><circle cx="64" cy="74" r="2.9" fill="#a08858"/><circle cx="80" cy="24" r="3.0" fill="#7a9a68"/><circle cx="50" cy="29" r="2.0" fill="#d4bc88"/><circle cx="102" cy="57" r="1.7" fill="#d4bc88"/><circle cx="104" cy="168" r="2.4" fill="#c4ac78"/><circle cx="41" cy="17" r="1.9" fill="#a08858"/><circle cx="80" cy="41" r="2.9" fill="#a08858"/><circle cx="42" cy="161" r="1.5" fill="#a08858"/><circle cx="49" cy="105" r="3.0" fill="#a08858"/><circle cx="27" cy="108" r="2.5" fill="#7a9a68"/><circle cx="26" cy="68" r="2.1" fill="#8a7a50"/><circle cx="43" cy="160" r="2.3" fill="#8a7a50"/><circle cx="102" cy="146" r="1.9" fill="#d4bc88"/><circle cx="53" cy="60" r="2.8" fill="#7a9a68"/><circle cx="49" cy="93" r="2.9" fill="#8a7a50"/><circle cx="65" cy="93" r="2.0" fill="#c4ac78"/><circle cx="102" cy="109" r="2.1" fill="#8a7a50"/><circle cx="44" cy="82" r="2.0" fill="#8a7a50"/><circle cx="95" cy="105" r="1.6" fill="#7a9a68"/><circle cx="61" cy="87" r="2.9" fill="#d4bc88"/><circle cx="65" cy="117" r="2.1" fill="#d4bc88"/><circle cx="78" cy="35" r="2.3" fill="#d4bc88"/><circle cx="77" cy="31" r="2.9" fill="#c4ac78"/><circle cx="109" cy="107" r="1.7" fill="#a08858"/><circle cx="61" cy="35" r="1.8" fill="#d4bc88"/><circle cx="35" cy="49" r="2.7" fill="#d4bc88"/><circle cx="64" cy="164" r="2.7" fill="#c4ac78"/><circle cx="0" cy="112" r="1.8" fill="#8a7a50"/><circle cx="52" cy="68" r="2.0" fill="#c4ac78"/><circle cx="25" cy="153" r="2.1" fill="#a08858"/><circle cx="24" cy="78" r="2.6" fill="#7a9a68"/><circle cx="6" cy="119" r="2.9" fill="#d4bc88"/><circle cx="82" cy="21" r="2.5" fill="#8a7a50"/><circle cx="3" cy="38" r="2.8" fill="#8a7a50"/><circle cx="2" cy="28" r="2.3" fill="#a08858"/><circle cx="43" cy="119" r="1.5" fill="#c4ac78"/><circle cx="108" cy="140" r="1.7" fill="#d4bc88"/><circle cx="92" cy="21" r="1.8" fill="#c4ac78"/><circle cx="84" cy="121" r="1.8" fill="#c4ac78"/><circle cx="66" cy="67" r="2.9" fill="#8a7a50"/><circle cx="84" cy="123" r="2.3" fill="#d4bc88"/><circle cx="50" cy="73" r="2.8" fill="#7a9a68"/><circle cx="77" cy="82" r="2.8" fill="#7a9a68"/><circle cx="30" cy="76" r="2.7" fill="#8a7a50"/><circle cx="100" cy="150" r="2.8" fill="#a08858"/><circle cx="38" cy="75" r="1.6" fill="#d4bc88"/><circle cx="39" cy="63" r="2.0" fill="#d4bc88"/><circle cx="99" cy="168" r="2.1" fill="#d4bc88"/><circle cx="87" cy="161" r="2.3" fill="#a08858"/><circle cx="43" cy="57" r="2.4" fill="#a08858"/><circle cx="12" cy="31" r="2.9" fill="#c4ac78"/><circle cx="54" cy="120" r="2.3" fill="#a08858"/><circle cx="8" cy="16" r="2.4" fill="#7a9a68"/><circle cx="4" cy="23" r="1.8" fill="#a08858"/><circle cx="48" cy="165" r="2.0" fill="#c4ac78"/><circle cx="92" cy="106" r="1.8" fill="#a08858"/><circle cx="34" cy="137" r="1.6" fill="#7a9a68"/><circle cx="73" cy="49" r="2.7" fill="#c4ac78"/><circle cx="54" cy="144" r="2.1" fill="#a08858"/><circle cx="47" cy="104" r="1.9" fill="#a08858"/><circle cx="50" cy="45" r="1.9" fill="#a08858"/><circle cx="99" cy="134" r="2.0" fill="#d4bc88"/><circle cx="62" cy="166" r="2.3" fill="#8a7a50"/><circle cx="10" cy="57" r="2.1" fill="#7a9a68"/><circle cx="18" cy="69" r="1.7" fill="#a08858"/><circle cx="83" cy="87" r="2.1" fill="#7a9a68"/><circle cx="33" cy="61" r="1.9" fill="#d4bc88"/><circle cx="105" cy="128" r="1.5" fill="#a08858"/><circle cx="62" cy="81" r="1.7" fill="#8a7a50"/><circle cx="32" cy="132" r="1.9" fill="#d4bc88"/><circle cx="105" cy="144" r="1.6" fill="#c4ac78"/><circle cx="49" cy="22" r="1.6" fill="#7a9a68"/><circle cx="97" cy="89" r="1.9" fill="#d4bc88"/><circle cx="6" cy="104" r="2.0" fill="#c4ac78"/><circle cx="27" cy="17" r="1.6" fill="#c4ac78"/><circle cx="40" cy="44" r="2.4" fill="#7a9a68"/><circle cx="6" cy="60" r="2.4" fill="#a08858"/><circle cx="63" cy="21" r="2.8" fill="#d4bc88"/><circle cx="48" cy="65" r="1.5" fill="#d4bc88"/><circle cx="10" cy="128" r="1.9" fill="#7a9a68"/><circle cx="70" cy="131" r="2.3" fill="#a08858"/><circle cx="35" cy="120" r="2.8" fill="#7a9a68"/><circle cx="21" cy="112" r="1.9" fill="#d4bc88"/><circle cx="73" cy="125" r="1.6" fill="#8a7a50"/><circle cx="1" cy="73" r="2.5" fill="#7a9a68"/><circle cx="95" cy="64" r="2.8" fill="#8a7a50"/><circle cx="10" cy="31" r="2.5" fill="#c4ac78"/><circle cx="61" cy="73" r="3.0" fill="#8a7a50"/><circle cx="104" cy="117" r="2.9" fill="#7a9a68"/><circle cx="90" cy="121" r="1.9" fill="#7a9a68"/><circle cx="58" cy="69" r="2.9" fill="#7a9a68"/><circle cx="11" cy="62" r="2.4" fill="#d4bc88"/><circle cx="78" cy="144" r="2.8" fill="#d4bc88"/><circle cx="89" cy="25" r="2.3" fill="#a08858"/><circle cx="44" cy="159" r="3.0" fill="#c4ac78"/><circle cx="10" cy="60" r="1.6" fill="#a08858"/><circle cx="39" cy="45" r="1.9" fill="#7a9a68"/><circle cx="88" cy="79" r="1.7" fill="#7a9a68"/><circle cx="57" cy="78" r="2.5" fill="#d4bc88"/><circle cx="37" cy="166" r="2.6" fill="#8a7a50"/><circle cx="62" cy="74" r="2.6" fill="#d4bc88"/><circle cx="98" cy="125" r="2.6" fill="#7a9a68"/><circle cx="52" cy="66" r="2.0" fill="#8a7a50"/><circle cx="55" cy="55" r="1.5" fill="#8a7a50"/><circle cx="84" cy="19" r="2.3" fill="#7a9a68"/><circle cx="99" cy="161" r="2.8" fill="#d4bc88"/><circle cx="76" cy="139" r="2.8" fill="#d4bc88"/><circle cx="87" cy="133" r="1.7" fill="#d4bc88"/><circle cx="52" cy="65" r="2.2" fill="#a08858"/><circle cx="33" cy="78" r="2.7" fill="#a08858"/><circle cx="87" cy="45" r="2.6" fill="#d4bc88"/><circle cx="64" cy="91" r="1.9" fill="#a08858"/><circle cx="27" cy="52" r="2.1" fill="#7a9a68"/><circle cx="108" cy="116" r="2.5" fill="#7a9a68"/><circle cx="18" cy="164" r="2.6" fill="#a08858"/><circle cx="31" cy="162" r="2.8" fill="#7a9a68"/><circle cx="103" cy="123" r="2.8" fill="#7a9a68"/><circle cx="104" cy="65" r="2.5" fill="#7a9a68"/><circle cx="101" cy="137" r="2.7" fill="#8a7a50"/><circle cx="17" cy="124" r="1.9" fill="#8a7a50"/><circle cx="16" cy="88" r="1.6" fill="#d4bc88"/><circle cx="17" cy="114" r="2.4" fill="#7a9a68"/><circle cx="100" cy="124" r="1.5" fill="#c4ac78"/><circle cx="103" cy="69" r="2.7" fill="#d4bc88"/><circle cx="30" cy="111" r="1.8" fill="#7a9a68"/><circle cx="48" cy="156" r="3.0" fill="#8a7a50"/><circle cx="76" cy="45" r="2.2" fill="#8a7a50"/><circle cx="65" cy="39" r="2.4" fill="#d4bc88"/><circle cx="86" cy="31" r="2.8" fill="#a08858"/><circle cx="103" cy="52" r="2.9" fill="#7a9a68"/><circle cx="90" cy="99" r="2.9" fill="#d4bc88"/><circle cx="92" cy="70" r="1.9" fill="#7a9a68"/><circle cx="12" cy="76" r="1.6" fill="#7a9a68"/><circle cx="12" cy="35" r="2.6" fill="#d4bc88"/><circle cx="101" cy="152" r="2.9" fill="#a08858"/><circle cx="103" cy="117" r="2.6" fill="#d4bc88"/><circle cx="106" cy="16" r="1.8" fill="#d4bc88"/><circle cx="81" cy="157" r="1.6" fill="#7a9a68"/><circle cx="108" cy="167" r="2.5" fill="#7a9a68"/><circle cx="106" cy="138" r="2.0" fill="#7a9a68"/><circle cx="66" cy="69" r="1.7" fill="#c4ac78"/><circle cx="19" cy="134" r="2.4" fill="#c4ac78"/><circle cx="2" cy="78" r="2.2" fill="#d4bc88"/><circle cx="81" cy="83" r="2.9" fill="#7a9a68"/><circle cx="90" cy="135" r="2.2" fill="#c4ac78"/><circle cx="1" cy="80" r="2.4" fill="#8a7a50"/><circle cx="2" cy="17" r="2.8" fill="#7a9a68"/><circle cx="21" cy="108" r="2.2" fill="#c4ac78"/><circle cx="88" cy="61" r="2.9" fill="#d4bc88"/><circle cx="32" cy="145" r="1.8" fill="#8a7a50"/><circle cx="44" cy="58" r="2.5" fill="#8a7a50"/><circle cx="106" cy="135" r="2.4" fill="#d4bc88"/><circle cx="98" cy="72" r="1.7" fill="#8a7a50"/><circle cx="86" cy="92" r="1.6" fill="#7a9a68"/><circle cx="85" cy="18" r="2.4" fill="#c4ac78"/><circle cx="85" cy="30" r="1.5" fill="#7a9a68"/><circle cx="106" cy="161" r="2.3" fill="#c4ac78"/><circle cx="63" cy="52" r="2.8" fill="#8a7a50"/><circle cx="28" cy="131" r="1.8" fill="#7a9a68"/><circle cx="88" cy="150" r="1.7" fill="#a08858"/><circle cx="24" cy="46" r="1.6" fill="#7a9a68"/><circle cx="108" cy="59" r="2.0" fill="#7a9a68"/><circle cx="39" cy="64" r="2.3" fill="#a08858"/><circle cx="66" cy="93" r="2.2" fill="#7a9a68"/><circle cx="25" cy="160" r="2.9" fill="#d4bc88"/><circle cx="55" cy="30" r="1.9" fill="#c4ac78"/><circle cx="34" cy="135" r="2.0" fill="#a08858"/><circle cx="3" cy="79" r="2.0" fill="#a08858"/></g><path d="M70 45C80 15 120 5 160 10c30 5 50 25 52 45l-15 90c-30 10-80 5-118-10z" fill="#a86e60"/><g clip-path="url(#sg2)"><circle cx="83" cy="143" r="1.7" fill="#c88c78"/><circle cx="189" cy="113" r="2.0" fill="#c88c78"/><circle cx="200" cy="139" r="2.8" fill="#7a4a40"/><circle cx="147" cy="61" r="2.1" fill="#7a4a40"/><circle cx="211" cy="117" r="1.6" fill="#c88c78"/><circle cx="76" cy="38" r="2.6" fill="#d09a88"/><circle cx="136" cy="37" r="2.1" fill="#b87a68"/><circle cx="141" cy="113" r="1.8" fill="#8e5a4c"/><circle cx="128" cy="49" r="2.7" fill="#b87a68"/><circle cx="187" cy="64" r="2.0" fill="#d09a88"/><circle cx="99" cy="73" r="2.8" fill="#8e5a4c"/><circle cx="114" cy="28" r="1.8" fill="#8e5a4c"/><circle cx="187" cy="109" r="2.7" fill="#d09a88"/><circle cx="156" cy="21" r="2.7" fill="#b87a68"/><circle cx="106" cy="123" r="2.5" fill="#c88c78"/><circle cx="115" cy="23" r="2.4" fill="#7a4a40"/><circle cx="141" cy="15" r="1.9" fill="#c88c78"/><circle cx="88" cy="38" r="2.3" fill="#7a4a40"/><circle cx="154" cy="97" r="1.6" fill="#8e5a4c"/><circle cx="183" cy="110" r="2.0" fill="#7a4a40"/><circle cx="116" cy="56" r="2.9" fill="#b87a68"/><circle cx="75" cy="108" r="1.8" fill="#c88c78"/><circle cx="137" cy="47" r="2.3" fill="#c88c78"/><circle cx="162" cy="35" r="2.9" fill="#8e5a4c"/><circle cx="96" cy="35" r="3.0" fill="#c88c78"/><circle cx="133" cy="99" r="1.5" fill="#b87a68"/><circle cx="149" cy="91" r="1.9" fill="#7a4a40"/><circle cx="100" cy="102" r="2.9" fill="#7a4a40"/><circle cx="98" cy="132" r="1.8" fill="#d09a88"/><circle cx="74" cy="96" r="2.2" fill="#d09a88"/><circle cx="138" cy="142" r="1.8" fill="#7a4a40"/><circle cx="74" cy="69" r="1.6" fill="#c88c78"/><circle cx="131" cy="62" r="2.8" fill="#c88c78"/><circle cx="81" cy="127" r="1.7" fill="#8e5a4c"/><circle cx="74" cy="114" r="2.6" fill="#c88c78"/><circle cx="175" cy="107" r="1.6" fill="#d09a88"/><circle cx="80" cy="83" r="1.9" fill="#b87a68"/><circle cx="142" cy="17" r="2.0" fill="#b87a68"/><circle cx="186" cy="78" r="2.7" fill="#8e5a4c"/><circle cx="107" cy="25" r="2.4" fill="#d09a88"/><circle cx="169" cy="83" r="2.5" fill="#d09a88"/><circle cx="162" cy="84" r="1.6" fill="#7a4a40"/><circle cx="148" cy="51" r="1.7" fill="#d09a88"/><circle cx="85" cy="92" r="2.5" fill="#c88c78"/><circle cx="80" cy="138" r="2.8" fill="#b87a68"/><circle cx="138" cy="108" r="2.2" fill="#b87a68"/><circle cx="81" cy="103" r="1.6" fill="#d09a88"/><circle cx="90" cy="76" r="1.6" fill="#7a4a40"/><circle cx="176" cy="15" r="1.6" fill="#d09a88"/><circle cx="186" cy="149" r="1.7" fill="#c88c78"/><circle cx="209" cy="112" r="1.8" fill="#d09a88"/><circle cx="126" cy="9" r="1.8" fill="#c88c78"/><circle cx="139" cy="55" r="1.5" fill="#8e5a4c"/><circle cx="208" cy="110" r="2.4" fill="#c88c78"/><circle cx="202" cy="19" r="1.6" fill="#d09a88"/><circle cx="191" cy="100" r="2.2" fill="#c88c78"/><circle cx="153" cy="43" r="2.2" fill="#b87a68"/><circle cx="164" cy="129" r="1.8" fill="#d09a88"/><circle cx="84" cy="52" r="2.2" fill="#d09a88"/><circle cx="149" cy="30" r="2.1" fill="#c88c78"/><circle cx="188" cy="141" r="2.7" fill="#d09a88"/><circle cx="103" cy="8" r="2.5" fill="#b87a68"/><circle cx="128" cy="112" r="1.6" fill="#8e5a4c"/><circle cx="104" cy="85" r="2.1" fill="#d09a88"/><circle cx="211" cy="53" r="1.6" fill="#b87a68"/><circle cx="121" cy="145" r="2.3" fill="#d09a88"/><circle cx="105" cy="146" r="2.0" fill="#c88c78"/><circle cx="202" cy="63" r="1.6" fill="#d09a88"/><circle cx="171" cy="96" r="2.6" fill="#c88c78"/><circle cx="189" cy="55" r="2.0" fill="#b87a68"/><circle cx="111" cy="19" r="2.3" fill="#7a4a40"/><circle cx="114" cy="112" r="2.6" fill="#7a4a40"/><circle cx="112" cy="66" r="2.8" fill="#d09a88"/><circle cx="210" cy="116" r="2.8" fill="#c88c78"/><circle cx="137" cy="98" r="1.6" fill="#7a4a40"/><circle cx="87" cy="79" r="2.5" fill="#c88c78"/><circle cx="206" cy="105" r="2.0" fill="#8e5a4c"/><circle cx="173" cy="131" r="1.7" fill="#c88c78"/><circle cx="112" cy="55" r="1.8" fill="#c88c78"/><circle cx="120" cy="81" r="2.8" fill="#b87a68"/><circle cx="178" cy="138" r="2.1" fill="#c88c78"/><circle cx="139" cy="136" r="2.6" fill="#c88c78"/><circle cx="209" cy="135" r="2.7" fill="#7a4a40"/><circle cx="120" cy="67" r="2.4" fill="#7a4a40"/><circle cx="186" cy="93" r="2.6" fill="#b87a68"/><circle cx="167" cy="36" r="2.2" fill="#7a4a40"/><circle cx="190" cy="71" r="2.2" fill="#d09a88"/><circle cx="77" cy="39" r="2.1" fill="#b87a68"/><circle cx="157" cy="16" r="1.9" fill="#8e5a4c"/><circle cx="176" cy="147" r="2.3" fill="#d09a88"/><circle cx="89" cy="148" r="2.6" fill="#c88c78"/><circle cx="164" cy="35" r="2.1" fill="#c88c78"/><circle cx="84" cy="90" r="1.9" fill="#c88c78"/><circle cx="150" cy="51" r="1.9" fill="#d09a88"/><circle cx="117" cy="30" r="3.0" fill="#7a4a40"/><circle cx="148" cy="34" r="2.5" fill="#8e5a4c"/><circle cx="161" cy="65" r="2.1" fill="#c88c78"/><circle cx="109" cy="134" r="2.6" fill="#c88c78"/><circle cx="206" cy="105" r="1.7" fill="#c88c78"/><circle cx="156" cy="76" r="1.5" fill="#c88c78"/><circle cx="133" cy="62" r="2.3" fill="#b87a68"/><circle cx="148" cy="34" r="2.6" fill="#c88c78"/><circle cx="188" cy="42" r="1.5" fill="#d09a88"/><circle cx="150" cy="27" r="1.9" fill="#8e5a4c"/><circle cx="86" cy="62" r="1.8" fill="#b87a68"/><circle cx="133" cy="137" r="2.8" fill="#d09a88"/><circle cx="180" cy="11" r="1.9" fill="#d09a88"/><circle cx="182" cy="148" r="2.2" fill="#7a4a40"/><circle cx="83" cy="117" r="1.9" fill="#7a4a40"/><circle cx="83" cy="19" r="2.0" fill="#8e5a4c"/><circle cx="105" cy="17" r="1.8" fill="#8e5a4c"/><circle cx="74" cy="123" r="2.6" fill="#d09a88"/><circle cx="77" cy="145" r="3.0" fill="#8e5a4c"/><circle cx="171" cy="34" r="2.8" fill="#b87a68"/><circle cx="141" cy="92" r="1.8" fill="#7a4a40"/><circle cx="120" cy="139" r="2.2" fill="#c88c78"/><circle cx="182" cy="143" r="1.7" fill="#8e5a4c"/><circle cx="128" cy="71" r="2.6" fill="#b87a68"/><circle cx="75" cy="117" r="2.3" fill="#8e5a4c"/><circle cx="147" cy="149" r="2.7" fill="#8e5a4c"/><circle cx="198" cy="68" r="2.5" fill="#c88c78"/><circle cx="167" cy="17" r="2.2" fill="#7a4a40"/><circle cx="132" cy="20" r="2.7" fill="#7a4a40"/><circle cx="85" cy="123" r="2.8" fill="#c88c78"/><circle cx="176" cy="107" r="1.7" fill="#8e5a4c"/><circle cx="191" cy="56" r="2.3" fill="#8e5a4c"/><circle cx="160" cy="29" r="2.1" fill="#c88c78"/><circle cx="114" cy="20" r="2.8" fill="#d09a88"/><circle cx="99" cy="6" r="2.1" fill="#d09a88"/><circle cx="94" cy="73" r="1.5" fill="#c88c78"/><circle cx="142" cy="128" r="1.9" fill="#8e5a4c"/><circle cx="115" cy="59" r="1.5" fill="#7a4a40"/><circle cx="87" cy="65" r="2.8" fill="#8e5a4c"/><circle cx="126" cy="109" r="2.2" fill="#b87a68"/><circle cx="143" cy="123" r="2.9" fill="#b87a68"/><circle cx="178" cy="73" r="1.8" fill="#c88c78"/><circle cx="148" cy="106" r="2.3" fill="#d09a88"/><circle cx="85" cy="126" r="2.0" fill="#b87a68"/><circle cx="184" cy="88" r="2.3" fill="#b87a68"/><circle cx="167" cy="109" r="1.8" fill="#c88c78"/><circle cx="97" cy="74" r="2.1" fill="#7a4a40"/><circle cx="199" cy="36" r="2.4" fill="#7a4a40"/><circle cx="201" cy="126" r="2.5" fill="#d09a88"/><circle cx="97" cy="48" r="2.0" fill="#d09a88"/><circle cx="97" cy="43" r="2.7" fill="#c88c78"/><circle cx="155" cy="133" r="2.6" fill="#8e5a4c"/><circle cx="89" cy="60" r="1.7" fill="#d09a88"/><circle cx="76" cy="33" r="2.8" fill="#7a4a40"/><circle cx="83" cy="37" r="2.9" fill="#8e5a4c"/><circle cx="166" cy="101" r="1.8" fill="#c88c78"/><circle cx="182" cy="28" r="2.9" fill="#7a4a40"/><circle cx="169" cy="136" r="2.3" fill="#8e5a4c"/><circle cx="142" cy="52" r="2.3" fill="#d09a88"/><circle cx="158" cy="37" r="2.4" fill="#8e5a4c"/><circle cx="99" cy="136" r="1.9" fill="#7a4a40"/><circle cx="197" cy="12" r="2.0" fill="#7a4a40"/><circle cx="80" cy="90" r="2.6" fill="#7a4a40"/><circle cx="181" cy="25" r="1.6" fill="#c88c78"/><circle cx="116" cy="116" r="2.6" fill="#d09a88"/><circle cx="82" cy="35" r="2.9" fill="#7a4a40"/><circle cx="78" cy="81" r="1.8" fill="#8e5a4c"/><circle cx="104" cy="44" r="2.9" fill="#c88c78"/><circle cx="128" cy="15" r="2.2" fill="#8e5a4c"/><circle cx="211" cy="148" r="2.3" fill="#8e5a4c"/><circle cx="182" cy="131" r="2.4" fill="#c88c78"/><circle cx="128" cy="95" r="2.3" fill="#d09a88"/><circle cx="78" cy="137" r="2.3" fill="#7a4a40"/><circle cx="97" cy="83" r="1.8" fill="#c88c78"/><circle cx="131" cy="93" r="1.7" fill="#8e5a4c"/><circle cx="199" cy="65" r="2.5" fill="#7a4a40"/><circle cx="88" cy="39" r="2.1" fill="#8e5a4c"/><circle cx="135" cy="74" r="1.6" fill="#8e5a4c"/><circle cx="118" cy="93" r="2.9" fill="#b87a68"/><circle cx="78" cy="129" r="2.9" fill="#7a4a40"/><circle cx="195" cy="133" r="2.1" fill="#8e5a4c"/><circle cx="196" cy="23" r="1.8" fill="#7a4a40"/><circle cx="80" cy="144" r="2.7" fill="#8e5a4c"/><circle cx="138" cy="76" r="1.7" fill="#8e5a4c"/><circle cx="158" cy="88" r="1.9" fill="#d09a88"/><circle cx="122" cy="15" r="2.4" fill="#d09a88"/><circle cx="122" cy="31" r="2.8" fill="#7a4a40"/><circle cx="84" cy="64" r="2.1" fill="#c88c78"/><circle cx="169" cy="142" r="2.3" fill="#c88c78"/><circle cx="201" cy="75" r="2.5" fill="#b87a68"/><circle cx="189" cy="84" r="1.9" fill="#b87a68"/><circle cx="163" cy="143" r="2.6" fill="#d09a88"/><circle cx="83" cy="77" r="2.5" fill="#b87a68"/><circle cx="98" cy="11" r="1.8" fill="#7a4a40"/><circle cx="139" cy="126" r="2.7" fill="#c88c78"/><circle cx="122" cy="126" r="2.2" fill="#8e5a4c"/><circle cx="198" cy="130" r="1.6" fill="#d09a88"/><circle cx="141" cy="10" r="3.0" fill="#c88c78"/><circle cx="170" cy="99" r="1.6" fill="#8e5a4c"/><circle cx="135" cy="98" r="1.5" fill="#8e5a4c"/><circle cx="138" cy="129" r="2.8" fill="#8e5a4c"/><circle cx="171" cy="59" r="2.3" fill="#7a4a40"/><circle cx="84" cy="122" r="2.2" fill="#7a4a40"/><circle cx="155" cy="15" r="2.6" fill="#8e5a4c"/><circle cx="183" cy="104" r="2.6" fill="#c88c78"/><circle cx="92" cy="145" r="1.9" fill="#d09a88"/><circle cx="141" cy="26" r="1.8" fill="#7a4a40"/><circle cx="70" cy="72" r="1.7" fill="#b87a68"/><circle cx="98" cy="13" r="2.0" fill="#8e5a4c"/><circle cx="70" cy="100" r="2.4" fill="#7a4a40"/><circle cx="86" cy="79" r="1.6" fill="#c88c78"/><circle cx="136" cy="90" r="1.5" fill="#b87a68"/><circle cx="152" cy="132" r="1.8" fill="#8e5a4c"/><circle cx="182" cy="37" r="1.5" fill="#b87a68"/><circle cx="119" cy="49" r="2.6" fill="#8e5a4c"/><circle cx="138" cy="115" r="2.9" fill="#7a4a40"/><circle cx="138" cy="56" r="2.9" fill="#c88c78"/><circle cx="99" cy="75" r="1.6" fill="#c88c78"/><circle cx="181" cy="12" r="2.7" fill="#7a4a40"/><circle cx="197" cy="138" r="2.4" fill="#d09a88"/><circle cx="161" cy="80" r="1.6" fill="#c88c78"/><circle cx="188" cy="144" r="2.0" fill="#7a4a40"/><circle cx="128" cy="100" r="2.6" fill="#8e5a4c"/><circle cx="190" cy="20" r="2.1" fill="#c88c78"/><circle cx="100" cy="63" r="2.0" fill="#b87a68"/><circle cx="88" cy="114" r="2.8" fill="#8e5a4c"/><circle cx="203" cy="44" r="2.8" fill="#c88c78"/><circle cx="158" cy="58" r="2.6" fill="#d09a88"/><circle cx="201" cy="133" r="2.1" fill="#8e5a4c"/><circle cx="111" cy="61" r="1.6" fill="#7a4a40"/><circle cx="147" cy="110" r="3.0" fill="#8e5a4c"/><circle cx="96" cy="133" r="2.2" fill="#b87a68"/><circle cx="97" cy="105" r="1.9" fill="#7a4a40"/><circle cx="125" cy="71" r="2.4" fill="#7a4a40"/><circle cx="164" cy="34" r="2.2" fill="#d09a88"/><circle cx="145" cy="128" r="1.6" fill="#b87a68"/></g><path d="M190 75c20-30 60-35 95-20 25 10 39 40 39 60v40c-40 15-95 15-134 0z" fill="#6a5e66"/><g clip-path="url(#sg3)"><circle cx="319" cy="111" r="2.2" fill="#888078"/><circle cx="227" cy="108" r="2.9" fill="#6e6068"/><circle cx="198" cy="118" r="2.0" fill="#3a3038"/><circle cx="323" cy="63" r="2.6" fill="#6e6068"/><circle cx="193" cy="114" r="1.7" fill="#4a3e48"/><circle cx="314" cy="87" r="1.9" fill="#4a3e48"/><circle cx="270" cy="110" r="2.2" fill="#7a6e70"/><circle cx="202" cy="126" r="1.6" fill="#6e6068"/><circle cx="258" cy="59" r="1.8" fill="#888078"/><circle cx="254" cy="121" r="1.5" fill="#4a3e48"/><circle cx="266" cy="35" r="2.4" fill="#4a3e48"/><circle cx="258" cy="48" r="2.2" fill="#3a3038"/><circle cx="251" cy="85" r="2.3" fill="#888078"/><circle cx="254" cy="41" r="2.8" fill="#6e6068"/><circle cx="233" cy="129" r="1.7" fill="#6e6068"/><circle cx="227" cy="114" r="2.2" fill="#6e6068"/><circle cx="189" cy="147" r="2.8" fill="#6e6068"/><circle cx="292" cy="47" r="2.9" fill="#3a3038"/><circle cx="269" cy="89" r="2.6" fill="#888078"/><circle cx="252" cy="136" r="2.0" fill="#6e6068"/><circle cx="193" cy="129" r="2.1" fill="#6e6068"/><circle cx="277" cy="108" r="2.4" fill="#888078"/><circle cx="274" cy="124" r="1.6" fill="#7a6e70"/><circle cx="221" cy="104" r="1.6" fill="#6e6068"/><circle cx="292" cy="160" r="2.9" fill="#4a3e48"/><circle cx="322" cy="90" r="2.6" fill="#6e6068"/><circle cx="214" cy="50" r="2.0" fill="#888078"/><circle cx="203" cy="156" r="2.3" fill="#6e6068"/><circle cx="243" cy="162" r="2.6" fill="#6e6068"/><circle cx="293" cy="162" r="1.9" fill="#888078"/><circle cx="274" cy="162" r="1.8" fill="#4a3e48"/><circle cx="275" cy="93" r="2.7" fill="#888078"/><circle cx="293" cy="149" r="2.3" fill="#888078"/><circle cx="237" cy="89" r="1.9" fill="#4a3e48"/><circle cx="295" cy="96" r="2.6" fill="#4a3e48"/><circle cx="233" cy="86" r="2.0" fill="#7a6e70"/><circle cx="203" cy="169" r="2.4" fill="#7a6e70"/><circle cx="228" cy="107" r="2.8" fill="#4a3e48"/><circle cx="284" cy="93" r="2.2" fill="#3a3038"/><circle cx="221" cy="129" r="2.8" fill="#7a6e70"/><circle cx="305" cy="64" r="2.8" fill="#888078"/><circle cx="298" cy="141" r="3.0" fill="#3a3038"/><circle cx="192" cy="113" r="2.8" fill="#3a3038"/><circle cx="186" cy="126" r="2.2" fill="#7a6e70"/><circle cx="286" cy="166" r="1.6" fill="#6e6068"/><circle cx="234" cy="60" r="2.2" fill="#6e6068"/><circle cx="263" cy="113" r="2.4" fill="#7a6e70"/><circle cx="215" cy="135" r="2.6" fill="#7a6e70"/><circle cx="254" cy="156" r="1.8" fill="#4a3e48"/><circle cx="237" cy="67" r="2.1" fill="#3a3038"/><circle cx="252" cy="123" r="2.4" fill="#6e6068"/><circle cx="299" cy="99" r="2.6" fill="#4a3e48"/><circle cx="192" cy="101" r="2.3" fill="#4a3e48"/><circle cx="320" cy="78" r="1.9" fill="#3a3038"/><circle cx="223" cy="60" r="1.9" fill="#888078"/><circle cx="218" cy="163" r="2.5" fill="#7a6e70"/><circle cx="293" cy="86" r="2.3" fill="#3a3038"/><circle cx="321" cy="110" r="2.8" fill="#6e6068"/><circle cx="319" cy="77" r="1.7" fill="#6e6068"/><circle cx="195" cy="73" r="2.8" fill="#6e6068"/><circle cx="190" cy="45" r="1.9" fill="#4a3e48"/><circle cx="257" cy="109" r="2.0" fill="#7a6e70"/><circle cx="284" cy="143" r="2.6" fill="#888078"/><circle cx="202" cy="73" r="1.5" fill="#888078"/><circle cx="261" cy="57" r="1.9" fill="#6e6068"/><circle cx="323" cy="113" r="2.5" fill="#4a3e48"/><circle cx="217" cy="57" r="1.7" fill="#888078"/><circle cx="187" cy="121" r="2.7" fill="#3a3038"/><circle cx="297" cy="54" r="2.4" fill="#7a6e70"/><circle cx="216" cy="86" r="2.9" fill="#888078"/><circle cx="276" cy="35" r="2.6" fill="#3a3038"/><circle cx="292" cy="93" r="2.8" fill="#4a3e48"/><circle cx="215" cy="97" r="2.8" fill="#4a3e48"/><circle cx="310" cy="77" r="2.8" fill="#4a3e48"/><circle cx="211" cy="140" r="1.7" fill="#888078"/><circle cx="274" cy="60" r="2.4" fill="#6e6068"/><circle cx="218" cy="93" r="2.6" fill="#7a6e70"/><circle cx="296" cy="104" r="2.8" fill="#3a3038"/><circle cx="223" cy="133" r="2.2" fill="#6e6068"/><circle cx="273" cy="151" r="1.6" fill="#6e6068"/><circle cx="203" cy="35" r="2.3" fill="#7a6e70"/><circle cx="307" cy="49" r="2.6" fill="#4a3e48"/><circle cx="269" cy="52" r="2.4" fill="#4a3e48"/><circle cx="231" cy="36" r="2.3" fill="#888078"/><circle cx="191" cy="83" r="1.9" fill="#4a3e48"/><circle cx="212" cy="40" r="2.1" fill="#4a3e48"/><circle cx="293" cy="45" r="2.5" fill="#4a3e48"/><circle cx="306" cy="163" r="1.9" fill="#3a3038"/><circle cx="324" cy="89" r="3.0" fill="#888078"/><circle cx="213" cy="107" r="2.4" fill="#4a3e48"/><circle cx="323" cy="39" r="2.0" fill="#3a3038"/><circle cx="219" cy="101" r="2.7" fill="#7a6e70"/><circle cx="226" cy="146" r="1.9" fill="#6e6068"/><circle cx="211" cy="129" r="1.9" fill="#888078"/><circle cx="252" cy="147" r="2.3" fill="#6e6068"/><circle cx="285" cy="52" r="2.2" fill="#7a6e70"/><circle cx="269" cy="119" r="2.9" fill="#888078"/><circle cx="243" cy="105" r="1.6" fill="#6e6068"/><circle cx="235" cy="69" r="1.8" fill="#7a6e70"/><circle cx="286" cy="168" r="2.6" fill="#7a6e70"/><circle cx="200" cy="81" r="3.0" fill="#888078"/><circle cx="313" cy="163" r="2.9" fill="#7a6e70"/><circle cx="224" cy="152" r="2.3" fill="#3a3038"/><circle cx="255" cy="125" r="2.4" fill="#7a6e70"/><circle cx="308" cy="105" r="1.5" fill="#6e6068"/><circle cx="303" cy="107" r="2.7" fill="#7a6e70"/><circle cx="229" cy="133" r="2.5" fill="#3a3038"/><circle cx="316" cy="74" r="2.2" fill="#6e6068"/><circle cx="274" cy="70" r="1.7" fill="#6e6068"/><circle cx="223" cy="37" r="1.6" fill="#888078"/><circle cx="219" cy="167" r="2.2" fill="#4a3e48"/><circle cx="222" cy="88" r="2.6" fill="#3a3038"/><circle cx="191" cy="133" r="2.3" fill="#6e6068"/><circle cx="300" cy="86" r="1.6" fill="#3a3038"/><circle cx="324" cy="132" r="2.5" fill="#4a3e48"/><circle cx="265" cy="72" r="2.6" fill="#3a3038"/><circle cx="273" cy="152" r="1.8" fill="#4a3e48"/><circle cx="290" cy="76" r="2.3" fill="#7a6e70"/><circle cx="248" cy="126" r="2.7" fill="#6e6068"/><circle cx="204" cy="90" r="2.6" fill="#7a6e70"/><circle cx="321" cy="99" r="2.1" fill="#7a6e70"/><circle cx="258" cy="124" r="1.9" fill="#4a3e48"/><circle cx="320" cy="95" r="2.6" fill="#6e6068"/><circle cx="273" cy="156" r="2.0" fill="#7a6e70"/><circle cx="234" cy="93" r="2.7" fill="#888078"/><circle cx="212" cy="128" r="2.3" fill="#6e6068"/><circle cx="257" cy="87" r="2.5" fill="#888078"/><circle cx="260" cy="75" r="2.3" fill="#6e6068"/><circle cx="191" cy="168" r="2.2" fill="#3a3038"/><circle cx="226" cy="49" r="2.8" fill="#888078"/><circle cx="232" cy="79" r="2.2" fill="#7a6e70"/><circle cx="304" cy="61" r="2.7" fill="#7a6e70"/><circle cx="276" cy="66" r="2.0" fill="#7a6e70"/><circle cx="252" cy="159" r="1.5" fill="#888078"/><circle cx="210" cy="54" r="2.9" fill="#6e6068"/><circle cx="205" cy="106" r="3.0" fill="#7a6e70"/><circle cx="262" cy="162" r="2.8" fill="#3a3038"/><circle cx="323" cy="73" r="3.0" fill="#3a3038"/><circle cx="323" cy="56" r="2.0" fill="#6e6068"/><circle cx="232" cy="68" r="1.9" fill="#7a6e70"/><circle cx="243" cy="146" r="2.9" fill="#6e6068"/><circle cx="210" cy="111" r="2.0" fill="#4a3e48"/><circle cx="185" cy="101" r="2.2" fill="#7a6e70"/><circle cx="198" cy="36" r="2.8" fill="#7a6e70"/><circle cx="311" cy="125" r="2.4" fill="#888078"/><circle cx="274" cy="80" r="2.9" fill="#4a3e48"/><circle cx="313" cy="118" r="2.0" fill="#3a3038"/><circle cx="232" cy="133" r="1.5" fill="#3a3038"/><circle cx="209" cy="40" r="2.5" fill="#6e6068"/><circle cx="286" cy="40" r="2.8" fill="#4a3e48"/><circle cx="230" cy="92" r="2.9" fill="#3a3038"/><circle cx="294" cy="60" r="2.2" fill="#6e6068"/><circle cx="257" cy="169" r="2.8" fill="#6e6068"/><circle cx="192" cy="156" r="2.8" fill="#7a6e70"/><circle cx="312" cy="46" r="1.8" fill="#888078"/><circle cx="216" cy="120" r="2.6" fill="#4a3e48"/><circle cx="244" cy="51" r="2.5" fill="#888078"/><circle cx="226" cy="155" r="2.2" fill="#3a3038"/><circle cx="265" cy="126" r="2.2" fill="#3a3038"/><circle cx="279" cy="170" r="2.5" fill="#6e6068"/><circle cx="315" cy="122" r="1.6" fill="#7a6e70"/><circle cx="320" cy="54" r="1.6" fill="#4a3e48"/><circle cx="267" cy="121" r="2.9" fill="#3a3038"/><circle cx="253" cy="61" r="1.5" fill="#4a3e48"/><circle cx="265" cy="41" r="1.9" fill="#3a3038"/><circle cx="260" cy="68" r="2.2" fill="#6e6068"/><circle cx="213" cy="114" r="1.8" fill="#4a3e48"/><circle cx="244" cy="68" r="2.4" fill="#3a3038"/><circle cx="275" cy="97" r="2.8" fill="#7a6e70"/><circle cx="307" cy="95" r="1.6" fill="#7a6e70"/><circle cx="242" cy="121" r="1.9" fill="#7a6e70"/><circle cx="222" cy="103" r="2.6" fill="#4a3e48"/><circle cx="321" cy="83" r="1.7" fill="#3a3038"/><circle cx="315" cy="82" r="2.2" fill="#3a3038"/><circle cx="298" cy="46" r="2.9" fill="#888078"/><circle cx="262" cy="70" r="2.7" fill="#888078"/><circle cx="198" cy="49" r="2.7" fill="#888078"/><circle cx="195" cy="50" r="2.3" fill="#3a3038"/><circle cx="194" cy="160" r="1.7" fill="#4a3e48"/><circle cx="315" cy="138" r="2.4" fill="#3a3038"/><circle cx="242" cy="133" r="2.3" fill="#888078"/><circle cx="221" cy="162" r="2.9" fill="#3a3038"/><circle cx="310" cy="43" r="2.4" fill="#888078"/><circle cx="318" cy="70" r="3.0" fill="#3a3038"/><circle cx="198" cy="146" r="1.9" fill="#888078"/><circle cx="286" cy="96" r="1.5" fill="#3a3038"/><circle cx="194" cy="95" r="2.7" fill="#7a6e70"/><circle cx="252" cy="154" r="2.5" fill="#4a3e48"/><circle cx="270" cy="137" r="2.2" fill="#4a3e48"/><circle cx="219" cy="114" r="2.8" fill="#888078"/><circle cx="194" cy="98" r="1.6" fill="#888078"/><circle cx="229" cy="132" r="1.6" fill="#3a3038"/><circle cx="230" cy="40" r="1.8" fill="#888078"/><circle cx="211" cy="140" r="1.9" fill="#7a6e70"/><circle cx="185" cy="140" r="2.7" fill="#3a3038"/><circle cx="222" cy="135" r="1.5" fill="#4a3e48"/><circle cx="288" cy="50" r="2.5" fill="#3a3038"/><circle cx="233" cy="107" r="2.2" fill="#6e6068"/><circle cx="238" cy="68" r="2.9" fill="#7a6e70"/><circle cx="301" cy="44" r="2.3" fill="#4a3e48"/><circle cx="192" cy="155" r="2.1" fill="#4a3e48"/><circle cx="198" cy="117" r="2.6" fill="#888078"/><circle cx="271" cy="139" r="2.8" fill="#888078"/><circle cx="186" cy="81" r="2.1" fill="#3a3038"/><circle cx="318" cy="121" r="1.8" fill="#6e6068"/><circle cx="276" cy="84" r="2.6" fill="#7a6e70"/><circle cx="319" cy="71" r="2.7" fill="#6e6068"/><circle cx="274" cy="109" r="2.0" fill="#7a6e70"/><circle cx="279" cy="125" r="2.0" fill="#6e6068"/><circle cx="202" cy="43" r="2.1" fill="#3a3038"/></g><path d="M104 177l-5 -50" stroke="#98ae82" stroke-width="1.3" opacity="1.0"/><path d="M197 180l4 -30" stroke="#a8bc90" stroke-width="1.5" opacity="1.0"/><path d="M160 164l9 -55" stroke="#98ae82" stroke-width="1.5" opacity="1.0"/><path d="M181 179l2 -36" stroke="#a8bc90" stroke-width="1.8" opacity="1.0"/><path d="M193 172l-3 -47" stroke="#a8bc90" stroke-width="1.2" opacity="1.0"/><path d="M190 158l4 -46" stroke="#a8bc90" stroke-width="1.6" opacity="1.0"/><path d="M145 199l-4 -43" stroke="#a8bc90" stroke-width="1.7" opacity="1.0"/><path d="M155 141l-4 -42" stroke="#98ae82" stroke-width="1.4" opacity="1.0"/><path d="M159 157l1 -36" stroke="#a8bc90" stroke-width="1.7" opacity="1.0"/><path d="M144 184l-6 -58" stroke="#a8bc90" stroke-width="1.1" opacity="1.0"/><path d="M170 185l5 -31" stroke="#98ae82" stroke-width="1.2" opacity="1.0"/><path d="M116 176l5 -64" stroke="#a8bc90" stroke-width="1.0" opacity="1.0"/><path d="M116 185l1 -66" stroke="#a8bc90" stroke-width="1.4" opacity="1.0"/><path d="M153 164l-3 -47" stroke="#98ae82" stroke-width="1.2" opacity="1.0"/><path d="M140 185l4 -32" stroke="#a8bc90" stroke-width="1.0" opacity="1.0"/><path d="M103 192l1 -65" stroke="#a8bc90" stroke-width="1.6" opacity="1.0"/><path d="M164 157l3 -44" stroke="#98ae82" stroke-width="1.5" opacity="1.0"/><path d="M138 165l0 -44" stroke="#98ae82" stroke-width="1.2" opacity="1.0"/><path d="M168 140l4 -49" stroke="#98ae82" stroke-width="1.1" opacity="1.0"/><path d="M107 193l-4 -41" stroke="#a8bc90" stroke-width="1.0" opacity="1.0"/><path d="M164 196l5 -58" stroke="#98ae82" stroke-width="1.6" opacity="1.0"/><path d="M101 142l6 -60" stroke="#a8bc90" stroke-width="1.7" opacity="1.0"/><path d="M124 141l2 -32" stroke="#a8bc90" stroke-width="1.3" opacity="1.0"/><path d="M169 187l8 -50" stroke="#98ae82" stroke-width="1.8" opacity="1.0"/><path d="M196 198l1 -38" stroke="#a8bc90" stroke-width="1.1" opacity="1.0"/><path d="M162 175l9 -66" stroke="#98ae82" stroke-width="1.5" opacity="1.0"/><path d="M154 168l4 -48" stroke="#a8bc90" stroke-width="1.9" opacity="1.0"/><path d="M136 200l-2 -49" stroke="#a8bc90" stroke-width="2.0" opacity="1.0"/><path d="M114 157l-2 -44" stroke="#98ae82" stroke-width="1.2" opacity="1.0"/><path d="M191 151l-1 -65" stroke="#a8bc90" stroke-width="1.2" opacity="1.0"/><path d="M252 161l31 -60" stroke="#90a480" stroke-width="1.2" opacity="1.0"/><path d="M236 200l20 -35" stroke="#a0b490" stroke-width="1.8" opacity="1.0"/><path d="M238 196l16 -47" stroke="#a0b490" stroke-width="1.8" opacity="1.0"/><path d="M241 185l15 -29" stroke="#90a480" stroke-width="1.3" opacity="1.0"/><path d="M217 166l18 -51" stroke="#90a480" stroke-width="1.8" opacity="1.0"/><path d="M282 158l14 -32" stroke="#90a480" stroke-width="1.0" opacity="1.0"/><path d="M275 186l16 -47" stroke="#a0b490" stroke-width="1.6" opacity="1.0"/><path d="M260 168l16 -38" stroke="#90a480" stroke-width="1.5" opacity="1.0"/><path d="M218 162l15 -30" stroke="#90a480" stroke-width="1.5" opacity="1.0"/><path d="M227 187l24 -53" stroke="#90a480" stroke-width="1.8" opacity="1.0"/><path d="M263 153l12 -37" stroke="#a0b490" stroke-width="1.1" opacity="1.0"/><path d="M219 154l26 -42" stroke="#a0b490" stroke-width="1.7" opacity="1.0"/><path d="M274 202l19 -47" stroke="#a0b490" stroke-width="2.0" opacity="1.0"/><path d="M288 157l13 -36" stroke="#a0b490" stroke-width="1.4" opacity="1.0"/><path d="M267 190l16 -35" stroke="#90a480" stroke-width="1.8" opacity="1.0"/><path d="M204 180l22 -39" stroke="#a0b490" stroke-width="1.4" opacity="1.0"/><path d="M274 155l32 -59" stroke="#a0b490" stroke-width="1.6" opacity="1.0"/><path d="M265 171l31 -54" stroke="#90a480" stroke-width="1.3" opacity="1.0"/><path d="M252 184l16 -42" stroke="#90a480" stroke-width="1.8" opacity="1.0"/><path d="M281 170l22 -66" stroke="#90a480" stroke-width="1.1" opacity="1.0"/><path d="M235 163l24 -42" stroke="#90a480" stroke-width="2.0" opacity="1.0"/><path d="M271 179l13 -40" stroke="#a0b490" stroke-width="1.1" opacity="1.0"/><path d="M279 174l18 -55" stroke="#90a480" stroke-width="1.5" opacity="1.0"/><path d="M275 169l13 -38" stroke="#90a480" stroke-width="1.1" opacity="1.0"/><path d="M237 167l29 -47" stroke="#a0b490" stroke-width="1.8" opacity="1.0"/><path d="M250 169l29 -49" stroke="#a0b490" stroke-width="1.0" opacity="1.0"/><path d="M286 159l18 -54" stroke="#a0b490" stroke-width="1.5" opacity="1.0"/><path d="M281 161l14 -36" stroke="#90a480" stroke-width="1.8" opacity="1.0"/><path d="M202 200l27 -57" stroke="#90a480" stroke-width="1.5" opacity="1.0"/><path d="M277 160l24 -48" stroke="#90a480" stroke-width="1.8" opacity="1.0"/><rect x="0" y="193" width="324" height="10" fill="#4a4d50" opacity=".5"/></g></g><rect width="324" height="2" fill="#fff"/></svg>
<div class="a" style="left:317px;top:491.5px;width:578px;font-family:'Liberation Serif',serif;font-size:20.6px;line-height:24px;color:#111;white-space:nowrap;text-align:justify;text-align-last:justify;white-space:normal"><b>Суцільний метод</b> більше підходить для підрахунку густоти</div>
<div class="a" style="left:276px;top:518.3px;width:619px;font-family:'Liberation Serif',serif;font-size:20.6px;line-height:24px;color:#111;white-space:nowrap;text-align:justify;text-align-last:justify;white-space:normal">стояння рослин ботанічних таксонів з широкорядним посівом. Це</div>
<div class="a" style="left:276px;top:545.8px;font-family:'Liberation Serif',serif;font-size:20.6px;line-height:24px;color:#111;white-space:nowrap">можуть бути: кукурудза, соняшник, буряк та інші.</div>
<div class="a" style="left:317px;top:579.6px;font-family:'Liberation Serif',serif;font-size:20.6px;line-height:24px;color:#111;white-space:nowrap"><b>Вибірковий метод</b> рекомендовано застосовувати для підрахунку</div>
<div class="a" style="left:276px;top:607.2px;font-family:'Liberation Serif',serif;font-size:20.6px;line-height:24px;color:#111;white-space:nowrap">густоти стояння рослин ботанічних таксонів з вузькорядним посівом.</div>
<div class="a" style="left:276px;top:634.7px;font-family:'Liberation Serif',serif;font-size:20.6px;line-height:24px;color:#111;white-space:nowrap">А саме, озимі і ярі зернові, круп’яні, трави тощо.</div>
<div class="a" style="left:591px;top:835px;width:354px;height:28px;background:#fafafa;box-shadow:0 1px 3px rgba(0,0,0,.25)"></div>
<div class="a" style="left:598px;top:844px;width:1px;height:9px;border-left:1px solid #aaa;border-right:1px solid #aaa;width:3px"></div>
<div class="a" style="left:606px;top:842px;font-size:6.9px;line-height:14px;color:#333;white-space:nowrap">Приложению meet.google.com предоставлен доступ к вашему экрану.</div>
<div class="a" style="left:836px;top:838px;width:74px;height:22px;border-radius:11px;background:#0b57d0;color:#fff;font-size:6.9px;font-weight:bold;line-height:22px;text-align:center">Закрыть доступ</div>
<div class="a" style="left:916px;top:842px;font-size:6.7px;line-height:14px;color:#0b57d0;text-decoration:underline">Скрыть</div>
<svg style="left:771px;top:692px" width="9" height="14" viewBox="0 0 9 14"><path d="M.5 .5v11l3-2.5 2 4 1.5-.7-2-4H8.5z" fill="#fff" stroke="#111" stroke-width=".8"/></svg>
<div class="tile" style="left:1135px;top:194px;width:191px;background:#3c4043;"><svg style="left:67px;top:31px" width="57" height="57" viewBox="0 0 57 57"><defs><clipPath id="cav1"><circle cx="28.5" cy="28.5" r="28.5"/></clipPath><filter id="fav1"><feGaussianBlur stdDeviation="1.2"/></filter></defs><g clip-path="url(#cav1)"><g filter="url(#fav1)"><rect width="57" height="57" fill="#c8dcea"/>
<rect y="24" width="57" height="33" fill="#8ab860"/>
<ellipse cx="12" cy="27" rx="12" ry="4" fill="#5a8a40"/>
<ellipse cx="50" cy="16" rx="14" ry="14" fill="#3f7a35"/>
<path d="M38 30l19-4v22l-19 0z" fill="#b8b070"/>
<path d="M0 40h20v17H0z" fill="#7aa850"/>
<ellipse cx="27" cy="36" rx="13" ry="12" fill="#b88878"/>
<path d="M13 24c0-14 27-18 28-2l1 6H13z" fill="#eef2f6"/>
<path d="M14 18c3-6 8-8 12-8l-2 14h-10z" fill="#5a80b0"/>
<path d="M22 38c-2 3-2 6 0 8M32 38c2 3 2 6 0 8M22 38h10" stroke="#e8e8e0" stroke-width="2.5" fill="none"/>
<path d="M7 57c2-8 10-13 20-13s19 5 23 13z" fill="#7a7e86"/>
<path d="M7 57c2-8 10-13 20-13v13z" fill="#1f2a48"/></g></g></svg><div class="mute"></div><svg style="left:157px;top:16px" width="18" height="18" viewBox="0 0 24 24"><path d="M19 11h-1.7c0 .74-.16 1.43-.43 2.05l1.23 1.23c.56-.98.9-2.09.9-3.28zm-4.02.17c0-.06.02-.11.02-.17V5c0-1.66-1.34-3-3-3S9 3.34 9 5v.18l5.98 5.99zM4.27 3L3 4.27l6.01 6.01V11c0 1.66 1.33 3 2.99 3 .22 0 .44-.03.65-.08l1.66 1.66c-.71.33-1.5.52-2.31.52-2.76 0-5.3-2.1-5.3-5.1H5c0 3.41 2.72 6.23 6 6.72V21h2v-3.28c.91-.13 1.77-.45 2.54-.9L19.73 21 21 19.73 4.27 3z" fill="#fff"/></svg><div class="tname">Григорий Половенко</div></div>
<div class="tile" style="left:1338px;top:194px;width:190px;background:#3c4043;"><div class="av" style="background:#33691e">Г</div><div class="mute"></div><svg style="left:157px;top:16px" width="18" height="18" viewBox="0 0 24 24"><path d="M19 11h-1.7c0 .74-.16 1.43-.43 2.05l1.23 1.23c.56-.98.9-2.09.9-3.28zm-4.02.17c0-.06.02-.11.02-.17V5c0-1.66-1.34-3-3-3S9 3.34 9 5v.18l5.98 5.99zM4.27 3L3 4.27l6.01 6.01V11c0 1.66 1.33 3 2.99 3 .22 0 .44-.03.65-.08l1.66 1.66c-.71.33-1.5.52-2.31.52-2.76 0-5.3-2.1-5.3-5.1H5c0 3.41 2.72 6.23 6 6.72V21h2v-3.28c.91-.13 1.77-.45 2.54-.9L19.73 21 21 19.73 4.27 3z" fill="#fff"/></svg><div class="tname">гринів світлана</div></div>
<div class="tile" style="left:1135px;top:323px;width:191px;background:#3c4043;"><div class="av" style="background:#78909c">Н</div><div class="mute"></div><svg style="left:157px;top:16px" width="18" height="18" viewBox="0 0 24 24"><path d="M19 11h-1.7c0 .74-.16 1.43-.43 2.05l1.23 1.23c.56-.98.9-2.09.9-3.28zm-4.02.17c0-.06.02-.11.02-.17V5c0-1.66-1.34-3-3-3S9 3.34 9 5v.18l5.98 5.99zM4.27 3L3 4.27l6.01 6.01V11c0 1.66 1.33 3 2.99 3 .22 0 .44-.03.65-.08l1.66 1.66c-.71.33-1.5.52-2.31.52-2.76 0-5.3-2.1-5.3-5.1H5c0 3.41 2.72 6.23 6 6.72V21h2v-3.28c.91-.13 1.77-.45 2.54-.9L19.73 21 21 19.73 4.27 3z" fill="#fff"/></svg><div class="tname">Николай Жук</div></div>
<div class="tile" style="left:1338px;top:323px;width:190px;background:#cfd3cc"><svg style="left:0;top:0" width="190" height="118" viewBox="0 0 190 118"><defs><filter id="vb1"><feGaussianBlur stdDeviation="1.2"/></filter></defs><g filter="url(#vb1)">
<rect width="190" height="118" fill="#dfe6e4"/>
<rect x="30" y="0" width="72" height="118" fill="#e8efee"/>
<rect x="33" y="7" width="46" height="22" fill="#f4f6f8"/><rect x="36" y="29" width="46" height="25" fill="#eef0f4"/><rect x="40" y="54" width="40" height="8" fill="#d8dce0"/>
<g fill="#6a7a9a" opacity=".6"><rect x="40" y="12" width="30" height="2"/><rect x="40" y="17" width="30" height="2"/><rect x="40" y="21" width="30" height="2"/><rect x="42" y="40" width="30" height="2"/><rect x="42" y="45" width="30" height="2"/></g>
<rect x="99" y="4" width="30" height="114" fill="#b27a42"/>
<rect x="103" y="4" width="20" height="25" fill="#3a4a30"/>
<rect x="123" y="4" width="67" height="40" fill="#d8d8d0"/>
<rect x="124" y="4" width="10" height="40" fill="#48a0dc"/><rect x="134" y="4" width="9" height="36" fill="#e8d048"/><rect x="143" y="4" width="7" height="30" fill="#2a5ab0"/><rect x="150" y="4" width="12" height="40" fill="#1f5a48"/><rect x="162" y="4" width="8" height="40" fill="#f0f4f4"/><rect x="170" y="4" width="10" height="40" fill="#2a8a70"/><rect x="180" y="44" width="10" height="45" fill="#e8c838"/>
<path d="M4 25c12-3 25 5 30 20l1 20c-8-10-20-15-31-12z" fill="#a85a3a"/>
<ellipse cx="18" cy="65" rx="14" ry="24" fill="#e0b4a4"/>
<path d="M8 55h26" stroke="#555" stroke-width="1.5"/>
<path d="M4 96c10-5 35-5 50 10v12H4z" fill="#4a7a78"/>
<path d="M130 60c0-22 10-30 27-30s25 10 27 30l2 58h-12c-2-20-4-40-5-60h-28c-1 20-3 40-5 60h-8z" fill="#4a3e34"/>
<ellipse cx="157" cy="67" rx="19" ry="23" fill="#dcb4a0"/>
<path d="M112 118c5-14 22-17 45-17s30 4 33 17z" fill="#d8d4c8"/>
<rect x="75" y="108" width="10" height="8" rx="3" fill="#e0b8a0"/>
</g></svg><div class="a" style="left:152px;top:12px;width:26px;height:26px;border-radius:13px;background:#1a73e8"></div><svg style="left:157px;top:18px" width="16" height="14" viewBox="0 0 16 14"><rect x="1" y="4" width="3" height="6" rx="1.5" fill="#fff"/><rect x="6.5" y="1" width="3" height="12" rx="1.5" fill="#fff"/><rect x="12" y="4" width="3" height="6" rx="1.5" fill="#fff"/></svg><div class="tname" style="left:16px;text-shadow:0 0 2px rgba(0,0,0,.5)">Тетяна Сонець</div><div class="a" style="left:0;top:0;width:190px;height:117px;border:4px solid #6ca0f6;border-radius:9px"></div></div>
<div class="tile" style="left:1135px;top:453px;width:191px;background:#3c4043;"><svg style="left:67px;top:31px" width="57" height="57" viewBox="0 0 57 57"><defs><clipPath id="cav2"><circle cx="28.5" cy="28.5" r="28.5"/></clipPath><filter id="fav2"><feGaussianBlur stdDeviation="0.6"/></filter></defs><g clip-path="url(#cav2)"><g filter="url(#fav2)"><rect width="57" height="57" fill="#7aa6e0"/><ellipse cx="28" cy="8" rx="3.2" ry="10" transform="rotate(0 27 27)" fill="#f8d010"/><ellipse cx="28" cy="8" rx="3.2" ry="10" transform="rotate(20 27 27)" fill="#f0c000"/><ellipse cx="28" cy="8" rx="3.2" ry="10" transform="rotate(40 27 27)" fill="#fde040"/><ellipse cx="28" cy="8" rx="3.2" ry="10" transform="rotate(60 27 27)" fill="#f8d010"/><ellipse cx="28" cy="8" rx="3.2" ry="10" transform="rotate(80 27 27)" fill="#f0c000"/><ellipse cx="28" cy="8" rx="3.2" ry="10" transform="rotate(100 27 27)" fill="#fde040"/><ellipse cx="28" cy="8" rx="3.2" ry="10" transform="rotate(120 27 27)" fill="#f8d010"/><ellipse cx="28" cy="8" rx="3.2" ry="10" transform="rotate(140 27 27)" fill="#f0c000"/><ellipse cx="28" cy="8" rx="3.2" ry="10" transform="rotate(160 27 27)" fill="#fde040"/><ellipse cx="28" cy="8" rx="3.2" ry="10" transform="rotate(180 27 27)" fill="#f8d010"/><ellipse cx="28" cy="8" rx="3.2" ry="10" transform="rotate(200 27 27)" fill="#f0c000"/><ellipse cx="28" cy="8" rx="3.2" ry="10" transform="rotate(220 27 27)" fill="#fde040"/><ellipse cx="28" cy="8" rx="3.2" ry="10" transform="rotate(240 27 27)" fill="#f8d010"/><ellipse cx="28" cy="8" rx="3.2" ry="10" transform="rotate(260 27 27)" fill="#f0c000"/><ellipse cx="28" cy="8" rx="3.2" ry="10" transform="rotate(280 27 27)" fill="#fde040"/><ellipse cx="28" cy="8" rx="3.2" ry="10" transform="rotate(300 27 27)" fill="#f8d010"/><ellipse cx="28" cy="8" rx="3.2" ry="10" transform="rotate(320 27 27)" fill="#f0c000"/><ellipse cx="28" cy="8" rx="3.2" ry="10" transform="rotate(340 27 27)" fill="#fde040"/><circle cx="27" cy="27" r="17" fill="#c89a18"/><circle cx="26" cy="26" r="12" fill="#b08418"/><circle cx="25" cy="25" r="6" fill="#9a7410"/></g></g></svg><div class="mute"></div><svg style="left:157px;top:16px" width="18" height="18" viewBox="0 0 24 24"><path d="M19 11h-1.7c0 .74-.16 1.43-.43 2.05l1.23 1.23c.56-.98.9-2.09.9-3.28zm-4.02.17c0-.06.02-.11.02-.17V5c0-1.66-1.34-3-3-3S9 3.34 9 5v.18l5.98 5.99zM4.27 3L3 4.27l6.01 6.01V11c0 1.66 1.33 3 2.99 3 .22 0 .44-.03.65-.08l1.66 1.66c-.71.33-1.5.52-2.31.52-2.76 0-5.3-2.1-5.3-5.1H5c0 3.41 2.72 6.23 6 6.72V21h2v-3.28c.91-.13 1.77-.45 2.54-.9L19.73 21 21 19.73 4.27 3z" fill="#fff"/></svg><div class="tname">Аліна Носуля</div></div>
<div class="tile" style="left:1338px;top:453px;width:190px;background:#9a9890;"><svg style="left:0;top:0" width="190" height="118" viewBox="0 0 190 118"><defs><filter id="vb2"><feGaussianBlur stdDeviation="1.2"/></filter></defs><g filter="url(#vb2)">
<rect width="190" height="118" fill="#c8c4b0"/>
<path d="M0 0h190v40c-60-15-120-15-190 0z" fill="#e6e8ea"/>
<path d="M0 24c40-6 80-5 120 10v45H0z" fill="#e6dcae"/>
<path d="M120 30c30 5 50 10 70 20v70h-70z" fill="#cfd2d0"/>
<rect x="63" y="31" width="9" height="15" fill="#a07030"/>
<rect x="60" y="72" width="66" height="26" fill="#8a6a48"/><rect x="62" y="70" width="60" height="5" fill="#e8e8e8"/>
<rect x="54" y="96" width="72" height="22" fill="#e4e4e4"/>
<rect x="72" y="50" width="8" height="25" fill="#3a3a3a"/>
<ellipse cx="48" cy="47" rx="6" ry="7" fill="#c89880"/><path d="M34 58c6-5 22-5 28 2v30H34z" fill="#8a2a30"/>
<ellipse cx="26" cy="61" rx="7" ry="9" fill="#dcb098"/><path d="M19 57h14" stroke="#333" stroke-width="1.5"/>
<path d="M10 75c5-6 30-6 36 0l2 43H8z" fill="#d52838"/>
<path d="M0 70h12v40H0z" fill="#e0e0e0"/>
<ellipse cx="125" cy="33" rx="7" ry="8" fill="#c8a090"/><path d="M112 40c5-5 24-5 28 3l2 45h-30z" fill="#222226"/>
<path d="M116 88h20v12h-20z" fill="#3a5080"/>
<path d="M150 55c5-15 25-15 30 0l4 35h-34z" fill="#a88050"/>
<ellipse cx="160" cy="64" rx="8" ry="11" fill="#d8b098"/>
<path d="M135 80c10-8 40-8 50 0v38h-50z" fill="#262c48"/>
<ellipse cx="177" cy="35" rx="7" ry="8" fill="#c8a888"/><path d="M168 42h22v35h-22z" fill="#c8c4c0"/>
<path d="M120 118c10-6 40-8 60-5v5z" fill="#4a70b0"/>
<rect x="178" y="85" width="12" height="33" fill="#6aa050"/>
</g></svg><div class="a" style="left:31px;top:37px;width:125px;height:44px;border-radius:22px;background:rgba(70,70,60,.6)"></div><svg style="left:43px;top:49px" width="18" height="24" viewBox="0 0 18 24"><path d="M4 2h10M6 2v9l-3 3h12l-3-3V2M9 14v8" stroke="#f8c8d0" stroke-width="2" fill="none"/></svg><svg style="left:83px;top:48px" width="22" height="24" viewBox="0 0 22 24"><rect x="8" y="2" width="6" height="11" rx="3" fill="none" stroke="#ddd" stroke-width="1.8"/><path d="M4 10a7 7 0 0 0 14 0M11 17v5M3 2l16 20" stroke="#ddd" stroke-width="1.8" fill="none"/></svg><svg style="left:136px;top:50px" width="8" height="24" viewBox="0 0 8 24"><circle cx="4" cy="4" r="2.3" fill="#eee"/><circle cx="4" cy="12" r="2.3" fill="#eee"/><circle cx="4" cy="20" r="2.3" fill="#eee"/></svg><div class="mute" style="background:rgba(45,46,49,.6)"></div><svg style="left:157px;top:16px" width="18" height="18" viewBox="0 0 24 24"><path d="M19 11h-1.7c0 .74-.16 1.43-.43 2.05l1.23 1.23c.56-.98.9-2.09.9-3.28zm-4.02.17c0-.06.02-.11.02-.17V5c0-1.66-1.34-3-3-3S9 3.34 9 5v.18l5.98 5.99zM4.27 3L3 4.27l6.01 6.01V11c0 1.66 1.33 3 2.99 3 .22 0 .44-.03.65-.08l1.66 1.66c-.71.33-1.5.52-2.31.52-2.76 0-5.3-2.1-5.3-5.1H5c0 3.41 2.72 6.23 6 6.72V21h2v-3.28c.91-.13 1.77-.45 2.54-.9L19.73 21 21 19.73 4.27 3z" fill="#fff"/></svg><div class="tname" style="text-shadow:0 0 2px rgba(0,0,0,.6)">Дніпропетровська Фі...</div></div>
<div class="tile" style="left:1135px;top:583px;width:191px;background:#3c4043;"><div class="av" style="background:#689f38">С</div><div class="mute"></div><svg style="left:157px;top:16px" width="18" height="18" viewBox="0 0 24 24"><path d="M19 11h-1.7c0 .74-.16 1.43-.43 2.05l1.23 1.23c.56-.98.9-2.09.9-3.28zm-4.02.17c0-.06.02-.11.02-.17V5c0-1.66-1.34-3-3-3S9 3.34 9 5v.18l5.98 5.99zM4.27 3L3 4.27l6.01 6.01V11c0 1.66 1.33 3 2.99 3 .22 0 .44-.03.65-.08l1.66 1.66c-.71.33-1.5.52-2.31.52-2.76 0-5.3-2.1-5.3-5.1H5c0 3.41 2.72 6.23 6 6.72V21h2v-3.28c.91-.13 1.77-.45 2.54-.9L19.73 21 21 19.73 4.27 3z" fill="#fff"/></svg><div class="tname">Сумська Філія</div></div>
<div class="tile" style="left:1338px;top:583px;width:190px;background:#3c4043;"><div class="av" style="background:#ec407a">Л</div><div class="mute"></div><svg style="left:157px;top:16px" width="18" height="18" viewBox="0 0 24 24"><path d="M19 11h-1.7c0 .74-.16 1.43-.43 2.05l1.23 1.23c.56-.98.9-2.09.9-3.28zm-4.02.17c0-.06.02-.11.02-.17V5c0-1.66-1.34-3-3-3S9 3.34 9 5v.18l5.98 5.99zM4.27 3L3 4.27l6.01 6.01V11c0 1.66 1.33 3 2.99 3 .22 0 .44-.03.65-.08l1.66 1.66c-.71.33-1.5.52-2.31.52-2.76 0-5.3-2.1-5.3-5.1H5c0 3.41 2.72 6.23 6 6.72V21h2v-3.28c.91-.13 1.77-.45 2.54-.9L19.73 21 21 19.73 4.27 3z" fill="#fff"/></svg><div class="tname">Лідія Притула</div></div>
<div class="tile" style="left:1135px;top:713px;width:191px;background:#3c4043;"><svg style="left:67px;top:31px" width="57" height="57" viewBox="0 0 57 57"><defs><clipPath id="cav3"><circle cx="28.5" cy="28.5" r="28.5"/></clipPath><filter id="fav3"><feGaussianBlur stdDeviation="0.8"/></filter></defs><g clip-path="url(#cav3)"><g filter="url(#fav3)"><rect width="57" height="57" fill="#6a8a3a"/>
<rect x="0" y="0" width="12" height="57" fill="#c8b050"/><rect x="0" y="30" width="12" height="27" fill="#b08a40"/>
<rect x="12" y="0" width="12" height="30" fill="#5d8a3a"/><rect x="12" y="30" width="12" height="27" fill="#c89040"/>
<rect x="24" y="0" width="10" height="28" fill="#e8c020"/><rect x="24" y="28" width="10" height="29" fill="#3a3a40"/>
<rect x="34" y="0" width="11" height="30" fill="#4a8a30"/><rect x="34" y="30" width="11" height="27" fill="#8ab050"/>
<rect x="45" y="0" width="12" height="30" fill="#6a9a40"/><rect x="45" y="30" width="12" height="27" fill="#a83a3a"/></g></g></svg><div class="mute"></div><svg style="left:157px;top:16px" width="18" height="18" viewBox="0 0 24 24"><path d="M19 11h-1.7c0 .74-.16 1.43-.43 2.05l1.23 1.23c.56-.98.9-2.09.9-3.28zm-4.02.17c0-.06.02-.11.02-.17V5c0-1.66-1.34-3-3-3S9 3.34 9 5v.18l5.98 5.99zM4.27 3L3 4.27l6.01 6.01V11c0 1.66 1.33 3 2.99 3 .22 0 .44-.03.65-.08l1.66 1.66c-.71.33-1.5.52-2.31.52-2.76 0-5.3-2.1-5.3-5.1H5c0 3.41 2.72 6.23 6 6.72V21h2v-3.28c.91-.13 1.77-.45 2.54-.9L19.73 21 21 19.73 4.27 3z" fill="#fff"/></svg><div class="tname">Владимир Болотов</div></div>
<div class="tile" style="left:1338px;top:713px;width:190px;background:#3c4043;"><svg style="left:67px;top:31px" width="57" height="57" viewBox="0 0 57 57"><defs><clipPath id="cav4"><circle cx="28.5" cy="28.5" r="28.5"/></clipPath><filter id="fav4"><feGaussianBlur stdDeviation="1.2"/></filter></defs><g clip-path="url(#cav4)"><g filter="url(#fav4)"><rect width="57" height="57" fill="#f0e4bc"/><circle cx="30" cy="28" r="26" fill="#f8f0d4"/>
<ellipse cx="30" cy="31" rx="14" ry="18" fill="#d0a088"/>
<ellipse cx="16" cy="30" rx="2.5" ry="4" fill="#c89080"/><ellipse cx="44" cy="30" rx="2.5" ry="4" fill="#c89080"/>
<path d="M15 26c-2-14 8-20 16-20s16 5 14 20c-2-6-5-10-14-10s-13 4-16 10z" fill="#5a3a28"/>
<path d="M23 30h5M33 30h5" stroke="#6a4a3a" stroke-width="1.3"/>
<path d="M26 41c3 1 6 1 9 0" stroke="#a06a5a" stroke-width="1.2" fill="none"/>
<path d="M10 57c3-7 10-10 20-10s17 3 20 10z" fill="#f4f4f0"/><path d="M12 57c2-5 6-8 10-9l4 9zM48 57c-2-5-6-8-10-9l-4 9z" fill="#2a2a30"/></g></g></svg><div class="mute"></div><svg style="left:157px;top:16px" width="18" height="18" viewBox="0 0 24 24"><path d="M19 11h-1.7c0 .74-.16 1.43-.43 2.05l1.23 1.23c.56-.98.9-2.09.9-3.28zm-4.02.17c0-.06.02-.11.02-.17V5c0-1.66-1.34-3-3-3S9 3.34 9 5v.18l5.98 5.99zM4.27 3L3 4.27l6.01 6.01V11c0 1.66 1.33 3 2.99 3 .22 0 .44-.03.65-.08l1.66 1.66c-.71.33-1.5.52-2.31.52-2.76 0-5.3-2.1-5.3-5.1H5c0 3.41 2.72 6.23 6 6.72V21h2v-3.28c.91-.13 1.77-.45 2.54-.9L19.73 21 21 19.73 4.27 3z" fill="#fff"/></svg><div class="tname">Євгеній Стариченко</div></div>
<div class="tile" style="left:1135px;top:843px"><svg style="left:61px;top:25px" width="36" height="36" viewBox="0 0 57 57"><defs><clipPath id="cav7"><circle cx="28.5" cy="28.5" r="28.5"/></clipPath><filter id="fav7"><feGaussianBlur stdDeviation="0.8"/></filter></defs><g clip-path="url(#cav7)"><g filter="url(#fav7)"><rect width="57" height="57" fill="#6aa8e8"/><ellipse cx="20" cy="20" rx="14" ry="8" fill="#fff"/><ellipse cx="42" cy="14" rx="10" ry="6" fill="#eef"/>
<rect y="32" width="57" height="25" fill="#3a7a20"/><g fill="#f5c810"><circle cx="10" cy="38" r="6"/><circle cx="25" cy="40" r="7"/><circle cx="42" cy="38" r="6"/><circle cx="16" cy="50" r="6"/><circle cx="36" cy="51" r="6"/><circle cx="52" cy="50" r="5"/></g></g></g></svg><div class="a" style="left:94px;top:22px;width:42px;height:42px;border-radius:21px;background:#3c4043"></div><svg style="left:96px;top:24px" width="38" height="38" viewBox="0 0 57 57"><defs><clipPath id="cav8"><circle cx="28.5" cy="28.5" r="28.5"/></clipPath><filter id="fav8"><feGaussianBlur stdDeviation="1.2"/></filter></defs><g clip-path="url(#cav8)"><g filter="url(#fav8)"><rect width="57" height="57" fill="#c8d8e0"/><rect y="22" width="57" height="35" fill="#6a9a40"/><rect y="22" width="57" height="4" fill="#8aa070"/>
<path d="M0 40l57-6M0 48l57-8" stroke="#5a8a30" stroke-width="2"/></g></g></svg><div class="tname" style="left:0;width:191px;text-align:center;top:78px">Ще 79 осіб</div></div>
<div class="tile" style="left:1338px;top:843px;width:190px;background:#3c4043;"><svg style="left:67px;top:31px" width="57" height="57" viewBox="0 0 57 57"><defs><clipPath id="cav9"><circle cx="28.5" cy="28.5" r="28.5"/></clipPath><filter id="fav9"><feGaussianBlur stdDeviation="1.2"/></filter></defs><g clip-path="url(#cav9)"><g filter="url(#fav9)"><rect width="57" height="57" fill="#8a9aa0"/><rect width="57" height="20" fill="#b8c8d0"/>
<rect x="0" y="20" width="57" height="15" fill="#d8dde0"/>
<ellipse cx="15" cy="30" rx="15" ry="14" fill="#4a7a3a"/>
<g fill="#e89020"><circle cx="10" cy="28" r="3"/><circle cx="16" cy="25" r="3"/><circle cx="20" cy="32" r="3"/><circle cx="12" cy="35" r="2.5"/></g>
<ellipse cx="38" cy="22" rx="9" ry="10" fill="#e0c080"/><ellipse cx="38" cy="24" rx="6" ry="7" fill="#d8a890"/>
<path d="M22 57c2-15 8-22 16-22s15 7 17 22z" fill="#8a8f94"/></g></g></svg><div class="mute"></div><svg style="left:157px;top:16px" width="18" height="18" viewBox="0 0 24 24"><path d="M19 11h-1.7c0 .74-.16 1.43-.43 2.05l1.23 1.23c.56-.98.9-2.09.9-3.28zm-4.02.17c0-.06.02-.11.02-.17V5c0-1.66-1.34-3-3-3S9 3.34 9 5v.18l5.98 5.99zM4.27 3L3 4.27l6.01 6.01V11c0 1.66 1.33 3 2.99 3 .22 0 .44-.03.65-.08l1.66 1.66c-.71.33-1.5.52-2.31.52-2.76 0-5.3-2.1-5.3-5.1H5c0 3.41 2.72 6.23 6 6.72V21h2v-3.28c.91-.13 1.77-.45 2.54-.9L19.73 21 21 19.73 4.27 3z" fill="#fff"/></svg><div class="tname">Тетяна Хоменко</div></div>
<div class="a" style="left:1544px;top:137px;width:360px;height:823px;border-radius:16px;background:#fff"></div>
<div class="a" style="left:1569px;top:158px;font-size:18.4px;line-height:24px;color:#1f1f1f">Люди</div>
<svg style="left:1862px;top:161px" width="18" height="18" viewBox="0 0 18 18"><path d="M2 2l14 14M16 2L2 16" stroke="#1f1f1f" stroke-width="2.2"/></svg>
<div class="a" style="left:1555px;top:202px;width:331px;height:758px;border-left:1px solid #dadce0;border-right:1px solid #dadce0;overflow:hidden">
<div class="a" style="left:20px;top:-25px;width:32px;height:32px;border-radius:16px;background:#33691e;color:#fff;font-size:17px;line-height:32px;text-align:center"></div>
<svg style="left:239px;top:-21px" width="24" height="24" viewBox="0 0 24 24"><g stroke="#444746" stroke-width="1.9" fill="none"><path d="M10 7V5a3 3 0 0 1 6 0v6.5"/><path d="M6.5 11a6.5 6.5 0 0 0 9.8 5.6"/><path d="M19.5 11.2c0 1-.2 2-.7 3"/><path d="M13 18.2v3"/><path d="M4.5 4.2L19.8 20.2"/></g></svg>
<svg style="left:297px;top:-18px" width="6" height="18" viewBox="0 0 6 18"><circle cx="3" cy="3" r="2" fill="#444746"/><circle cx="3" cy="9" r="2" fill="#444746"/><circle cx="3" cy="15" r="2" fill="#444746"/></svg>
<div class="a" style="left:20px;top:31px;width:32px;height:32px;border-radius:16px;background:#33691e;color:#fff;font-size:17px;line-height:32px;text-align:center">Д</div>
<div class="a" style="left:68px;top:38px;font-size:14.2px;line-height:18px;color:#1f1f1f;white-space:nowrap">Діма Смілик</div>
<svg style="left:239px;top:35px" width="24" height="24" viewBox="0 0 24 24"><g stroke="#444746" stroke-width="1.9" fill="none"><path d="M10 7V5a3 3 0 0 1 6 0v6.5"/><path d="M6.5 11a6.5 6.5 0 0 0 9.8 5.6"/><path d="M19.5 11.2c0 1-.2 2-.7 3"/><path d="M13 18.2v3"/><path d="M4.5 4.2L19.8 20.2"/></g></svg>
<svg style="left:297px;top:38px" width="6" height="18" viewBox="0 0 6 18"><circle cx="3" cy="3" r="2" fill="#444746"/><circle cx="3" cy="9" r="2" fill="#444746"/><circle cx="3" cy="15" r="2" fill="#444746"/></svg>
<div class="a" style="left:20px;top:87px;width:32px;height:32px;border-radius:16px;background:#004d40;color:#fff;font-size:17px;line-height:32px;text-align:center">Д</div>
<div class="a" style="left:68px;top:94px;font-size:14.2px;line-height:18px;color:#1f1f1f;white-space:nowrap">Дмитро</div>
<svg style="left:239px;top:91px" width="24" height="24" viewBox="0 0 24 24"><g stroke="#444746" stroke-width="1.9" fill="none"><path d="M10 7V5a3 3 0 0 1 6 0v6.5"/><path d="M6.5 11a6.5 6.5 0 0 0 9.8 5.6"/><path d="M19.5 11.2c0 1-.2 2-.7 3"/><path d="M13 18.2v3"/><path d="M4.5 4.2L19.8 20.2"/></g></svg>
<svg style="left:297px;top:94px" width="6" height="18" viewBox="0 0 6 18"><circle cx="3" cy="3" r="2" fill="#444746"/><circle cx="3" cy="9" r="2" fill="#444746"/><circle cx="3" cy="15" r="2" fill="#444746"/></svg>
<div class="a" style="left:20px;top:143px;width:32px;height:32px;border-radius:16px;background:#0097a7;color:#fff;font-size:17px;line-height:32px;text-align:center">Д</div>
<div class="a" style="left:68px;top:150px;font-size:14.2px;line-height:18px;color:#1f1f1f;white-space:nowrap">Дмитро Бродяк</div>
<svg style="left:239px;top:147px" width="24" height="24" viewBox="0 0 24 24"><g stroke="#444746" stroke-width="1.9" fill="none"><path d="M10 7V5a3 3 0 0 1 6 0v6.5"/><path d="M6.5 11a6.5 6.5 0 0 0 9.8 5.6"/><path d="M19.5 11.2c0 1-.2 2-.7 3"/><path d="M13 18.2v3"/><path d="M4.5 4.2L19.8 20.2"/></g></svg>
<svg style="left:297px;top:150px" width="6" height="18" viewBox="0 0 6 18"><circle cx="3" cy="3" r="2" fill="#444746"/><circle cx="3" cy="9" r="2" fill="#444746"/><circle cx="3" cy="15" r="2" fill="#444746"/></svg>
<svg style="left:20px;top:199px" width="32" height="32" viewBox="0 0 57 57"><defs><clipPath id="cav10"><circle cx="28.5" cy="28.5" r="28.5"/></clipPath><filter id="fav10"><feGaussianBlur stdDeviation="0.6"/></filter></defs><g clip-path="url(#cav10)"><g filter="url(#fav10)"><rect width="57" height="57" fill="#a8d0e8"/><rect y="26" width="57" height="31" fill="#d8c8a0"/><rect y="25" width="57" height="5" fill="#6a7a80"/></g></g></svg>
<div class="a" style="left:68px;top:206px;font-size:14.2px;line-height:18px;color:#1f1f1f;white-space:nowrap">Дніпропетровська Філія</div>
<svg style="left:239px;top:203px" width="24" height="24" viewBox="0 0 24 24"><g stroke="#444746" stroke-width="1.9" fill="none"><path d="M10 7V5a3 3 0 0 1 6 0v6.5"/><path d="M6.5 11a6.5 6.5 0 0 0 9.8 5.6"/><path d="M19.5 11.2c0 1-.2 2-.7 3"/><path d="M13 18.2v3"/><path d="M4.5 4.2L19.8 20.2"/></g></svg>
<svg style="left:297px;top:206px" width="6" height="18" viewBox="0 0 6 18"><circle cx="3" cy="3" r="2" fill="#444746"/><circle cx="3" cy="9" r="2" fill="#444746"/><circle cx="3" cy="15" r="2" fill="#444746"/></svg>
<svg style="left:20px;top:255px" width="32" height="32" viewBox="0 0 57 57"><defs><clipPath id="cav11"><circle cx="28.5" cy="28.5" r="28.5"/></clipPath><filter id="fav11"><feGaussianBlur stdDeviation="0.6"/></filter></defs><g clip-path="url(#cav11)"><g filter="url(#fav11)"><rect width="57" height="57" fill="#a8d0e8"/><rect y="26" width="57" height="31" fill="#d8c8a0"/><rect y="25" width="57" height="5" fill="#6a7a80"/></g></g></svg>
<div class="a" style="left:68px;top:262px;font-size:14.2px;line-height:18px;color:#1f1f1f;white-space:nowrap">Дніпропетровська Філія</div>
<svg style="left:239px;top:259px" width="24" height="24" viewBox="0 0 24 24"><g stroke="#444746" stroke-width="1.9" fill="none"><path d="M10 7V5a3 3 0 0 1 6 0v6.5"/><path d="M6.5 11a6.5 6.5 0 0 0 9.8 5.6"/><path d="M19.5 11.2c0 1-.2 2-.7 3"/><path d="M13 18.2v3"/><path d="M4.5 4.2L19.8 20.2"/></g></svg>
<svg style="left:297px;top:262px" width="6" height="18" viewBox="0 0 6 18"><circle cx="3" cy="3" r="2" fill="#444746"/><circle cx="3" cy="9" r="2" fill="#444746"/><circle cx="3" cy="15" r="2" fill="#444746"/></svg>
<svg style="left:20px;top:311px" width="32" height="32" viewBox="0 0 57 57"><defs><clipPath id="cav12"><circle cx="28.5" cy="28.5" r="28.5"/></clipPath><filter id="fav12"><feGaussianBlur stdDeviation="0.6"/></filter></defs><g clip-path="url(#cav12)"><g filter="url(#fav12)"><rect width="57" height="57" fill="#6aa8e8"/><ellipse cx="20" cy="20" rx="14" ry="8" fill="#fff"/><ellipse cx="42" cy="14" rx="10" ry="6" fill="#eef"/>
<rect y="32" width="57" height="25" fill="#3a7a20"/><g fill="#f5c810"><circle cx="10" cy="38" r="6"/><circle cx="25" cy="40" r="7"/><circle cx="42" cy="38" r="6"/><circle cx="16" cy="50" r="6"/><circle cx="36" cy="51" r="6"/><circle cx="52" cy="50" r="5"/></g></g></g></svg>
<div class="a" style="left:68px;top:318px;font-size:14.2px;line-height:18px;color:#1f1f1f;white-space:nowrap">Дніпропетровська філі…</div>
<svg style="left:239px;top:315px" width="24" height="24" viewBox="0 0 24 24"><g stroke="#444746" stroke-width="1.9" fill="none"><path d="M10 7V5a3 3 0 0 1 6 0v6.5"/><path d="M6.5 11a6.5 6.5 0 0 0 9.8 5.6"/><path d="M19.5 11.2c0 1-.2 2-.7 3"/><path d="M13 18.2v3"/><path d="M4.5 4.2L19.8 20.2"/></g></svg>
<svg style="left:297px;top:318px" width="6" height="18" viewBox="0 0 6 18"><circle cx="3" cy="3" r="2" fill="#444746"/><circle cx="3" cy="9" r="2" fill="#444746"/><circle cx="3" cy="15" r="2" fill="#444746"/></svg>
<div class="a" style="left:20px;top:367px;width:32px;height:32px;border-radius:16px;background:#33691e;color:#fff;font-size:17px;line-height:32px;text-align:center">е</div>
<div class="a" style="left:68px;top:374px;font-size:14.2px;line-height:18px;color:#1f1f1f;white-space:nowrap">елена пожидаева</div>
<svg style="left:239px;top:371px" width="24" height="24" viewBox="0 0 24 24"><g stroke="#444746" stroke-width="1.9" fill="none"><path d="M10 7V5a3 3 0 0 1 6 0v6.5"/><path d="M6.5 11a6.5 6.5 0 0 0 9.8 5.6"/><path d="M19.5 11.2c0 1-.2 2-.7 3"/><path d="M13 18.2v3"/><path d="M4.5 4.2L19.8 20.2"/></g></svg>
<svg style="left:297px;top:374px" width="6" height="18" viewBox="0 0 6 18"><circle cx="3" cy="3" r="2" fill="#444746"/><circle cx="3" cy="9" r="2" fill="#444746"/><circle cx="3" cy="15" r="2" fill="#444746"/></svg>
<svg style="left:20px;top:423px" width="32" height="32" viewBox="0 0 57 57"><defs><clipPath id="cav13"><circle cx="28.5" cy="28.5" r="28.5"/></clipPath><filter id="fav13"><feGaussianBlur stdDeviation="0.6"/></filter></defs><g clip-path="url(#cav13)"><g filter="url(#fav13)"><rect width="57" height="57" fill="#f0e4bc"/><circle cx="30" cy="28" r="26" fill="#f8f0d4"/>
<ellipse cx="30" cy="31" rx="14" ry="18" fill="#d0a088"/>
<ellipse cx="16" cy="30" rx="2.5" ry="4" fill="#c89080"/><ellipse cx="44" cy="30" rx="2.5" ry="4" fill="#c89080"/>
<path d="M15 26c-2-14 8-20 16-20s16 5 14 20c-2-6-5-10-14-10s-13 4-16 10z" fill="#5a3a28"/>
<path d="M23 30h5M33 30h5" stroke="#6a4a3a" stroke-width="1.3"/>
<path d="M26 41c3 1 6 1 9 0" stroke="#a06a5a" stroke-width="1.2" fill="none"/>
<path d="M10 57c3-7 10-10 20-10s17 3 20 10z" fill="#f4f4f0"/><path d="M12 57c2-5 6-8 10-9l4 9zM48 57c-2-5-6-8-10-9l-4 9z" fill="#2a2a30"/></g></g></svg>
<div class="a" style="left:68px;top:422px;font-size:14.2px;line-height:18px;color:#1f1f1f;white-space:nowrap">Євгеній Стариченко</div>
<div class="a" style="left:68px;top:440px;font-size:12.2px;line-height:16px;color:#5f6368;white-space:nowrap">Організатор зустрічі</div>
<svg style="left:239px;top:427px" width="24" height="24" viewBox="0 0 24 24"><g stroke="#444746" stroke-width="1.9" fill="none"><path d="M10 7V5a3 3 0 0 1 6 0v6.5"/><path d="M6.5 11a6.5 6.5 0 0 0 9.8 5.6"/><path d="M19.5 11.2c0 1-.2 2-.7 3"/><path d="M13 18.2v3"/><path d="M4.5 4.2L19.8 20.2"/></g></svg>
<svg style="left:297px;top:430px" width="6" height="18" viewBox="0 0 6 18"><circle cx="3" cy="3" r="2" fill="#444746"/><circle cx="3" cy="9" r="2" fill="#444746"/><circle cx="3" cy="15" r="2" fill="#444746"/></svg>
<div class="a" style="left:20px;top:479px;width:32px;height:32px;border-radius:16px;background:#5c6bc0;color:#fff;font-size:17px;line-height:32px;text-align:center">Ж</div>
<div class="a" style="left:68px;top:486px;font-size:14.2px;line-height:18px;color:#1f1f1f;white-space:nowrap">Житомирська Філія</div>
<svg style="left:239px;top:483px" width="24" height="24" viewBox="0 0 24 24"><g stroke="#444746" stroke-width="1.9" fill="none"><path d="M10 7V5a3 3 0 0 1 6 0v6.5"/><path d="M6.5 11a6.5 6.5 0 0 0 9.8 5.6"/><path d="M19.5 11.2c0 1-.2 2-.7 3"/><path d="M13 18.2v3"/><path d="M4.5 4.2L19.8 20.2"/></g></svg>
<svg style="left:297px;top:486px" width="6" height="18" viewBox="0 0 6 18"><circle cx="3" cy="3" r="2" fill="#444746"/><circle cx="3" cy="9" r="2" fill="#444746"/><circle cx="3" cy="15" r="2" fill="#444746"/></svg>
<div class="a" style="left:20px;top:535px;width:32px;height:32px;border-radius:16px;background:#0097a7;color:#fff;font-size:17px;line-height:32px;text-align:center">З</div>
<div class="a" style="left:68px;top:542px;font-size:14.2px;line-height:18px;color:#1f1f1f;white-space:nowrap">Закарпатська філія УІЕ…</div>
<svg style="left:239px;top:539px" width="24" height="24" viewBox="0 0 24 24"><g stroke="#444746" stroke-width="1.9" fill="none"><path d="M10 7V5a3 3 0 0 1 6 0v6.5"/><path d="M6.5 11a6.5 6.5 0 0 0 9.8 5.6"/><path d="M19.5 11.2c0 1-.2 2-.7 3"/><path d="M13 18.2v3"/><path d="M4.5 4.2L19.8 20.2"/></g></svg>
<svg style="left:297px;top:542px" width="6" height="18" viewBox="0 0 6 18"><circle cx="3" cy="3" r="2" fill="#444746"/><circle cx="3" cy="9" r="2" fill="#444746"/><circle cx="3" cy="15" r="2" fill="#444746"/></svg>
<div class="a" style="left:20px;top:591px;width:32px;height:32px;border-radius:16px;background:#c2185b;color:#fff;font-size:17px;line-height:32px;text-align:center">І</div>
<div class="a" style="left:68px;top:598px;font-size:14.2px;line-height:18px;color:#1f1f1f;white-space:nowrap">Іра Неохотник</div>
<svg style="left:239px;top:595px" width="24" height="24" viewBox="0 0 24 24"><g stroke="#444746" stroke-width="1.9" fill="none"><path d="M10 7V5a3 3 0 0 1 6 0v6.5"/><path d="M6.5 11a6.5 6.5 0 0 0 9.8 5.6"/><path d="M19.5 11.2c0 1-.2 2-.7 3"/><path d="M13 18.2v3"/><path d="M4.5 4.2L19.8 20.2"/></g></svg>
<svg style="left:297px;top:598px" width="6" height="18" viewBox="0 0 6 18"><circle cx="3" cy="3" r="2" fill="#444746"/><circle cx="3" cy="9" r="2" fill="#444746"/><circle cx="3" cy="15" r="2" fill="#444746"/></svg>
<div class="a" style="left:20px;top:647px;width:32px;height:32px;border-radius:16px;background:#c2185b;color:#fff;font-size:17px;line-height:32px;text-align:center">І</div>
<div class="a" style="left:68px;top:654px;font-size:14.2px;line-height:18px;color:#1f1f1f;white-space:nowrap">Ірина Тучак</div>
<svg style="left:239px;top:651px" width="24" height="24" viewBox="0 0 24 24"><g stroke="#444746" stroke-width="1.9" fill="none"><path d="M10 7V5a3 3 0 0 1 6 0v6.5"/><path d="M6.5 11a6.5 6.5 0 0 0 9.8 5.6"/><path d="M19.5 11.2c0 1-.2 2-.7 3"/><path d="M13 18.2v3"/><path d="M4.5 4.2L19.8 20.2"/></g></svg>
<svg style="left:297px;top:654px" width="6" height="18" viewBox="0 0 6 18"><circle cx="3" cy="3" r="2" fill="#444746"/><circle cx="3" cy="9" r="2" fill="#444746"/><circle cx="3" cy="15" r="2" fill="#444746"/></svg>
<div class="a" style="left:20px;top:703px;width:32px;height:32px;border-radius:16px;background:#7b1fa2;color:#fff;font-size:17px;line-height:32px;text-align:center">К</div>
<div class="a" style="left:68px;top:710px;font-size:14.2px;line-height:18px;color:#1f1f1f;white-space:nowrap">Карлівка Полтавська ф…</div>
<svg style="left:239px;top:707px" width="24" height="24" viewBox="0 0 24 24"><g stroke="#444746" stroke-width="1.9" fill="none"><path d="M10 7V5a3 3 0 0 1 6 0v6.5"/><path d="M6.5 11a6.5 6.5 0 0 0 9.8 5.6"/><path d="M19.5 11.2c0 1-.2 2-.7 3"/><path d="M13 18.2v3"/><path d="M4.5 4.2L19.8 20.2"/></g></svg>
<svg style="left:297px;top:710px" width="6" height="18" viewBox="0 0 6 18"><circle cx="3" cy="3" r="2" fill="#444746"/><circle cx="3" cy="9" r="2" fill="#444746"/><circle cx="3" cy="15" r="2" fill="#444746"/></svg>
</div>
<div class="a" style="left:1895px;top:444px;width:7px;height:107px;border-radius:4px;background:#dadce0"></div>
<div class="a" style="left:24px;top:989px;font-size:15.6px;line-height:22px;color:#fff;font-weight:bold;white-space:nowrap">10:27</div>
<div class="a" style="left:75px;top:991px;width:1px;height:18px;background:#e8eaed"></div>
<div class="a" style="left:88px;top:989px;font-size:16.7px;line-height:22px;color:#fff;font-weight:bold;white-space:nowrap">ria-ivez-ota</div>
<div class="a" style="left:678px;top:976px;width:88px;height:48px;border-radius:12px;background:#601410"></div>
<div class="a" style="left:718px;top:976px;width:48px;height:48px;border-radius:12px;background:#f9dedc"></div>
<svg style="left:695px;top:995px" width="12" height="8" viewBox="0 0 12 8"><path d="M2 6.5l4-4 4 4" stroke="#f9dedc" stroke-width="2" fill="none"/></svg>
<svg style="left:730px;top:988px" width="24" height="24" viewBox="0 0 24 24"><path d="M19 11h-1.7c0 .74-.16 1.43-.43 2.05l1.23 1.23c.56-.98.9-2.09.9-3.28zm-4.02.17c0-.06.02-.11.02-.17V5c0-1.66-1.34-3-3-3S9 3.34 9 5v.18l5.98 5.99zM4.27 3L3 4.27l6.01 6.01V11c0 1.66 1.33 3 2.99 3 .22 0 .44-.03.65-.08l1.66 1.66c-.71.33-1.5.52-2.31.52-2.76 0-5.3-2.1-5.3-5.1H5c0 3.41 2.72 6.23 6 6.72V21h2v-3.28c.91-.13 1.77-.45 2.54-.9L19.73 21 21 19.73 4.27 3z" fill="#601410"/></svg>
<div class="a" style="left:774px;top:976px;width:88px;height:48px;border-radius:12px;background:#601410"></div>
<div class="a" style="left:814px;top:976px;width:48px;height:48px;border-radius:12px;background:#f9dedc"></div>
<svg style="left:791px;top:995px" width="12" height="8" viewBox="0 0 12 8"><path d="M2 6.5l4-4 4 4" stroke="#f9dedc" stroke-width="2" fill="none"/></svg>
<svg style="left:826px;top:988px" width="24" height="24" viewBox="0 0 24 24"><path d="M4 6h11v12H4z M15 10.5l5-3.5v10l-5-3.5" stroke="#601410" stroke-width="2.2" fill="none" stroke-linejoin="round"/><path d="M3 3l16 18" stroke="#601410" stroke-width="2.2"/></svg>
<div class="a" style="left:870px;top:976px;width:56px;height:48px;border-radius:24px;background:#333537"></div>
<div class="a" style="left:934px;top:976px;width:56px;height:48px;border-radius:24px;background:#333537"></div>
<div class="a" style="left:998px;top:976px;width:56px;height:48px;border-radius:24px;background:#333537"></div>
<div class="a" style="left:1062px;top:976px;width:56px;height:48px;border-radius:24px;background:#333537"></div>
<div class="a" style="left:1126px;top:976px;width:36px;height:48px;border-radius:18px;background:#333537"></div>
<svg style="left:887px;top:990px" width="22" height="20" viewBox="0 0 22 20"><rect x="2" y="3" width="18" height="14" rx="1" fill="none" stroke="#e3e3e3" stroke-width="2"/><path d="M9.5 8H6.5v4h3M15.5 8h-3v4h3" stroke="#e3e3e3" stroke-width="1.8" fill="none"/></svg>
<svg style="left:950px;top:988px" width="24" height="24" viewBox="0 0 24 24"><circle cx="12" cy="12" r="9.5" fill="none" stroke="#e3e3e3" stroke-width="2"/><circle cx="8.5" cy="9.5" r="1.5" fill="#e3e3e3"/><circle cx="15.5" cy="9.5" r="1.5" fill="#e3e3e3"/><path d="M7 13h10a5 5 0 0 1-10 0z" fill="#e3e3e3"/></svg>
<svg style="left:1014px;top:988px" width="24" height="24" viewBox="0 0 24 24"><rect x="3" y="4" width="18" height="15" rx="1" fill="none" stroke="#e3e3e3" stroke-width="2"/><path d="M12 15V9M9 11.5l3-3 3 3" stroke="#e3e3e3" stroke-width="2" fill="none"/></svg>
<svg style="left:1078px;top:987px" width="24" height="26" viewBox="0 0 24 26"><path d="M7 13V6a1.5 1.5 0 0 1 3 0v6V3.5a1.5 1.5 0 0 1 3 0V12V4.5a1.5 1.5 0 0 1 3 0V13V8a1.5 1.5 0 0 1 3 0v9c0 4-3 7-7 7-3 0-5-1.5-6.5-4L3 15c-.8-1.2.8-2.6 2-1.5z" fill="none" stroke="#e3e3e3" stroke-width="1.8" stroke-linejoin="round"/></svg>
<svg style="left:1141px;top:991px" width="6" height="18" viewBox="0 0 6 18"><circle cx="3" cy="2.5" r="2" fill="#e3e3e3"/><circle cx="3" cy="9" r="2" fill="#e3e3e3"/><circle cx="3" cy="15.5" r="2" fill="#e3e3e3"/></svg>
<div class="a" style="left:1170px;top:976px;width:72px;height:48px;border-radius:24px;background:#dc362e"></div>
<svg style="left:1193px;top:993px" width="26" height="14" viewBox="0 0 26 14"><path d="M1.5 8.5C6 3 20 3 24.5 8.5l-1 3.3-4.5-1.2V7.8C15 6.5 11 6.5 7 7.8v2.8l-4.5 1.2z" fill="#fff"/></svg>
<svg style="left:1729px;top:989px" width="22" height="22" viewBox="0 0 22 22"><circle cx="11" cy="11" r="9.5" fill="none" stroke="#fff" stroke-width="2"/><rect x="10" y="9.5" width="2.2" height="6.5" fill="#fff"/><circle cx="11.1" cy="6.8" r="1.3" fill="#fff"/></svg>
<svg style="left:1776px;top:991px" width="24" height="18" viewBox="0 0 24 18"><circle cx="15.5" cy="5" r="4.3" fill="#a8c7fa"/><circle cx="8.5" cy="5" r="4.6" fill="#202124"/><circle cx="8.5" cy="5" r="4.3" fill="#a8c7fa"/><path d="M16.5 10.5c3.5.3 6.5 1.8 6.5 4.5v2.5h-4v-2.5c0-1.8-1-3.3-2.5-4.5z" fill="#a8c7fa"/><path d="M0 17.5V15c0-3 4-4.5 8.5-4.5S17 12 17 15v2.5z" fill="#a8c7fa"/></svg>
<div class="a" style="left:1789px;top:968px;width:28px;height:19px;border-radius:10px;background:#5f6368;color:#fff;font-size:12px;font-weight:bold;line-height:19px;text-align:center">92</div>
<svg style="left:1825px;top:989px" width="22" height="22" viewBox="0 0 22 22"><path d="M1.5 1.5h19v15H5.5L1.5 20.5z" fill="none" stroke="#fff" stroke-width="2" stroke-linejoin="round"/><path d="M5 5.5h12M5 8.8h12M5 12h8" stroke="#fff" stroke-width="1.8"/></svg>
<svg style="left:1873px;top:989px" width="22" height="22" viewBox="0 0 22 22"><path d="M11 2l4 6.5H7z" fill="none" stroke="#fff" stroke-width="2.2" stroke-linejoin="round"/><rect x="2" y="12.5" width="6.5" height="6.5" fill="none" stroke="#fff" stroke-width="2.2"/><circle cx="16" cy="15.8" r="3.5" fill="none" stroke="#fff" stroke-width="2.2"/></svg>
<div class="a" style="left:0;top:1040px;width:1920px;height:40px;background:#24373b"></div>
<svg style="left:16px;top:1052px" width="17" height="17" viewBox="0 0 17 17"><path d="M0 2.4l6.9-1v6.7H0zM7.7 1.3L17 0v8.1H7.7zM0 8.9h6.9v6.7L0 14.6zM7.7 8.9H17V17l-9.3-1.3z" fill="#fff"/></svg>
<div class="a" style="left:48px;top:1040px;width:288px;height:40px;background:#f0f0f0;border:1px solid #d0d0d0"></div>
<svg style="left:59px;top:1051px" width="18" height="18" viewBox="0 0 18 18"><circle cx="11" cy="7" r="5" fill="none" stroke="#222" stroke-width="1.3"/><path d="M7.3 10.7L1.5 16.5" stroke="#222" stroke-width="1.5"/></svg>
<div class="a" style="left:88px;top:1049px;font-size:15px;line-height:22px;color:#333;white-space:nowrap">Поиск</div>
<svg style="left:262px;top:1042px" width="70" height="38" viewBox="0 0 70 38"><ellipse cx="35" cy="31" rx="33" ry="5" fill="#52c0d8"/><ellipse cx="35" cy="30" rx="26" ry="3" fill="#9be0ee"/>
<path d="M8 28c2-8 4-14 8-18-1 6 0 12 2 17M60 28c-2-8-4-13-8-17 1 6 0 12-2 17" stroke="#6ab04c" stroke-width="2" fill="none"/>
<ellipse cx="36" cy="22" rx="11" ry="9" fill="#a8704a"/><circle cx="36" cy="11" r="8" fill="#b8805a"/><ellipse cx="36" cy="14" rx="4.5" ry="3" fill="#f0d8c0"/><circle cx="33" cy="10" r="1" fill="#222"/><circle cx="39" cy="10" r="1" fill="#222"/><circle cx="36" cy="12.5" r="1" fill="#222"/></svg>
<svg style="left:351px;top:1050px" width="18" height="20" viewBox="0 0 18 20"><path d="M1 3h11M1 17h11M14 3v14" stroke="#fff" stroke-width="1.2"/><rect x="2" y="6" width="10" height="8" fill="none" stroke="#fff" stroke-width="1.2"/><path d="M16 4v2M16 8v6" stroke="#fff" stroke-width="1.2"/></svg>
<svg style="left:398px;top:1048px" width="25" height="25" viewBox="0 0 25 25"><defs><linearGradient id="edg" x1="0" y1="0" x2="1" y2="1"><stop offset="0" stop-color="#35c1f1"/><stop offset="1" stop-color="#1b5fb8"/></linearGradient></defs><circle cx="12.5" cy="12.5" r="12" fill="url(#edg)"/><path d="M5 15c0-5 4-8 8-8s6 2 6 5c0 2-2 3-4 3-3 0-5 2-5 5 0 1 .5 2 1 3-4-1-6-4-6-8z" fill="#0d3a82"/><path d="M13 19c3 0 8-1 11-4-1 5-5 9-11 9-1-1-1-3 0-5z" fill="#50e3a0"/></svg>
<svg style="left:447px;top:1049px" width="24" height="22" viewBox="0 0 24 22"><path d="M0 2h9l2 2h13v17H0z" fill="#f4b400"/><rect x="0" y="6" width="24" height="15" fill="#ffd35c"/><rect x="7" y="13" width="10" height="5" fill="#2c7dd8"/><rect x="10" y="17" width="4" height="4" fill="#2c7dd8"/></svg>
<div class="a" style="left:440px;top:1078px;width:40px;height:2px;background:#76b9ed"></div>
<svg style="left:497px;top:1049px" width="24" height="24" viewBox="0 0 24 24"><rect x="8" y="4" width="15" height="16" rx="1.5" fill="#28a8ea"/><path d="M9 9l7 5 7-5" stroke="#fff" stroke-width="1.2" fill="none"/><rect x="1" y="4" width="12" height="16" rx="1.5" fill="#0a64ad"/><ellipse cx="7" cy="12" rx="3.3" ry="4" fill="none" stroke="#fff" stroke-width="1.8"/></svg>
<svg style="left:546px;top:1049px" width="24" height="24" viewBox="0 0 24 24"><rect x="8" y="2" width="15" height="20" rx="1" fill="#fff" stroke="#1e7145" stroke-width="1"/><path d="M12 6h9M12 10h9M12 14h9M12 18h9M16 3v18" stroke="#21a366" stroke-width="1"/><rect x="1" y="5" width="12" height="14" rx="1" fill="#107c41"/><path d="M4 8l5 8M9 8l-5 8" stroke="#fff" stroke-width="1.7"/></svg>
<div class="a" style="left:538px;top:1078px;width:40px;height:2px;background:#76b9ed"></div>
<svg style="left:596px;top:1048px" width="20" height="24" viewBox="0 0 20 24"><rect x="1" y="1" width="18" height="22" rx="1" fill="#4a5a6a"/><rect x="3" y="3" width="14" height="4" fill="#68c2f0"/><g fill="#cfd8dc"><rect x="3" y="9" width="3" height="3"/><rect x="8.5" y="9" width="3" height="3"/><rect x="3" y="14" width="3" height="3"/><rect x="8.5" y="14" width="3" height="3"/><rect x="3" y="19" width="3" height="3"/><rect x="8.5" y="19" width="3" height="3"/></g><rect x="14" y="14" width="3" height="8" fill="#2b7cd3"/><rect x="14" y="9" width="3" height="3" fill="#cfd8dc"/></svg>
<svg style="left:644px;top:1049px" width="24" height="24" viewBox="0 0 24 24"><circle cx="14" cy="12" r="9.5" fill="#ed6c47"/><path d="M14 2.5a9.5 9.5 0 0 1 9.5 9.5H14z" fill="#ff8f6b"/><rect x="1" y="5" width="12" height="14" rx="1" fill="#c43e1c"/><path d="M5 16V8h3a2.3 2.3 0 0 1 0 4.6H5" stroke="#fff" stroke-width="1.7" fill="none"/></svg>
<svg style="left:693px;top:1048px" width="24" height="24" viewBox="0 0 24 24"><rect x="0" y="0" width="24" height="24" rx="1" fill="#2d62a8"/><path d="M5 20L11 4h2l6 16h-3l-1.5-4h-5L8 20zM10.3 13.5h3.4L12 8.5z" fill="#fff"/></svg>
<svg style="left:742px;top:1049px" width="24" height="24" viewBox="0 0 24 24"><rect x="8" y="2" width="15" height="20" rx="1" fill="#fff" stroke="#2b579a" stroke-width="1"/><path d="M12 7h9M12 10h9M12 13h9M12 16h9" stroke="#2b579a" stroke-width="1.2"/><rect x="1" y="5" width="12" height="14" rx="1" fill="#185abd"/><path d="M3 8.5l1.8 7 1.7-5 1.7 5 1.8-7" stroke="#fff" stroke-width="1.2" fill="none"/></svg>
<div class="a" style="left:734px;top:1078px;width:40px;height:2px;background:#76b9ed"></div>
<svg style="left:790px;top:1048px" width="25" height="25" viewBox="0 0 25 25"><path d="M12.5 1.5a11 11 0 0 0-9.4 16.7L1.5 23.5l5.5-1.5A11 11 0 1 0 12.5 1.5z" fill="none" stroke="#25d366" stroke-width="2.2"/><path d="M8.5 7c-.8.8-1 2.2 0 4s3 4 5 5c1.5.6 2.8.3 3.5-.6l.3-1.2-2.2-1.1-1 1c-1.5-.6-3-2.1-3.6-3.6l1-1-1-2.3z" fill="#25d366"/></svg>
<div class="a" style="left:828px;top:1040px;width:48px;height:40px;background:#3e5256"></div>
<div class="a" style="left:828px;top:1078px;width:48px;height:2px;background:#76b9ed"></div>
<svg style="left:840px;top:1048px" width="24" height="24" viewBox="0 0 24 24"><path d="M12 12L2.6 7A11 11 0 0 1 21.4 6.5H12z" fill="#db4437"/><path d="M12 12l-9.4-5A11 11 0 0 0 11 23l5.5-9.5z" fill="#0f9d58"/><path d="M12 12h9.4A11 11 0 0 1 11 23l5.5-9.5z" fill="#f4b400"/><circle cx="12" cy="12" r="5.2" fill="#fff"/><circle cx="12" cy="12" r="4.1" fill="#4285f4"/></svg>
<svg style="left:1519px;top:1054px" width="28" height="20" viewBox="0 0 28 20"><path d="M6 19a5.5 5.5 0 0 1-.5-11A7.5 7.5 0 0 1 20 7a6 6 0 0 1 2 12z" fill="#b4cfe8"/><path d="M6 19h16a6 6 0 0 0 2-3H3a5 5 0 0 0 3 3z" fill="#dbe8f5"/></svg>
<div class="a" style="left:1529px;top:1048px;width:12px;height:12px;border-radius:6px;background:#d32f2f;color:#fff;font-size:8px;line-height:12px;text-align:center">1</div>
<div class="a" style="left:1553px;top:1049px;font-size:14.1px;line-height:22px;color:#fff;white-space:nowrap">-7°C&nbsp;&nbsp;Mostly cloudy</div>
<svg style="left:1698px;top:1054px" width="14" height="10" viewBox="0 0 14 10"><path d="M1 8l6-6 6 6" stroke="#fff" stroke-width="1.3" fill="none"/></svg>
<svg style="left:1720px;top:1051px" width="18" height="18" viewBox="0 0 18 18"><rect x="1" y="1.5" width="14" height="10" fill="none" stroke="#fff" stroke-width="1.1"/><path d="M8 11.5v4M4 16h8" stroke="#fff" stroke-width="1.1"/><path d="M1 1.5h4v3H1z" fill="#fff"/></svg>
<svg style="left:1744px;top:1052px" width="18" height="16" viewBox="0 0 18 16"><path d="M1 5.5h3l4-4v13l-4-4H1z" fill="none" stroke="#fff" stroke-width="1.1"/><path d="M11 5.5l5 5M16 5.5l-5 5" stroke="#fff" stroke-width="1.1"/></svg>
<div class="a" style="left:1772px;top:1049px;font-size:13px;line-height:22px;color:#fff;white-space:nowrap">УКР</div>
<div class="a" style="left:1803px;top:1041px;width:60px;font-size:12.5px;line-height:19px;color:#fff;text-align:center;white-space:nowrap">10:27<br>19.02.2025</div>
<svg style="left:1877px;top:1050px" width="20" height="20" viewBox="0 0 20 20"><path d="M1.5 2.5h17v12H8l-4 4v-4H1.5z" fill="none" stroke="#fff" stroke-width="1.1"/></svg>
<div class="a" style="left:1915px;top:1040px;width:1px;height:40px;background:#5a6a6e"></div>
</body></html>
